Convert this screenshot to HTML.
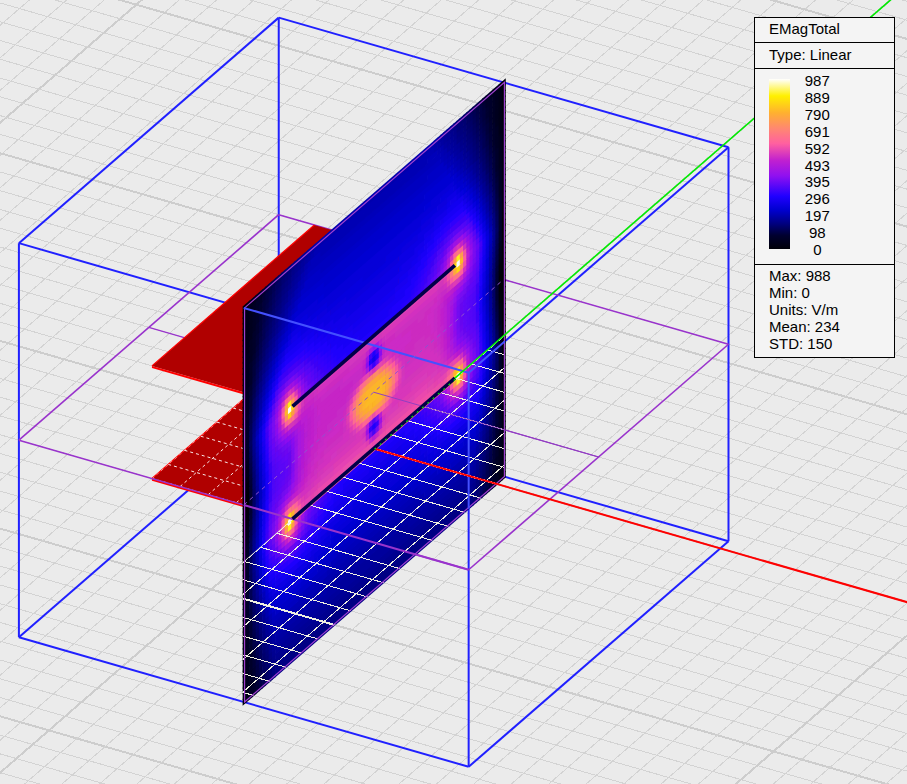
<!DOCTYPE html><html><head><meta charset="utf-8"><style>html,body{margin:0;padding:0;width:907px;height:784px;overflow:hidden;background:#ebebeb}</style></head><body><svg width="907" height="784" viewBox="0 0 907 784" style="position:absolute;left:0;top:0">
<rect x="0" y="0" width="907" height="784" fill="#ebebeb"/>
<g shape-rendering="crispEdges">
<line x1="-1400.3" y1="688.34" x2="-101.1" y2="-439.18" stroke="#cdcdcd" stroke-width="2"/>
<line x1="-1400.3" y1="688.34" x2="848.5" y2="1336.18" stroke="#cdcdcd" stroke-width="2"/>
<line x1="-1372.19" y1="696.44" x2="-72.99" y2="-431.08" stroke="#d3d3d3" stroke-width="1"/>
<line x1="-1384.06" y1="674.25" x2="864.74" y2="1322.09" stroke="#d3d3d3" stroke-width="1"/>
<line x1="-1344.08" y1="704.54" x2="-44.88" y2="-422.98" stroke="#d3d3d3" stroke-width="1"/>
<line x1="-1367.82" y1="660.15" x2="880.98" y2="1307.99" stroke="#d3d3d3" stroke-width="1"/>
<line x1="-1315.97" y1="712.63" x2="-16.77" y2="-414.89" stroke="#d3d3d3" stroke-width="1"/>
<line x1="-1351.58" y1="646.06" x2="897.22" y2="1293.9" stroke="#d3d3d3" stroke-width="1"/>
<line x1="-1287.86" y1="720.73" x2="11.34" y2="-406.79" stroke="#d3d3d3" stroke-width="1"/>
<line x1="-1335.34" y1="631.96" x2="913.46" y2="1279.8" stroke="#d3d3d3" stroke-width="1"/>
<line x1="-1259.75" y1="728.83" x2="39.45" y2="-398.69" stroke="#d3d3d3" stroke-width="1"/>
<line x1="-1319.1" y1="617.87" x2="929.7" y2="1265.71" stroke="#d3d3d3" stroke-width="1"/>
<line x1="-1231.64" y1="736.93" x2="67.56" y2="-390.59" stroke="#d3d3d3" stroke-width="1"/>
<line x1="-1302.86" y1="603.78" x2="945.94" y2="1251.62" stroke="#d3d3d3" stroke-width="1"/>
<line x1="-1203.53" y1="745.03" x2="95.67" y2="-382.49" stroke="#d3d3d3" stroke-width="1"/>
<line x1="-1286.62" y1="589.68" x2="962.18" y2="1237.52" stroke="#d3d3d3" stroke-width="1"/>
<line x1="-1175.42" y1="753.12" x2="123.78" y2="-374.4" stroke="#d3d3d3" stroke-width="1"/>
<line x1="-1270.38" y1="575.59" x2="978.42" y2="1223.43" stroke="#d3d3d3" stroke-width="1"/>
<line x1="-1147.31" y1="761.22" x2="151.89" y2="-366.3" stroke="#d3d3d3" stroke-width="1"/>
<line x1="-1254.14" y1="561.49" x2="994.66" y2="1209.33" stroke="#d3d3d3" stroke-width="1"/>
<line x1="-1119.2" y1="769.32" x2="180" y2="-358.2" stroke="#d3d3d3" stroke-width="1"/>
<line x1="-1237.9" y1="547.4" x2="1010.9" y2="1195.24" stroke="#cdcdcd" stroke-width="2"/>
<line x1="-1091.09" y1="777.42" x2="208.11" y2="-350.1" stroke="#d3d3d3" stroke-width="1"/>
<line x1="-1221.66" y1="533.31" x2="1027.14" y2="1181.15" stroke="#d3d3d3" stroke-width="1"/>
<line x1="-1062.98" y1="785.52" x2="236.22" y2="-342" stroke="#d3d3d3" stroke-width="1"/>
<line x1="-1205.42" y1="519.21" x2="1043.38" y2="1167.05" stroke="#d3d3d3" stroke-width="1"/>
<line x1="-1034.87" y1="793.61" x2="264.33" y2="-333.91" stroke="#d3d3d3" stroke-width="1"/>
<line x1="-1189.18" y1="505.12" x2="1059.62" y2="1152.96" stroke="#d3d3d3" stroke-width="1"/>
<line x1="-1006.76" y1="801.71" x2="292.44" y2="-325.81" stroke="#d3d3d3" stroke-width="1"/>
<line x1="-1172.94" y1="491.02" x2="1075.86" y2="1138.86" stroke="#d3d3d3" stroke-width="1"/>
<line x1="-978.65" y1="809.81" x2="320.55" y2="-317.71" stroke="#d3d3d3" stroke-width="1"/>
<line x1="-1156.7" y1="476.93" x2="1092.1" y2="1124.77" stroke="#d3d3d3" stroke-width="1"/>
<line x1="-950.54" y1="817.91" x2="348.66" y2="-309.61" stroke="#d3d3d3" stroke-width="1"/>
<line x1="-1140.46" y1="462.84" x2="1108.34" y2="1110.68" stroke="#d3d3d3" stroke-width="1"/>
<line x1="-922.43" y1="826.01" x2="376.77" y2="-301.51" stroke="#d3d3d3" stroke-width="1"/>
<line x1="-1124.22" y1="448.74" x2="1124.58" y2="1096.58" stroke="#d3d3d3" stroke-width="1"/>
<line x1="-894.32" y1="834.1" x2="404.88" y2="-293.42" stroke="#d3d3d3" stroke-width="1"/>
<line x1="-1107.98" y1="434.65" x2="1140.82" y2="1082.49" stroke="#d3d3d3" stroke-width="1"/>
<line x1="-866.21" y1="842.2" x2="432.99" y2="-285.32" stroke="#d3d3d3" stroke-width="1"/>
<line x1="-1091.74" y1="420.55" x2="1157.06" y2="1068.39" stroke="#d3d3d3" stroke-width="1"/>
<line x1="-838.1" y1="850.3" x2="461.1" y2="-277.22" stroke="#cdcdcd" stroke-width="2"/>
<line x1="-1075.5" y1="406.46" x2="1173.3" y2="1054.3" stroke="#cdcdcd" stroke-width="2"/>
<line x1="-809.99" y1="858.4" x2="489.21" y2="-269.12" stroke="#d3d3d3" stroke-width="1"/>
<line x1="-1059.26" y1="392.37" x2="1189.54" y2="1040.21" stroke="#d3d3d3" stroke-width="1"/>
<line x1="-781.88" y1="866.5" x2="517.32" y2="-261.02" stroke="#d3d3d3" stroke-width="1"/>
<line x1="-1043.02" y1="378.27" x2="1205.78" y2="1026.11" stroke="#d3d3d3" stroke-width="1"/>
<line x1="-753.77" y1="874.59" x2="545.43" y2="-252.93" stroke="#d3d3d3" stroke-width="1"/>
<line x1="-1026.78" y1="364.18" x2="1222.02" y2="1012.02" stroke="#d3d3d3" stroke-width="1"/>
<line x1="-725.66" y1="882.69" x2="573.54" y2="-244.83" stroke="#d3d3d3" stroke-width="1"/>
<line x1="-1010.54" y1="350.08" x2="1238.26" y2="997.92" stroke="#d3d3d3" stroke-width="1"/>
<line x1="-697.55" y1="890.79" x2="601.65" y2="-236.73" stroke="#d3d3d3" stroke-width="1"/>
<line x1="-994.3" y1="335.99" x2="1254.5" y2="983.83" stroke="#d3d3d3" stroke-width="1"/>
<line x1="-669.44" y1="898.89" x2="629.76" y2="-228.63" stroke="#d3d3d3" stroke-width="1"/>
<line x1="-978.06" y1="321.9" x2="1270.74" y2="969.74" stroke="#d3d3d3" stroke-width="1"/>
<line x1="-641.33" y1="906.99" x2="657.87" y2="-220.53" stroke="#d3d3d3" stroke-width="1"/>
<line x1="-961.82" y1="307.8" x2="1286.98" y2="955.64" stroke="#d3d3d3" stroke-width="1"/>
<line x1="-613.22" y1="915.08" x2="685.98" y2="-212.44" stroke="#d3d3d3" stroke-width="1"/>
<line x1="-945.58" y1="293.71" x2="1303.22" y2="941.55" stroke="#d3d3d3" stroke-width="1"/>
<line x1="-585.11" y1="923.18" x2="714.09" y2="-204.34" stroke="#d3d3d3" stroke-width="1"/>
<line x1="-929.34" y1="279.61" x2="1319.46" y2="927.45" stroke="#d3d3d3" stroke-width="1"/>
<line x1="-557" y1="931.28" x2="742.2" y2="-196.24" stroke="#d3d3d3" stroke-width="1"/>
<line x1="-913.1" y1="265.52" x2="1335.7" y2="913.36" stroke="#cdcdcd" stroke-width="2"/>
<line x1="-528.89" y1="939.38" x2="770.31" y2="-188.14" stroke="#d3d3d3" stroke-width="1"/>
<line x1="-896.86" y1="251.43" x2="1351.94" y2="899.27" stroke="#d3d3d3" stroke-width="1"/>
<line x1="-500.78" y1="947.48" x2="798.42" y2="-180.04" stroke="#d3d3d3" stroke-width="1"/>
<line x1="-880.62" y1="237.33" x2="1368.18" y2="885.17" stroke="#d3d3d3" stroke-width="1"/>
<line x1="-472.67" y1="955.57" x2="826.53" y2="-171.95" stroke="#d3d3d3" stroke-width="1"/>
<line x1="-864.38" y1="223.24" x2="1384.42" y2="871.08" stroke="#d3d3d3" stroke-width="1"/>
<line x1="-444.56" y1="963.67" x2="854.64" y2="-163.85" stroke="#d3d3d3" stroke-width="1"/>
<line x1="-848.14" y1="209.14" x2="1400.66" y2="856.98" stroke="#d3d3d3" stroke-width="1"/>
<line x1="-416.45" y1="971.77" x2="882.75" y2="-155.75" stroke="#d3d3d3" stroke-width="1"/>
<line x1="-831.9" y1="195.05" x2="1416.9" y2="842.89" stroke="#d3d3d3" stroke-width="1"/>
<line x1="-388.34" y1="979.87" x2="910.86" y2="-147.65" stroke="#d3d3d3" stroke-width="1"/>
<line x1="-815.66" y1="180.96" x2="1433.14" y2="828.8" stroke="#d3d3d3" stroke-width="1"/>
<line x1="-360.23" y1="987.97" x2="938.97" y2="-139.55" stroke="#d3d3d3" stroke-width="1"/>
<line x1="-799.42" y1="166.86" x2="1449.38" y2="814.7" stroke="#d3d3d3" stroke-width="1"/>
<line x1="-332.12" y1="996.06" x2="967.08" y2="-131.46" stroke="#d3d3d3" stroke-width="1"/>
<line x1="-783.18" y1="152.77" x2="1465.62" y2="800.61" stroke="#d3d3d3" stroke-width="1"/>
<line x1="-304.01" y1="1004.16" x2="995.19" y2="-123.36" stroke="#d3d3d3" stroke-width="1"/>
<line x1="-766.94" y1="138.67" x2="1481.86" y2="786.51" stroke="#d3d3d3" stroke-width="1"/>
<line x1="-275.9" y1="1012.26" x2="1023.3" y2="-115.26" stroke="#cdcdcd" stroke-width="2"/>
<line x1="-750.7" y1="124.58" x2="1498.1" y2="772.42" stroke="#cdcdcd" stroke-width="2"/>
<line x1="-247.79" y1="1020.36" x2="1051.41" y2="-107.16" stroke="#d3d3d3" stroke-width="1"/>
<line x1="-734.46" y1="110.49" x2="1514.34" y2="758.33" stroke="#d3d3d3" stroke-width="1"/>
<line x1="-219.68" y1="1028.46" x2="1079.52" y2="-99.06" stroke="#d3d3d3" stroke-width="1"/>
<line x1="-718.22" y1="96.39" x2="1530.58" y2="744.23" stroke="#d3d3d3" stroke-width="1"/>
<line x1="-191.57" y1="1036.55" x2="1107.63" y2="-90.97" stroke="#d3d3d3" stroke-width="1"/>
<line x1="-701.98" y1="82.3" x2="1546.82" y2="730.14" stroke="#d3d3d3" stroke-width="1"/>
<line x1="-163.46" y1="1044.65" x2="1135.74" y2="-82.87" stroke="#d3d3d3" stroke-width="1"/>
<line x1="-685.74" y1="68.2" x2="1563.06" y2="716.04" stroke="#d3d3d3" stroke-width="1"/>
<line x1="-135.35" y1="1052.75" x2="1163.85" y2="-74.77" stroke="#d3d3d3" stroke-width="1"/>
<line x1="-669.5" y1="54.11" x2="1579.3" y2="701.95" stroke="#d3d3d3" stroke-width="1"/>
<line x1="-107.24" y1="1060.85" x2="1191.96" y2="-66.67" stroke="#d3d3d3" stroke-width="1"/>
<line x1="-653.26" y1="40.02" x2="1595.54" y2="687.86" stroke="#d3d3d3" stroke-width="1"/>
<line x1="-79.13" y1="1068.95" x2="1220.07" y2="-58.57" stroke="#d3d3d3" stroke-width="1"/>
<line x1="-637.02" y1="25.92" x2="1611.78" y2="673.76" stroke="#d3d3d3" stroke-width="1"/>
<line x1="-51.02" y1="1077.04" x2="1248.18" y2="-50.48" stroke="#d3d3d3" stroke-width="1"/>
<line x1="-620.78" y1="11.83" x2="1628.02" y2="659.67" stroke="#d3d3d3" stroke-width="1"/>
<line x1="-22.91" y1="1085.14" x2="1276.29" y2="-42.38" stroke="#d3d3d3" stroke-width="1"/>
<line x1="-604.54" y1="-2.27" x2="1644.26" y2="645.57" stroke="#d3d3d3" stroke-width="1"/>
<line x1="5.2" y1="1093.24" x2="1304.4" y2="-34.28" stroke="#d3d3d3" stroke-width="1"/>
<line x1="-588.3" y1="-16.36" x2="1660.5" y2="631.48" stroke="#cdcdcd" stroke-width="2"/>
<line x1="33.31" y1="1101.34" x2="1332.51" y2="-26.18" stroke="#d3d3d3" stroke-width="1"/>
<line x1="-572.06" y1="-30.45" x2="1676.74" y2="617.39" stroke="#d3d3d3" stroke-width="1"/>
<line x1="61.42" y1="1109.44" x2="1360.62" y2="-18.08" stroke="#d3d3d3" stroke-width="1"/>
<line x1="-555.82" y1="-44.55" x2="1692.98" y2="603.29" stroke="#d3d3d3" stroke-width="1"/>
<line x1="89.53" y1="1117.53" x2="1388.73" y2="-9.99" stroke="#d3d3d3" stroke-width="1"/>
<line x1="-539.58" y1="-58.64" x2="1709.22" y2="589.2" stroke="#d3d3d3" stroke-width="1"/>
<line x1="117.64" y1="1125.63" x2="1416.84" y2="-1.89" stroke="#d3d3d3" stroke-width="1"/>
<line x1="-523.34" y1="-72.74" x2="1725.46" y2="575.1" stroke="#d3d3d3" stroke-width="1"/>
<line x1="145.75" y1="1133.73" x2="1444.95" y2="6.21" stroke="#d3d3d3" stroke-width="1"/>
<line x1="-507.1" y1="-86.83" x2="1741.7" y2="561.01" stroke="#d3d3d3" stroke-width="1"/>
<line x1="173.86" y1="1141.83" x2="1473.06" y2="14.31" stroke="#d3d3d3" stroke-width="1"/>
<line x1="-490.86" y1="-100.92" x2="1757.94" y2="546.92" stroke="#d3d3d3" stroke-width="1"/>
<line x1="201.97" y1="1149.93" x2="1501.17" y2="22.41" stroke="#d3d3d3" stroke-width="1"/>
<line x1="-474.62" y1="-115.02" x2="1774.18" y2="532.82" stroke="#d3d3d3" stroke-width="1"/>
<line x1="230.08" y1="1158.02" x2="1529.28" y2="30.5" stroke="#d3d3d3" stroke-width="1"/>
<line x1="-458.38" y1="-129.11" x2="1790.42" y2="518.73" stroke="#d3d3d3" stroke-width="1"/>
<line x1="258.19" y1="1166.12" x2="1557.39" y2="38.6" stroke="#d3d3d3" stroke-width="1"/>
<line x1="-442.14" y1="-143.21" x2="1806.66" y2="504.63" stroke="#d3d3d3" stroke-width="1"/>
<line x1="286.3" y1="1174.22" x2="1585.5" y2="46.7" stroke="#cdcdcd" stroke-width="2"/>
<line x1="-425.9" y1="-157.3" x2="1822.9" y2="490.54" stroke="#cdcdcd" stroke-width="2"/>
<line x1="314.41" y1="1182.32" x2="1613.61" y2="54.8" stroke="#d3d3d3" stroke-width="1"/>
<line x1="-409.66" y1="-171.39" x2="1839.14" y2="476.45" stroke="#d3d3d3" stroke-width="1"/>
<line x1="342.52" y1="1190.42" x2="1641.72" y2="62.9" stroke="#d3d3d3" stroke-width="1"/>
<line x1="-393.42" y1="-185.49" x2="1855.38" y2="462.35" stroke="#d3d3d3" stroke-width="1"/>
<line x1="370.63" y1="1198.51" x2="1669.83" y2="70.99" stroke="#d3d3d3" stroke-width="1"/>
<line x1="-377.18" y1="-199.58" x2="1871.62" y2="448.26" stroke="#d3d3d3" stroke-width="1"/>
<line x1="398.74" y1="1206.61" x2="1697.94" y2="79.09" stroke="#d3d3d3" stroke-width="1"/>
<line x1="-360.94" y1="-213.68" x2="1887.86" y2="434.16" stroke="#d3d3d3" stroke-width="1"/>
<line x1="426.85" y1="1214.71" x2="1726.05" y2="87.19" stroke="#d3d3d3" stroke-width="1"/>
<line x1="-344.7" y1="-227.77" x2="1904.1" y2="420.07" stroke="#d3d3d3" stroke-width="1"/>
<line x1="454.96" y1="1222.81" x2="1754.16" y2="95.29" stroke="#d3d3d3" stroke-width="1"/>
<line x1="-328.46" y1="-241.86" x2="1920.34" y2="405.98" stroke="#d3d3d3" stroke-width="1"/>
<line x1="483.07" y1="1230.91" x2="1782.27" y2="103.39" stroke="#d3d3d3" stroke-width="1"/>
<line x1="-312.22" y1="-255.96" x2="1936.58" y2="391.88" stroke="#d3d3d3" stroke-width="1"/>
<line x1="511.18" y1="1239" x2="1810.38" y2="111.48" stroke="#d3d3d3" stroke-width="1"/>
<line x1="-295.98" y1="-270.05" x2="1952.82" y2="377.79" stroke="#d3d3d3" stroke-width="1"/>
<line x1="539.29" y1="1247.1" x2="1838.49" y2="119.58" stroke="#d3d3d3" stroke-width="1"/>
<line x1="-279.74" y1="-284.15" x2="1969.06" y2="363.69" stroke="#d3d3d3" stroke-width="1"/>
<line x1="567.4" y1="1255.2" x2="1866.6" y2="127.68" stroke="#d3d3d3" stroke-width="1"/>
<line x1="-263.5" y1="-298.24" x2="1985.3" y2="349.6" stroke="#cdcdcd" stroke-width="2"/>
<line x1="595.51" y1="1263.3" x2="1894.71" y2="135.78" stroke="#d3d3d3" stroke-width="1"/>
<line x1="-247.26" y1="-312.33" x2="2001.54" y2="335.51" stroke="#d3d3d3" stroke-width="1"/>
<line x1="623.62" y1="1271.4" x2="1922.82" y2="143.88" stroke="#d3d3d3" stroke-width="1"/>
<line x1="-231.02" y1="-326.43" x2="2017.78" y2="321.41" stroke="#d3d3d3" stroke-width="1"/>
<line x1="651.73" y1="1279.49" x2="1950.93" y2="151.97" stroke="#d3d3d3" stroke-width="1"/>
<line x1="-214.78" y1="-340.52" x2="2034.02" y2="307.32" stroke="#d3d3d3" stroke-width="1"/>
<line x1="679.84" y1="1287.59" x2="1979.04" y2="160.07" stroke="#d3d3d3" stroke-width="1"/>
<line x1="-198.54" y1="-354.62" x2="2050.26" y2="293.22" stroke="#d3d3d3" stroke-width="1"/>
<line x1="707.95" y1="1295.69" x2="2007.15" y2="168.17" stroke="#d3d3d3" stroke-width="1"/>
<line x1="-182.3" y1="-368.71" x2="2066.5" y2="279.13" stroke="#d3d3d3" stroke-width="1"/>
<line x1="736.06" y1="1303.79" x2="2035.26" y2="176.27" stroke="#d3d3d3" stroke-width="1"/>
<line x1="-166.06" y1="-382.8" x2="2082.74" y2="265.04" stroke="#d3d3d3" stroke-width="1"/>
<line x1="764.17" y1="1311.89" x2="2063.37" y2="184.37" stroke="#d3d3d3" stroke-width="1"/>
<line x1="-149.82" y1="-396.9" x2="2098.98" y2="250.94" stroke="#d3d3d3" stroke-width="1"/>
<line x1="792.28" y1="1319.98" x2="2091.48" y2="192.46" stroke="#d3d3d3" stroke-width="1"/>
<line x1="-133.58" y1="-410.99" x2="2115.22" y2="236.85" stroke="#d3d3d3" stroke-width="1"/>
<line x1="820.39" y1="1328.08" x2="2119.59" y2="200.56" stroke="#d3d3d3" stroke-width="1"/>
<line x1="-117.34" y1="-425.09" x2="2131.46" y2="222.75" stroke="#d3d3d3" stroke-width="1"/>
<line x1="848.5" y1="1336.18" x2="2147.7" y2="208.66" stroke="#cdcdcd" stroke-width="2"/>
<line x1="-101.1" y1="-439.18" x2="2147.7" y2="208.66" stroke="#cdcdcd" stroke-width="2"/>
</g>
<line x1="18.9" y1="243.14" x2="468.66" y2="372.7" stroke="#2020ff" stroke-width="2"/>
<line x1="278.74" y1="17.63" x2="728.5" y2="147.2" stroke="#2020ff" stroke-width="2"/>
<line x1="18.9" y1="243.14" x2="278.74" y2="17.63" stroke="#2020ff" stroke-width="2"/>
<line x1="468.66" y1="372.7" x2="728.5" y2="147.2" stroke="#2020ff" stroke-width="2"/>
<line x1="18.9" y1="637.21" x2="468.66" y2="766.78" stroke="#2020ff" stroke-width="2"/>
<line x1="278.74" y1="411.7" x2="728.5" y2="541.27" stroke="#2020ff" stroke-width="2"/>
<line x1="18.9" y1="637.21" x2="278.74" y2="411.7" stroke="#2020ff" stroke-width="2"/>
<line x1="468.66" y1="766.78" x2="728.5" y2="541.27" stroke="#2020ff" stroke-width="2"/>
<line x1="18.9" y1="637.21" x2="18.9" y2="243.14" stroke="#2020ff" stroke-width="2"/>
<line x1="468.66" y1="766.78" x2="468.66" y2="372.7" stroke="#2020ff" stroke-width="2"/>
<line x1="278.74" y1="411.7" x2="278.74" y2="17.63" stroke="#2020ff" stroke-width="2"/>
<line x1="728.5" y1="541.27" x2="728.5" y2="147.2" stroke="#2020ff" stroke-width="2"/>
<polygon points="151.95,478.48 292.5,518.97 454.9,378.03 314.35,337.54" fill="#b00000"/><polygon points="151.95,478.48 292.5,518.97 292.5,521.17 151.95,480.68" fill="#ff0000"/><line x1="151.95" y1="478.48" x2="314.35" y2="337.54" stroke="#ff0000" stroke-width="1.2"/>
<clipPath id="lpclip"><polygon points="151.95,478.48 292.5,518.97 454.9,378.03 314.35,337.54"/></clipPath>
<g clip-path="url(#lpclip)" stroke-dasharray="3 3">
<line x1="151.95" y1="478.48" x2="314.35" y2="337.54" stroke="#f8e8e8" stroke-width="1"/>
<line x1="180.06" y1="486.58" x2="342.46" y2="345.64" stroke="#f8e8e8" stroke-width="1"/>
<line x1="208.17" y1="494.68" x2="370.57" y2="353.74" stroke="#f8e8e8" stroke-width="1"/>
<line x1="236.28" y1="502.77" x2="398.68" y2="361.83" stroke="#f8e8e8" stroke-width="1"/>
<line x1="264.39" y1="510.87" x2="426.79" y2="369.93" stroke="#f8e8e8" stroke-width="1"/>
<line x1="292.5" y1="518.97" x2="454.9" y2="378.03" stroke="#f8e8e8" stroke-width="1"/>
<line x1="151.95" y1="478.48" x2="292.5" y2="518.97" stroke="#f8e8e8" stroke-width="1"/>
<line x1="168.19" y1="464.39" x2="308.74" y2="504.88" stroke="#f8e8e8" stroke-width="1"/>
<line x1="184.43" y1="450.29" x2="324.98" y2="490.78" stroke="#f8e8e8" stroke-width="1"/>
<line x1="200.67" y1="436.2" x2="341.22" y2="476.69" stroke="#f8e8e8" stroke-width="1"/>
<line x1="216.91" y1="422.1" x2="357.46" y2="462.59" stroke="#f8e8e8" stroke-width="1"/>
<line x1="233.15" y1="408.01" x2="373.7" y2="448.5" stroke="#f8e8e8" stroke-width="1"/>
<line x1="249.39" y1="393.92" x2="389.94" y2="434.41" stroke="#f8e8e8" stroke-width="1"/>
<line x1="265.63" y1="379.82" x2="406.18" y2="420.31" stroke="#f8e8e8" stroke-width="1"/>
<line x1="281.87" y1="365.73" x2="422.42" y2="406.22" stroke="#f8e8e8" stroke-width="1"/>
<line x1="298.11" y1="351.63" x2="438.66" y2="392.12" stroke="#f8e8e8" stroke-width="1"/>
<line x1="314.35" y1="337.54" x2="454.9" y2="378.03" stroke="#f8e8e8" stroke-width="1"/>
</g>
<line x1="18.9" y1="440.17" x2="468.66" y2="569.74" stroke="#9933cc" stroke-width="1.6"/>
<line x1="468.66" y1="569.74" x2="728.5" y2="344.24" stroke="#9933cc" stroke-width="1.6"/>
<line x1="728.5" y1="344.24" x2="278.74" y2="214.67" stroke="#9933cc" stroke-width="1.6"/>
<line x1="278.74" y1="214.67" x2="18.9" y2="440.17" stroke="#9933cc" stroke-width="1.6"/>
<line x1="148.82" y1="327.42" x2="598.58" y2="456.99" stroke="#9933cc" stroke-width="1.2"/>
<polygon points="151.95,365.89 292.5,406.38 454.9,265.44 314.35,224.95" fill="#b00000"/><polygon points="151.95,365.89 292.5,406.38 292.5,408.58 151.95,368.09" fill="#ff0000"/><line x1="151.95" y1="365.89" x2="314.35" y2="224.95" stroke="#ff0000" stroke-width="1.2"/>
<g transform="matrix(16.24,-14.09,0,-28.15,374.2,448.3)">
<rect x="-8.1" y="-5.09" width="0.24" height="0.24" fill="#00000c"/>
<rect x="-7.9" y="-5.09" width="0.24" height="0.24" fill="#000018"/>
<rect x="-7.7" y="-5.09" width="0.24" height="0.24" fill="#000024"/>
<rect x="-7.5" y="-5.09" width="0.24" height="0.24" fill="#00002a"/>
<rect x="-7.3" y="-5.09" width="0.24" height="0.24" fill="#000036"/>
<rect x="-7.1" y="-5.09" width="0.24" height="0.24" fill="#000042"/>
<rect x="-6.9" y="-5.09" width="0.24" height="0.24" fill="#00004e"/>
<rect x="-6.7" y="-5.09" width="0.24" height="0.24" fill="#000060"/>
<rect x="-6.5" y="-5.09" width="0.24" height="0.24" fill="#00006c"/>
<rect x="-6.3" y="-5.09" width="0.24" height="0.24" fill="#000078"/>
<rect x="-6.1" y="-5.09" width="12.21" height="0.24" fill="#000084"/>
<rect x="6.06" y="-5.09" width="0.24" height="0.24" fill="#000078"/>
<rect x="6.26" y="-5.09" width="0.24" height="0.24" fill="#00006c"/>
<rect x="6.46" y="-5.09" width="0.24" height="0.24" fill="#000060"/>
<rect x="6.66" y="-5.09" width="0.24" height="0.24" fill="#00004e"/>
<rect x="6.86" y="-5.09" width="0.24" height="0.24" fill="#000042"/>
<rect x="7.06" y="-5.09" width="0.24" height="0.24" fill="#000036"/>
<rect x="7.26" y="-5.09" width="0.24" height="0.24" fill="#00002a"/>
<rect x="7.46" y="-5.09" width="0.24" height="0.24" fill="#000024"/>
<rect x="7.66" y="-5.09" width="0.24" height="0.24" fill="#000018"/>
<rect x="7.86" y="-5.09" width="0.24" height="0.24" fill="#00000c"/>
<rect x="-8.1" y="-4.89" width="0.24" height="0.24" fill="#000012"/>
<rect x="-7.9" y="-4.89" width="0.24" height="0.24" fill="#000018"/>
<rect x="-7.7" y="-4.89" width="0.24" height="0.24" fill="#000024"/>
<rect x="-7.5" y="-4.89" width="0.24" height="0.24" fill="#00002a"/>
<rect x="-7.3" y="-4.89" width="0.24" height="0.24" fill="#000036"/>
<rect x="-7.1" y="-4.89" width="0.24" height="0.24" fill="#000048"/>
<rect x="-6.9" y="-4.89" width="0.24" height="0.24" fill="#000054"/>
<rect x="-6.7" y="-4.89" width="0.24" height="0.24" fill="#000066"/>
<rect x="-6.5" y="-4.89" width="0.24" height="0.24" fill="#000072"/>
<rect x="-6.3" y="-4.89" width="0.24" height="0.24" fill="#00007e"/>
<rect x="-6.1" y="-4.89" width="12.21" height="0.24" fill="#000084"/>
<rect x="6.06" y="-4.89" width="0.24" height="0.24" fill="#00007e"/>
<rect x="6.26" y="-4.89" width="0.24" height="0.24" fill="#000072"/>
<rect x="6.46" y="-4.89" width="0.24" height="0.24" fill="#000066"/>
<rect x="6.66" y="-4.89" width="0.24" height="0.24" fill="#000054"/>
<rect x="6.86" y="-4.89" width="0.24" height="0.24" fill="#000048"/>
<rect x="7.06" y="-4.89" width="0.24" height="0.24" fill="#000036"/>
<rect x="7.26" y="-4.89" width="0.24" height="0.24" fill="#00002a"/>
<rect x="7.46" y="-4.89" width="0.24" height="0.24" fill="#000024"/>
<rect x="7.66" y="-4.89" width="0.24" height="0.24" fill="#000018"/>
<rect x="7.86" y="-4.89" width="0.24" height="0.24" fill="#000012"/>
<rect x="-8.1" y="-4.69" width="0.24" height="0.24" fill="#000012"/>
<rect x="-7.9" y="-4.69" width="0.24" height="0.24" fill="#00001e"/>
<rect x="-7.7" y="-4.69" width="0.24" height="0.24" fill="#000024"/>
<rect x="-7.5" y="-4.69" width="0.24" height="0.24" fill="#00002a"/>
<rect x="-7.3" y="-4.69" width="0.24" height="0.24" fill="#00003c"/>
<rect x="-7.1" y="-4.69" width="0.24" height="0.24" fill="#00004e"/>
<rect x="-6.9" y="-4.69" width="0.24" height="0.24" fill="#00005a"/>
<rect x="-6.7" y="-4.69" width="0.24" height="0.24" fill="#000066"/>
<rect x="-6.5" y="-4.69" width="0.24" height="0.24" fill="#000078"/>
<rect x="-6.3" y="-4.69" width="0.24" height="0.24" fill="#000084"/>
<rect x="-6.1" y="-4.69" width="12.21" height="0.24" fill="#00008a"/>
<rect x="6.06" y="-4.69" width="0.24" height="0.24" fill="#000084"/>
<rect x="6.26" y="-4.69" width="0.24" height="0.24" fill="#000078"/>
<rect x="6.46" y="-4.69" width="0.24" height="0.24" fill="#000066"/>
<rect x="6.66" y="-4.69" width="0.24" height="0.24" fill="#00005a"/>
<rect x="6.86" y="-4.69" width="0.24" height="0.24" fill="#00004e"/>
<rect x="7.06" y="-4.69" width="0.24" height="0.24" fill="#00003c"/>
<rect x="7.26" y="-4.69" width="0.24" height="0.24" fill="#00002a"/>
<rect x="7.46" y="-4.69" width="0.24" height="0.24" fill="#000024"/>
<rect x="7.66" y="-4.69" width="0.24" height="0.24" fill="#00001e"/>
<rect x="7.86" y="-4.69" width="0.24" height="0.24" fill="#000012"/>
<rect x="-8.1" y="-4.49" width="0.24" height="0.24" fill="#000012"/>
<rect x="-7.9" y="-4.49" width="0.24" height="0.24" fill="#00001e"/>
<rect x="-7.7" y="-4.49" width="0.24" height="0.24" fill="#000024"/>
<rect x="-7.5" y="-4.49" width="0.24" height="0.24" fill="#000030"/>
<rect x="-7.3" y="-4.49" width="0.24" height="0.24" fill="#000042"/>
<rect x="-7.1" y="-4.49" width="0.24" height="0.24" fill="#00004e"/>
<rect x="-6.9" y="-4.49" width="0.24" height="0.24" fill="#000060"/>
<rect x="-6.7" y="-4.49" width="0.24" height="0.24" fill="#00006c"/>
<rect x="-6.5" y="-4.49" width="0.24" height="0.24" fill="#00007e"/>
<rect x="-6.3" y="-4.49" width="0.24" height="0.24" fill="#00008a"/>
<rect x="-6.1" y="-4.49" width="12.21" height="0.24" fill="#000090"/>
<rect x="6.06" y="-4.49" width="0.24" height="0.24" fill="#00008a"/>
<rect x="6.26" y="-4.49" width="0.24" height="0.24" fill="#00007e"/>
<rect x="6.46" y="-4.49" width="0.24" height="0.24" fill="#00006c"/>
<rect x="6.66" y="-4.49" width="0.24" height="0.24" fill="#000060"/>
<rect x="6.86" y="-4.49" width="0.24" height="0.24" fill="#00004e"/>
<rect x="7.06" y="-4.49" width="0.24" height="0.24" fill="#000042"/>
<rect x="7.26" y="-4.49" width="0.24" height="0.24" fill="#000030"/>
<rect x="7.46" y="-4.49" width="0.24" height="0.24" fill="#000024"/>
<rect x="7.66" y="-4.49" width="0.24" height="0.24" fill="#00001e"/>
<rect x="7.86" y="-4.49" width="0.24" height="0.24" fill="#000012"/>
<rect x="-8.1" y="-4.29" width="0.24" height="0.24" fill="#000012"/>
<rect x="-7.9" y="-4.29" width="0.24" height="0.24" fill="#00001e"/>
<rect x="-7.7" y="-4.29" width="0.24" height="0.24" fill="#000024"/>
<rect x="-7.5" y="-4.29" width="0.24" height="0.24" fill="#000030"/>
<rect x="-7.3" y="-4.29" width="0.24" height="0.24" fill="#000042"/>
<rect x="-7.1" y="-4.29" width="0.24" height="0.24" fill="#000054"/>
<rect x="-6.9" y="-4.29" width="0.24" height="0.24" fill="#000066"/>
<rect x="-6.7" y="-4.29" width="0.24" height="0.24" fill="#000072"/>
<rect x="-6.5" y="-4.29" width="0.24" height="0.24" fill="#000084"/>
<rect x="-6.3" y="-4.29" width="0.24" height="0.24" fill="#000090"/>
<rect x="-6.1" y="-4.29" width="12.21" height="0.24" fill="#000096"/>
<rect x="6.06" y="-4.29" width="0.24" height="0.24" fill="#000090"/>
<rect x="6.26" y="-4.29" width="0.24" height="0.24" fill="#000084"/>
<rect x="6.46" y="-4.29" width="0.24" height="0.24" fill="#000072"/>
<rect x="6.66" y="-4.29" width="0.24" height="0.24" fill="#000066"/>
<rect x="6.86" y="-4.29" width="0.24" height="0.24" fill="#000054"/>
<rect x="7.06" y="-4.29" width="0.24" height="0.24" fill="#000042"/>
<rect x="7.26" y="-4.29" width="0.24" height="0.24" fill="#000030"/>
<rect x="7.46" y="-4.29" width="0.24" height="0.24" fill="#000024"/>
<rect x="7.66" y="-4.29" width="0.24" height="0.24" fill="#00001e"/>
<rect x="7.86" y="-4.29" width="0.24" height="0.24" fill="#000012"/>
<rect x="-8.1" y="-4.09" width="0.24" height="0.24" fill="#000012"/>
<rect x="-7.9" y="-4.09" width="0.24" height="0.24" fill="#00001e"/>
<rect x="-7.7" y="-4.09" width="0.24" height="0.24" fill="#00002a"/>
<rect x="-7.5" y="-4.09" width="0.24" height="0.24" fill="#000036"/>
<rect x="-7.3" y="-4.09" width="0.24" height="0.24" fill="#000048"/>
<rect x="-7.1" y="-4.09" width="0.24" height="0.24" fill="#00005a"/>
<rect x="-6.9" y="-4.09" width="0.24" height="0.24" fill="#00006c"/>
<rect x="-6.7" y="-4.09" width="0.24" height="0.24" fill="#000078"/>
<rect x="-6.5" y="-4.09" width="0.24" height="0.24" fill="#00008a"/>
<rect x="-6.3" y="-4.09" width="0.24" height="0.24" fill="#000096"/>
<rect x="-6.1" y="-4.09" width="12.21" height="0.24" fill="#00009c"/>
<rect x="6.06" y="-4.09" width="0.24" height="0.24" fill="#000096"/>
<rect x="6.26" y="-4.09" width="0.24" height="0.24" fill="#00008a"/>
<rect x="6.46" y="-4.09" width="0.24" height="0.24" fill="#000078"/>
<rect x="6.66" y="-4.09" width="0.24" height="0.24" fill="#00006c"/>
<rect x="6.86" y="-4.09" width="0.24" height="0.24" fill="#00005a"/>
<rect x="7.06" y="-4.09" width="0.24" height="0.24" fill="#000048"/>
<rect x="7.26" y="-4.09" width="0.24" height="0.24" fill="#000036"/>
<rect x="7.46" y="-4.09" width="0.24" height="0.24" fill="#00002a"/>
<rect x="7.66" y="-4.09" width="0.24" height="0.24" fill="#00001e"/>
<rect x="7.86" y="-4.09" width="0.24" height="0.24" fill="#000012"/>
<rect x="-8.1" y="-3.9" width="0.24" height="0.24" fill="#000012"/>
<rect x="-7.9" y="-3.9" width="0.24" height="0.24" fill="#00001e"/>
<rect x="-7.7" y="-3.9" width="0.24" height="0.24" fill="#00002a"/>
<rect x="-7.5" y="-3.9" width="0.24" height="0.24" fill="#000036"/>
<rect x="-7.3" y="-3.9" width="0.24" height="0.24" fill="#00004e"/>
<rect x="-7.1" y="-3.9" width="0.24" height="0.24" fill="#000060"/>
<rect x="-6.9" y="-3.9" width="0.24" height="0.24" fill="#000072"/>
<rect x="-6.7" y="-3.9" width="0.24" height="0.24" fill="#00007e"/>
<rect x="-6.5" y="-3.9" width="0.24" height="0.24" fill="#000090"/>
<rect x="-6.3" y="-3.9" width="0.24" height="0.24" fill="#00009c"/>
<rect x="-6.1" y="-3.9" width="4.03" height="0.24" fill="#0000a2"/>
<rect x="-2.11" y="-3.9" width="4.23" height="0.24" fill="#00009c"/>
<rect x="2.07" y="-3.9" width="4.03" height="0.24" fill="#0000a2"/>
<rect x="6.06" y="-3.9" width="0.24" height="0.24" fill="#00009c"/>
<rect x="6.26" y="-3.9" width="0.24" height="0.24" fill="#000090"/>
<rect x="6.46" y="-3.9" width="0.24" height="0.24" fill="#00007e"/>
<rect x="6.66" y="-3.9" width="0.24" height="0.24" fill="#000072"/>
<rect x="6.86" y="-3.9" width="0.24" height="0.24" fill="#000060"/>
<rect x="7.06" y="-3.9" width="0.24" height="0.24" fill="#00004e"/>
<rect x="7.26" y="-3.9" width="0.24" height="0.24" fill="#000036"/>
<rect x="7.46" y="-3.9" width="0.24" height="0.24" fill="#00002a"/>
<rect x="7.66" y="-3.9" width="0.24" height="0.24" fill="#00001e"/>
<rect x="7.86" y="-3.9" width="0.24" height="0.24" fill="#000012"/>
<rect x="-8.1" y="-3.7" width="0.24" height="0.24" fill="#000012"/>
<rect x="-7.9" y="-3.7" width="0.24" height="0.24" fill="#00001e"/>
<rect x="-7.7" y="-3.7" width="0.24" height="0.24" fill="#00002a"/>
<rect x="-7.5" y="-3.7" width="0.24" height="0.24" fill="#00003c"/>
<rect x="-7.3" y="-3.7" width="0.24" height="0.24" fill="#000054"/>
<rect x="-7.1" y="-3.7" width="0.24" height="0.24" fill="#000066"/>
<rect x="-6.9" y="-3.7" width="0.24" height="0.24" fill="#000078"/>
<rect x="-6.7" y="-3.7" width="0.24" height="0.24" fill="#000084"/>
<rect x="-6.5" y="-3.7" width="0.24" height="0.24" fill="#000096"/>
<rect x="-6.3" y="-3.7" width="0.24" height="0.24" fill="#0000a2"/>
<rect x="-6.1" y="-3.7" width="3.23" height="0.24" fill="#0000a8"/>
<rect x="-2.91" y="-3.7" width="5.83" height="0.24" fill="#0000a2"/>
<rect x="2.87" y="-3.7" width="3.23" height="0.24" fill="#0000a8"/>
<rect x="6.06" y="-3.7" width="0.24" height="0.24" fill="#0000a2"/>
<rect x="6.26" y="-3.7" width="0.24" height="0.24" fill="#000096"/>
<rect x="6.46" y="-3.7" width="0.24" height="0.24" fill="#000084"/>
<rect x="6.66" y="-3.7" width="0.24" height="0.24" fill="#000078"/>
<rect x="6.86" y="-3.7" width="0.24" height="0.24" fill="#000066"/>
<rect x="7.06" y="-3.7" width="0.24" height="0.24" fill="#000054"/>
<rect x="7.26" y="-3.7" width="0.24" height="0.24" fill="#00003c"/>
<rect x="7.46" y="-3.7" width="0.24" height="0.24" fill="#00002a"/>
<rect x="7.66" y="-3.7" width="0.24" height="0.24" fill="#00001e"/>
<rect x="7.86" y="-3.7" width="0.24" height="0.24" fill="#000012"/>
<rect x="-8.1" y="-3.5" width="0.24" height="0.24" fill="#000012"/>
<rect x="-7.9" y="-3.5" width="0.24" height="0.24" fill="#00001e"/>
<rect x="-7.7" y="-3.5" width="0.24" height="0.24" fill="#00002a"/>
<rect x="-7.5" y="-3.5" width="0.24" height="0.24" fill="#000042"/>
<rect x="-7.3" y="-3.5" width="0.24" height="0.24" fill="#000054"/>
<rect x="-7.1" y="-3.5" width="0.24" height="0.24" fill="#00006c"/>
<rect x="-6.9" y="-3.5" width="0.24" height="0.24" fill="#00007e"/>
<rect x="-6.7" y="-3.5" width="0.24" height="0.24" fill="#000090"/>
<rect x="-6.5" y="-3.5" width="0.24" height="0.24" fill="#00009c"/>
<rect x="-6.3" y="-3.5" width="3.23" height="0.24" fill="#0000ae"/>
<rect x="-3.11" y="-3.5" width="6.22" height="0.24" fill="#0000a8"/>
<rect x="3.07" y="-3.5" width="3.23" height="0.24" fill="#0000ae"/>
<rect x="6.26" y="-3.5" width="0.24" height="0.24" fill="#00009c"/>
<rect x="6.46" y="-3.5" width="0.24" height="0.24" fill="#000090"/>
<rect x="6.66" y="-3.5" width="0.24" height="0.24" fill="#00007e"/>
<rect x="6.86" y="-3.5" width="0.24" height="0.24" fill="#00006c"/>
<rect x="7.06" y="-3.5" width="0.24" height="0.24" fill="#000054"/>
<rect x="7.26" y="-3.5" width="0.24" height="0.24" fill="#000042"/>
<rect x="7.46" y="-3.5" width="0.24" height="0.24" fill="#00002a"/>
<rect x="7.66" y="-3.5" width="0.24" height="0.24" fill="#00001e"/>
<rect x="7.86" y="-3.5" width="0.24" height="0.24" fill="#000012"/>
<rect x="-8.1" y="-3.3" width="0.24" height="0.24" fill="#000012"/>
<rect x="-7.9" y="-3.3" width="0.24" height="0.24" fill="#000024"/>
<rect x="-7.7" y="-3.3" width="0.24" height="0.24" fill="#000030"/>
<rect x="-7.5" y="-3.3" width="0.24" height="0.24" fill="#000048"/>
<rect x="-7.3" y="-3.3" width="0.24" height="0.24" fill="#00005a"/>
<rect x="-7.1" y="-3.3" width="0.24" height="0.24" fill="#000072"/>
<rect x="-6.9" y="-3.3" width="0.24" height="0.24" fill="#000084"/>
<rect x="-6.7" y="-3.3" width="0.24" height="0.24" fill="#000096"/>
<rect x="-6.5" y="-3.3" width="0.24" height="0.24" fill="#0000a2"/>
<rect x="-6.3" y="-3.3" width="3.23" height="0.24" fill="#0000b4"/>
<rect x="-3.11" y="-3.3" width="6.22" height="0.24" fill="#0000ae"/>
<rect x="3.07" y="-3.3" width="3.23" height="0.24" fill="#0000b4"/>
<rect x="6.26" y="-3.3" width="0.24" height="0.24" fill="#0000a2"/>
<rect x="6.46" y="-3.3" width="0.24" height="0.24" fill="#000096"/>
<rect x="6.66" y="-3.3" width="0.24" height="0.24" fill="#000084"/>
<rect x="6.86" y="-3.3" width="0.24" height="0.24" fill="#000072"/>
<rect x="7.06" y="-3.3" width="0.24" height="0.24" fill="#00005a"/>
<rect x="7.26" y="-3.3" width="0.24" height="0.24" fill="#000048"/>
<rect x="7.46" y="-3.3" width="0.24" height="0.24" fill="#000030"/>
<rect x="7.66" y="-3.3" width="0.24" height="0.24" fill="#000024"/>
<rect x="7.86" y="-3.3" width="0.24" height="0.24" fill="#000012"/>
<rect x="-8.1" y="-3.1" width="0.24" height="0.24" fill="#000012"/>
<rect x="-7.9" y="-3.1" width="0.24" height="0.24" fill="#000024"/>
<rect x="-7.7" y="-3.1" width="0.24" height="0.24" fill="#000030"/>
<rect x="-7.5" y="-3.1" width="0.24" height="0.24" fill="#000048"/>
<rect x="-7.3" y="-3.1" width="0.24" height="0.24" fill="#000060"/>
<rect x="-7.1" y="-3.1" width="0.24" height="0.24" fill="#000078"/>
<rect x="-6.9" y="-3.1" width="0.24" height="0.24" fill="#00008a"/>
<rect x="-6.7" y="-3.1" width="0.24" height="0.24" fill="#00009c"/>
<rect x="-6.5" y="-3.1" width="0.24" height="0.24" fill="#0000ae"/>
<rect x="-6.3" y="-3.1" width="0.84" height="0.24" fill="#0000ba"/>
<rect x="-5.51" y="-3.1" width="0.84" height="0.24" fill="#0000c0"/>
<rect x="-4.71" y="-3.1" width="1.84" height="0.24" fill="#0000ba"/>
<rect x="-2.91" y="-3.1" width="5.83" height="0.24" fill="#0000b4"/>
<rect x="2.87" y="-3.1" width="1.84" height="0.24" fill="#0000ba"/>
<rect x="4.67" y="-3.1" width="0.84" height="0.24" fill="#0000c0"/>
<rect x="5.47" y="-3.1" width="0.84" height="0.24" fill="#0000ba"/>
<rect x="6.26" y="-3.1" width="0.24" height="0.24" fill="#0000ae"/>
<rect x="6.46" y="-3.1" width="0.24" height="0.24" fill="#00009c"/>
<rect x="6.66" y="-3.1" width="0.24" height="0.24" fill="#00008a"/>
<rect x="6.86" y="-3.1" width="0.24" height="0.24" fill="#000078"/>
<rect x="7.06" y="-3.1" width="0.24" height="0.24" fill="#000060"/>
<rect x="7.26" y="-3.1" width="0.24" height="0.24" fill="#000048"/>
<rect x="7.46" y="-3.1" width="0.24" height="0.24" fill="#000030"/>
<rect x="7.66" y="-3.1" width="0.24" height="0.24" fill="#000024"/>
<rect x="7.86" y="-3.1" width="0.24" height="0.24" fill="#000012"/>
<rect x="-8.1" y="-2.9" width="0.24" height="0.24" fill="#000012"/>
<rect x="-7.9" y="-2.9" width="0.24" height="0.24" fill="#000024"/>
<rect x="-7.7" y="-2.9" width="0.24" height="0.24" fill="#000036"/>
<rect x="-7.5" y="-2.9" width="0.24" height="0.24" fill="#00004e"/>
<rect x="-7.3" y="-2.9" width="0.24" height="0.24" fill="#000066"/>
<rect x="-7.1" y="-2.9" width="0.24" height="0.24" fill="#00007e"/>
<rect x="-6.9" y="-2.9" width="0.24" height="0.24" fill="#000090"/>
<rect x="-6.7" y="-2.9" width="0.24" height="0.24" fill="#0000a2"/>
<rect x="-6.5" y="-2.9" width="0.24" height="0.24" fill="#0000b4"/>
<rect x="-6.3" y="-2.9" width="0.24" height="0.24" fill="#0000c0"/>
<rect x="-6.1" y="-2.9" width="2.23" height="0.24" fill="#0000c6"/>
<rect x="-3.91" y="-2.9" width="1.24" height="0.24" fill="#0000c0"/>
<rect x="-2.71" y="-2.9" width="5.43" height="0.24" fill="#0000ba"/>
<rect x="2.67" y="-2.9" width="1.24" height="0.24" fill="#0000c0"/>
<rect x="3.87" y="-2.9" width="2.23" height="0.24" fill="#0000c6"/>
<rect x="6.06" y="-2.9" width="0.24" height="0.24" fill="#0000c0"/>
<rect x="6.26" y="-2.9" width="0.24" height="0.24" fill="#0000b4"/>
<rect x="6.46" y="-2.9" width="0.24" height="0.24" fill="#0000a2"/>
<rect x="6.66" y="-2.9" width="0.24" height="0.24" fill="#000090"/>
<rect x="6.86" y="-2.9" width="0.24" height="0.24" fill="#00007e"/>
<rect x="7.06" y="-2.9" width="0.24" height="0.24" fill="#000066"/>
<rect x="7.26" y="-2.9" width="0.24" height="0.24" fill="#00004e"/>
<rect x="7.46" y="-2.9" width="0.24" height="0.24" fill="#000036"/>
<rect x="7.66" y="-2.9" width="0.24" height="0.24" fill="#000024"/>
<rect x="7.86" y="-2.9" width="0.24" height="0.24" fill="#000012"/>
<rect x="-8.1" y="-2.7" width="0.24" height="0.24" fill="#000012"/>
<rect x="-7.9" y="-2.7" width="0.24" height="0.24" fill="#000024"/>
<rect x="-7.7" y="-2.7" width="0.24" height="0.24" fill="#000036"/>
<rect x="-7.5" y="-2.7" width="0.24" height="0.24" fill="#000054"/>
<rect x="-7.3" y="-2.7" width="0.24" height="0.24" fill="#00006c"/>
<rect x="-7.1" y="-2.7" width="0.24" height="0.24" fill="#000084"/>
<rect x="-6.9" y="-2.7" width="0.24" height="0.24" fill="#000096"/>
<rect x="-6.7" y="-2.7" width="0.24" height="0.24" fill="#0000ae"/>
<rect x="-6.5" y="-2.7" width="0.24" height="0.24" fill="#0000c0"/>
<rect x="-6.3" y="-2.7" width="0.84" height="0.24" fill="#0000cc"/>
<rect x="-5.51" y="-2.7" width="1.04" height="0.24" fill="#0000d2"/>
<rect x="-4.51" y="-2.7" width="1.04" height="0.24" fill="#0000cc"/>
<rect x="-3.51" y="-2.7" width="1.24" height="0.24" fill="#0000c6"/>
<rect x="-2.31" y="-2.7" width="4.63" height="0.24" fill="#0000c0"/>
<rect x="2.27" y="-2.7" width="1.24" height="0.24" fill="#0000c6"/>
<rect x="3.47" y="-2.7" width="1.04" height="0.24" fill="#0000cc"/>
<rect x="4.47" y="-2.7" width="1.04" height="0.24" fill="#0000d2"/>
<rect x="5.47" y="-2.7" width="0.84" height="0.24" fill="#0000cc"/>
<rect x="6.26" y="-2.7" width="0.24" height="0.24" fill="#0000c0"/>
<rect x="6.46" y="-2.7" width="0.24" height="0.24" fill="#0000ae"/>
<rect x="6.66" y="-2.7" width="0.24" height="0.24" fill="#000096"/>
<rect x="6.86" y="-2.7" width="0.24" height="0.24" fill="#000084"/>
<rect x="7.06" y="-2.7" width="0.24" height="0.24" fill="#00006c"/>
<rect x="7.26" y="-2.7" width="0.24" height="0.24" fill="#000054"/>
<rect x="7.46" y="-2.7" width="0.24" height="0.24" fill="#000036"/>
<rect x="7.66" y="-2.7" width="0.24" height="0.24" fill="#000024"/>
<rect x="7.86" y="-2.7" width="0.24" height="0.24" fill="#000012"/>
<rect x="-8.1" y="-2.5" width="0.24" height="0.24" fill="#000012"/>
<rect x="-7.9" y="-2.5" width="0.24" height="0.24" fill="#000024"/>
<rect x="-7.7" y="-2.5" width="0.24" height="0.24" fill="#00003c"/>
<rect x="-7.5" y="-2.5" width="0.24" height="0.24" fill="#00005a"/>
<rect x="-7.3" y="-2.5" width="0.24" height="0.24" fill="#000072"/>
<rect x="-7.1" y="-2.5" width="0.24" height="0.24" fill="#00008a"/>
<rect x="-6.9" y="-2.5" width="0.24" height="0.24" fill="#0000a2"/>
<rect x="-6.7" y="-2.5" width="0.24" height="0.24" fill="#0000b4"/>
<rect x="-6.5" y="-2.5" width="0.24" height="0.24" fill="#0000cc"/>
<rect x="-6.3" y="-2.5" width="0.64" height="0.24" fill="#0000d2"/>
<rect x="-5.71" y="-2.5" width="0.24" height="0.24" fill="#0000d8"/>
<rect x="-5.51" y="-2.5" width="1.04" height="0.24" fill="#0600d8"/>
<rect x="-4.51" y="-2.5" width="0.24" height="0.24" fill="#0000d8"/>
<rect x="-4.31" y="-2.5" width="1.04" height="0.24" fill="#0000d2"/>
<rect x="-3.31" y="-2.5" width="1.24" height="0.24" fill="#0000cc"/>
<rect x="-2.11" y="-2.5" width="4.23" height="0.24" fill="#0000c6"/>
<rect x="2.07" y="-2.5" width="1.24" height="0.24" fill="#0000cc"/>
<rect x="3.27" y="-2.5" width="1.04" height="0.24" fill="#0000d2"/>
<rect x="4.27" y="-2.5" width="0.24" height="0.24" fill="#0000d8"/>
<rect x="4.47" y="-2.5" width="1.04" height="0.24" fill="#0600d8"/>
<rect x="5.47" y="-2.5" width="0.24" height="0.24" fill="#0000d8"/>
<rect x="5.67" y="-2.5" width="0.64" height="0.24" fill="#0000d2"/>
<rect x="6.26" y="-2.5" width="0.24" height="0.24" fill="#0000cc"/>
<rect x="6.46" y="-2.5" width="0.24" height="0.24" fill="#0000b4"/>
<rect x="6.66" y="-2.5" width="0.24" height="0.24" fill="#0000a2"/>
<rect x="6.86" y="-2.5" width="0.24" height="0.24" fill="#00008a"/>
<rect x="7.06" y="-2.5" width="0.24" height="0.24" fill="#000072"/>
<rect x="7.26" y="-2.5" width="0.24" height="0.24" fill="#00005a"/>
<rect x="7.46" y="-2.5" width="0.24" height="0.24" fill="#00003c"/>
<rect x="7.66" y="-2.5" width="0.24" height="0.24" fill="#000024"/>
<rect x="7.86" y="-2.5" width="0.24" height="0.24" fill="#000012"/>
<rect x="-8.1" y="-2.3" width="0.24" height="0.24" fill="#000012"/>
<rect x="-7.9" y="-2.3" width="0.24" height="0.24" fill="#00002a"/>
<rect x="-7.7" y="-2.3" width="0.24" height="0.24" fill="#000042"/>
<rect x="-7.5" y="-2.3" width="0.24" height="0.24" fill="#000060"/>
<rect x="-7.3" y="-2.3" width="0.24" height="0.24" fill="#000078"/>
<rect x="-7.1" y="-2.3" width="0.24" height="0.24" fill="#000090"/>
<rect x="-6.9" y="-2.3" width="0.24" height="0.24" fill="#0000a8"/>
<rect x="-6.7" y="-2.3" width="0.24" height="0.24" fill="#0000c0"/>
<rect x="-6.5" y="-2.3" width="0.24" height="0.24" fill="#0000d2"/>
<rect x="-6.3" y="-2.3" width="0.44" height="0.24" fill="#0600d8"/>
<rect x="-5.91" y="-2.3" width="1.84" height="0.24" fill="#0600de"/>
<rect x="-4.11" y="-2.3" width="0.64" height="0.24" fill="#0600d8"/>
<rect x="-3.51" y="-2.3" width="0.24" height="0.24" fill="#0000d8"/>
<rect x="-3.31" y="-2.3" width="1.24" height="0.24" fill="#0000d2"/>
<rect x="-2.11" y="-2.3" width="4.23" height="0.24" fill="#0000cc"/>
<rect x="2.07" y="-2.3" width="1.24" height="0.24" fill="#0000d2"/>
<rect x="3.27" y="-2.3" width="0.24" height="0.24" fill="#0000d8"/>
<rect x="3.47" y="-2.3" width="0.64" height="0.24" fill="#0600d8"/>
<rect x="4.07" y="-2.3" width="1.84" height="0.24" fill="#0600de"/>
<rect x="5.87" y="-2.3" width="0.44" height="0.24" fill="#0600d8"/>
<rect x="6.26" y="-2.3" width="0.24" height="0.24" fill="#0000d2"/>
<rect x="6.46" y="-2.3" width="0.24" height="0.24" fill="#0000c0"/>
<rect x="6.66" y="-2.3" width="0.24" height="0.24" fill="#0000a8"/>
<rect x="6.86" y="-2.3" width="0.24" height="0.24" fill="#000090"/>
<rect x="7.06" y="-2.3" width="0.24" height="0.24" fill="#000078"/>
<rect x="7.26" y="-2.3" width="0.24" height="0.24" fill="#000060"/>
<rect x="7.46" y="-2.3" width="0.24" height="0.24" fill="#000042"/>
<rect x="7.66" y="-2.3" width="0.24" height="0.24" fill="#00002a"/>
<rect x="7.86" y="-2.3" width="0.24" height="0.24" fill="#000012"/>
<rect x="-8.1" y="-2.1" width="0.24" height="0.24" fill="#000012"/>
<rect x="-7.9" y="-2.1" width="0.24" height="0.24" fill="#00002a"/>
<rect x="-7.7" y="-2.1" width="0.24" height="0.24" fill="#000042"/>
<rect x="-7.5" y="-2.1" width="0.24" height="0.24" fill="#000066"/>
<rect x="-7.3" y="-2.1" width="0.24" height="0.24" fill="#000084"/>
<rect x="-7.1" y="-2.1" width="0.24" height="0.24" fill="#00009c"/>
<rect x="-6.9" y="-2.1" width="0.24" height="0.24" fill="#0000b4"/>
<rect x="-6.7" y="-2.1" width="0.24" height="0.24" fill="#0000cc"/>
<rect x="-6.5" y="-2.1" width="0.24" height="0.24" fill="#0600d8"/>
<rect x="-6.3" y="-2.1" width="0.24" height="0.24" fill="#0c00de"/>
<rect x="-6.1" y="-2.1" width="2.04" height="0.24" fill="#0c00e4"/>
<rect x="-4.11" y="-2.1" width="0.44" height="0.24" fill="#0c00de"/>
<rect x="-3.71" y="-2.1" width="0.44" height="0.24" fill="#0600de"/>
<rect x="-3.31" y="-2.1" width="0.64" height="0.24" fill="#0600d8"/>
<rect x="-2.71" y="-2.1" width="0.24" height="0.24" fill="#0000d8"/>
<rect x="-2.51" y="-2.1" width="5.03" height="0.24" fill="#0000d2"/>
<rect x="2.47" y="-2.1" width="0.24" height="0.24" fill="#0000d8"/>
<rect x="2.67" y="-2.1" width="0.64" height="0.24" fill="#0600d8"/>
<rect x="3.27" y="-2.1" width="0.44" height="0.24" fill="#0600de"/>
<rect x="3.67" y="-2.1" width="0.44" height="0.24" fill="#0c00de"/>
<rect x="4.07" y="-2.1" width="2.04" height="0.24" fill="#0c00e4"/>
<rect x="6.06" y="-2.1" width="0.24" height="0.24" fill="#0c00de"/>
<rect x="6.26" y="-2.1" width="0.24" height="0.24" fill="#0600d8"/>
<rect x="6.46" y="-2.1" width="0.24" height="0.24" fill="#0000cc"/>
<rect x="6.66" y="-2.1" width="0.24" height="0.24" fill="#0000b4"/>
<rect x="6.86" y="-2.1" width="0.24" height="0.24" fill="#00009c"/>
<rect x="7.06" y="-2.1" width="0.24" height="0.24" fill="#000084"/>
<rect x="7.26" y="-2.1" width="0.24" height="0.24" fill="#000066"/>
<rect x="7.46" y="-2.1" width="0.24" height="0.24" fill="#000042"/>
<rect x="7.66" y="-2.1" width="0.24" height="0.24" fill="#00002a"/>
<rect x="7.86" y="-2.1" width="0.24" height="0.24" fill="#000012"/>
<rect x="-8.1" y="-1.9" width="0.24" height="0.24" fill="#000018"/>
<rect x="-7.9" y="-1.9" width="0.24" height="0.24" fill="#00002a"/>
<rect x="-7.7" y="-1.9" width="0.24" height="0.24" fill="#000048"/>
<rect x="-7.5" y="-1.9" width="0.24" height="0.24" fill="#00006c"/>
<rect x="-7.3" y="-1.9" width="0.24" height="0.24" fill="#00008a"/>
<rect x="-7.1" y="-1.9" width="0.24" height="0.24" fill="#0000a2"/>
<rect x="-6.9" y="-1.9" width="0.24" height="0.24" fill="#0000ba"/>
<rect x="-6.7" y="-1.9" width="0.24" height="0.24" fill="#0000d2"/>
<rect x="-6.5" y="-1.9" width="0.24" height="0.24" fill="#0c00e4"/>
<rect x="-6.3" y="-1.9" width="0.24" height="0.24" fill="#0c00ea"/>
<rect x="-6.1" y="-1.9" width="0.44" height="0.24" fill="#1200ea"/>
<rect x="-5.71" y="-1.9" width="0.44" height="0.24" fill="#1200f0"/>
<rect x="-5.31" y="-1.9" width="0.64" height="0.24" fill="#1800f0"/>
<rect x="-4.71" y="-1.9" width="0.44" height="0.24" fill="#1200f0"/>
<rect x="-4.31" y="-1.9" width="0.44" height="0.24" fill="#1200ea"/>
<rect x="-3.91" y="-1.9" width="0.64" height="0.24" fill="#0c00e4"/>
<rect x="-3.31" y="-1.9" width="0.24" height="0.24" fill="#0c00de"/>
<rect x="-3.11" y="-1.9" width="0.44" height="0.24" fill="#0600de"/>
<rect x="-2.71" y="-1.9" width="1.84" height="0.24" fill="#0600d8"/>
<rect x="-0.92" y="-1.9" width="1.84" height="0.24" fill="#0000d8"/>
<rect x="0.88" y="-1.9" width="1.84" height="0.24" fill="#0600d8"/>
<rect x="2.67" y="-1.9" width="0.44" height="0.24" fill="#0600de"/>
<rect x="3.07" y="-1.9" width="0.24" height="0.24" fill="#0c00de"/>
<rect x="3.27" y="-1.9" width="0.64" height="0.24" fill="#0c00e4"/>
<rect x="3.87" y="-1.9" width="0.44" height="0.24" fill="#1200ea"/>
<rect x="4.27" y="-1.9" width="0.44" height="0.24" fill="#1200f0"/>
<rect x="4.67" y="-1.9" width="0.64" height="0.24" fill="#1800f0"/>
<rect x="5.27" y="-1.9" width="0.44" height="0.24" fill="#1200f0"/>
<rect x="5.67" y="-1.9" width="0.44" height="0.24" fill="#1200ea"/>
<rect x="6.06" y="-1.9" width="0.24" height="0.24" fill="#0c00ea"/>
<rect x="6.26" y="-1.9" width="0.24" height="0.24" fill="#0c00e4"/>
<rect x="6.46" y="-1.9" width="0.24" height="0.24" fill="#0000d2"/>
<rect x="6.66" y="-1.9" width="0.24" height="0.24" fill="#0000ba"/>
<rect x="6.86" y="-1.9" width="0.24" height="0.24" fill="#0000a2"/>
<rect x="7.06" y="-1.9" width="0.24" height="0.24" fill="#00008a"/>
<rect x="7.26" y="-1.9" width="0.24" height="0.24" fill="#00006c"/>
<rect x="7.46" y="-1.9" width="0.24" height="0.24" fill="#000048"/>
<rect x="7.66" y="-1.9" width="0.24" height="0.24" fill="#00002a"/>
<rect x="7.86" y="-1.9" width="0.24" height="0.24" fill="#000018"/>
<rect x="-8.1" y="-1.7" width="0.24" height="0.24" fill="#000018"/>
<rect x="-7.9" y="-1.7" width="0.24" height="0.24" fill="#00002a"/>
<rect x="-7.7" y="-1.7" width="0.24" height="0.24" fill="#00004e"/>
<rect x="-7.5" y="-1.7" width="0.24" height="0.24" fill="#000072"/>
<rect x="-7.3" y="-1.7" width="0.24" height="0.24" fill="#000090"/>
<rect x="-7.1" y="-1.7" width="0.24" height="0.24" fill="#0000ae"/>
<rect x="-6.9" y="-1.7" width="0.24" height="0.24" fill="#0000c6"/>
<rect x="-6.7" y="-1.7" width="0.24" height="0.24" fill="#0600d8"/>
<rect x="-6.5" y="-1.7" width="0.24" height="0.24" fill="#1200ea"/>
<rect x="-6.3" y="-1.7" width="0.24" height="0.24" fill="#1200f0"/>
<rect x="-6.1" y="-1.7" width="0.24" height="0.24" fill="#1800f0"/>
<rect x="-5.91" y="-1.7" width="0.44" height="0.24" fill="#1800f6"/>
<rect x="-5.51" y="-1.7" width="1.04" height="0.24" fill="#1e00fc"/>
<rect x="-4.51" y="-1.7" width="0.44" height="0.24" fill="#1800f6"/>
<rect x="-4.11" y="-1.7" width="0.24" height="0.24" fill="#1800f0"/>
<rect x="-3.91" y="-1.7" width="0.24" height="0.24" fill="#1200f0"/>
<rect x="-3.71" y="-1.7" width="0.44" height="0.24" fill="#1200ea"/>
<rect x="-3.31" y="-1.7" width="0.44" height="0.24" fill="#0c00e4"/>
<rect x="-2.91" y="-1.7" width="0.44" height="0.24" fill="#0c00de"/>
<rect x="-2.51" y="-1.7" width="0.84" height="0.24" fill="#0600de"/>
<rect x="-1.72" y="-1.7" width="3.43" height="0.24" fill="#0600d8"/>
<rect x="1.68" y="-1.7" width="0.84" height="0.24" fill="#0600de"/>
<rect x="2.47" y="-1.7" width="0.44" height="0.24" fill="#0c00de"/>
<rect x="2.87" y="-1.7" width="0.44" height="0.24" fill="#0c00e4"/>
<rect x="3.27" y="-1.7" width="0.44" height="0.24" fill="#1200ea"/>
<rect x="3.67" y="-1.7" width="0.24" height="0.24" fill="#1200f0"/>
<rect x="3.87" y="-1.7" width="0.24" height="0.24" fill="#1800f0"/>
<rect x="4.07" y="-1.7" width="0.44" height="0.24" fill="#1800f6"/>
<rect x="4.47" y="-1.7" width="1.04" height="0.24" fill="#1e00fc"/>
<rect x="5.47" y="-1.7" width="0.44" height="0.24" fill="#1800f6"/>
<rect x="5.87" y="-1.7" width="0.24" height="0.24" fill="#1800f0"/>
<rect x="6.06" y="-1.7" width="0.24" height="0.24" fill="#1200f0"/>
<rect x="6.26" y="-1.7" width="0.24" height="0.24" fill="#1200ea"/>
<rect x="6.46" y="-1.7" width="0.24" height="0.24" fill="#0600d8"/>
<rect x="6.66" y="-1.7" width="0.24" height="0.24" fill="#0000c6"/>
<rect x="6.86" y="-1.7" width="0.24" height="0.24" fill="#0000ae"/>
<rect x="7.06" y="-1.7" width="0.24" height="0.24" fill="#000090"/>
<rect x="7.26" y="-1.7" width="0.24" height="0.24" fill="#000072"/>
<rect x="7.46" y="-1.7" width="0.24" height="0.24" fill="#00004e"/>
<rect x="7.66" y="-1.7" width="0.24" height="0.24" fill="#00002a"/>
<rect x="7.86" y="-1.7" width="0.24" height="0.24" fill="#000018"/>
<rect x="-8.1" y="-1.51" width="0.24" height="0.24" fill="#000012"/>
<rect x="-7.9" y="-1.51" width="0.24" height="0.24" fill="#00002a"/>
<rect x="-7.7" y="-1.51" width="0.24" height="0.24" fill="#000054"/>
<rect x="-7.5" y="-1.51" width="0.24" height="0.24" fill="#000078"/>
<rect x="-7.3" y="-1.51" width="0.24" height="0.24" fill="#000096"/>
<rect x="-7.1" y="-1.51" width="0.24" height="0.24" fill="#0000b4"/>
<rect x="-6.9" y="-1.51" width="0.24" height="0.24" fill="#0000d2"/>
<rect x="-6.7" y="-1.51" width="0.24" height="0.24" fill="#0c00e4"/>
<rect x="-6.5" y="-1.51" width="0.44" height="0.24" fill="#1800f6"/>
<rect x="-6.1" y="-1.51" width="0.24" height="0.24" fill="#1e00fc"/>
<rect x="-5.91" y="-1.51" width="0.24" height="0.24" fill="#2400fc"/>
<rect x="-5.71" y="-1.51" width="0.44" height="0.24" fill="#2a00fc"/>
<rect x="-5.31" y="-1.51" width="0.64" height="0.24" fill="#3000fc"/>
<rect x="-4.71" y="-1.51" width="0.24" height="0.24" fill="#2a00fc"/>
<rect x="-4.51" y="-1.51" width="0.24" height="0.24" fill="#2400fc"/>
<rect x="-4.31" y="-1.51" width="0.44" height="0.24" fill="#1e00fc"/>
<rect x="-3.91" y="-1.51" width="0.24" height="0.24" fill="#1800f6"/>
<rect x="-3.71" y="-1.51" width="0.24" height="0.24" fill="#1800f0"/>
<rect x="-3.51" y="-1.51" width="0.24" height="0.24" fill="#1200f0"/>
<rect x="-3.31" y="-1.51" width="0.44" height="0.24" fill="#1200ea"/>
<rect x="-2.91" y="-1.51" width="0.84" height="0.24" fill="#0c00e4"/>
<rect x="-2.11" y="-1.51" width="0.84" height="0.24" fill="#0c00de"/>
<rect x="-1.32" y="-1.51" width="2.63" height="0.24" fill="#0600de"/>
<rect x="1.28" y="-1.51" width="0.84" height="0.24" fill="#0c00de"/>
<rect x="2.07" y="-1.51" width="0.84" height="0.24" fill="#0c00e4"/>
<rect x="2.87" y="-1.51" width="0.44" height="0.24" fill="#1200ea"/>
<rect x="3.27" y="-1.51" width="0.24" height="0.24" fill="#1200f0"/>
<rect x="3.47" y="-1.51" width="0.24" height="0.24" fill="#1800f0"/>
<rect x="3.67" y="-1.51" width="0.24" height="0.24" fill="#1800f6"/>
<rect x="3.87" y="-1.51" width="0.44" height="0.24" fill="#1e00fc"/>
<rect x="4.27" y="-1.51" width="0.24" height="0.24" fill="#2400fc"/>
<rect x="4.47" y="-1.51" width="0.24" height="0.24" fill="#2a00fc"/>
<rect x="4.67" y="-1.51" width="0.64" height="0.24" fill="#3000fc"/>
<rect x="5.27" y="-1.51" width="0.44" height="0.24" fill="#2a00fc"/>
<rect x="5.67" y="-1.51" width="0.24" height="0.24" fill="#2400fc"/>
<rect x="5.87" y="-1.51" width="0.24" height="0.24" fill="#1e00fc"/>
<rect x="6.06" y="-1.51" width="0.44" height="0.24" fill="#1800f6"/>
<rect x="6.46" y="-1.51" width="0.24" height="0.24" fill="#0c00e4"/>
<rect x="6.66" y="-1.51" width="0.24" height="0.24" fill="#0000d2"/>
<rect x="6.86" y="-1.51" width="0.24" height="0.24" fill="#0000b4"/>
<rect x="7.06" y="-1.51" width="0.24" height="0.24" fill="#000096"/>
<rect x="7.26" y="-1.51" width="0.24" height="0.24" fill="#000078"/>
<rect x="7.46" y="-1.51" width="0.24" height="0.24" fill="#000054"/>
<rect x="7.66" y="-1.51" width="0.24" height="0.24" fill="#00002a"/>
<rect x="7.86" y="-1.51" width="0.24" height="0.24" fill="#000012"/>
<rect x="-8.1" y="-1.31" width="0.24" height="0.24" fill="#000012"/>
<rect x="-7.9" y="-1.31" width="0.24" height="0.24" fill="#00002a"/>
<rect x="-7.7" y="-1.31" width="0.24" height="0.24" fill="#000054"/>
<rect x="-7.5" y="-1.31" width="0.24" height="0.24" fill="#00007e"/>
<rect x="-7.3" y="-1.31" width="0.24" height="0.24" fill="#00009c"/>
<rect x="-7.1" y="-1.31" width="0.24" height="0.24" fill="#0000ba"/>
<rect x="-6.9" y="-1.31" width="0.24" height="0.24" fill="#0600d8"/>
<rect x="-6.7" y="-1.31" width="0.24" height="0.24" fill="#1200ea"/>
<rect x="-6.5" y="-1.31" width="0.24" height="0.24" fill="#1e00fc"/>
<rect x="-6.3" y="-1.31" width="0.24" height="0.24" fill="#2400fc"/>
<rect x="-6.1" y="-1.31" width="0.24" height="0.24" fill="#2a00fc"/>
<rect x="-5.91" y="-1.31" width="0.24" height="0.24" fill="#3600fc"/>
<rect x="-5.71" y="-1.31" width="0.24" height="0.24" fill="#3c00f6"/>
<rect x="-5.51" y="-1.31" width="0.24" height="0.24" fill="#4206f6"/>
<rect x="-5.31" y="-1.31" width="0.44" height="0.24" fill="#4806f6"/>
<rect x="-4.91" y="-1.31" width="0.24" height="0.24" fill="#4200f6"/>
<rect x="-4.71" y="-1.31" width="0.24" height="0.24" fill="#3c00f6"/>
<rect x="-4.51" y="-1.31" width="0.24" height="0.24" fill="#3600fc"/>
<rect x="-4.31" y="-1.31" width="0.24" height="0.24" fill="#3000fc"/>
<rect x="-4.11" y="-1.31" width="0.24" height="0.24" fill="#2a00fc"/>
<rect x="-3.91" y="-1.31" width="0.24" height="0.24" fill="#2400fc"/>
<rect x="-3.71" y="-1.31" width="0.24" height="0.24" fill="#1e00fc"/>
<rect x="-3.51" y="-1.31" width="0.24" height="0.24" fill="#1800f6"/>
<rect x="-3.31" y="-1.31" width="0.24" height="0.24" fill="#1800f0"/>
<rect x="-3.11" y="-1.31" width="0.24" height="0.24" fill="#1200f0"/>
<rect x="-2.91" y="-1.31" width="0.64" height="0.24" fill="#1200ea"/>
<rect x="-2.31" y="-1.31" width="4.63" height="0.24" fill="#0c00e4"/>
<rect x="2.27" y="-1.31" width="0.64" height="0.24" fill="#1200ea"/>
<rect x="2.87" y="-1.31" width="0.24" height="0.24" fill="#1200f0"/>
<rect x="3.07" y="-1.31" width="0.24" height="0.24" fill="#1800f0"/>
<rect x="3.27" y="-1.31" width="0.24" height="0.24" fill="#1800f6"/>
<rect x="3.47" y="-1.31" width="0.24" height="0.24" fill="#1e00fc"/>
<rect x="3.67" y="-1.31" width="0.24" height="0.24" fill="#2400fc"/>
<rect x="3.87" y="-1.31" width="0.24" height="0.24" fill="#2a00fc"/>
<rect x="4.07" y="-1.31" width="0.24" height="0.24" fill="#3000fc"/>
<rect x="4.27" y="-1.31" width="0.24" height="0.24" fill="#3600fc"/>
<rect x="4.47" y="-1.31" width="0.24" height="0.24" fill="#3c00f6"/>
<rect x="4.67" y="-1.31" width="0.24" height="0.24" fill="#4200f6"/>
<rect x="4.87" y="-1.31" width="0.44" height="0.24" fill="#4806f6"/>
<rect x="5.27" y="-1.31" width="0.24" height="0.24" fill="#4206f6"/>
<rect x="5.47" y="-1.31" width="0.24" height="0.24" fill="#3c00f6"/>
<rect x="5.67" y="-1.31" width="0.24" height="0.24" fill="#3600fc"/>
<rect x="5.87" y="-1.31" width="0.24" height="0.24" fill="#2a00fc"/>
<rect x="6.06" y="-1.31" width="0.24" height="0.24" fill="#2400fc"/>
<rect x="6.26" y="-1.31" width="0.24" height="0.24" fill="#1e00fc"/>
<rect x="6.46" y="-1.31" width="0.24" height="0.24" fill="#1200ea"/>
<rect x="6.66" y="-1.31" width="0.24" height="0.24" fill="#0600d8"/>
<rect x="6.86" y="-1.31" width="0.24" height="0.24" fill="#0000ba"/>
<rect x="7.06" y="-1.31" width="0.24" height="0.24" fill="#00009c"/>
<rect x="7.26" y="-1.31" width="0.24" height="0.24" fill="#00007e"/>
<rect x="7.46" y="-1.31" width="0.24" height="0.24" fill="#000054"/>
<rect x="7.66" y="-1.31" width="0.24" height="0.24" fill="#00002a"/>
<rect x="7.86" y="-1.31" width="0.24" height="0.24" fill="#000012"/>
<rect x="-8.1" y="-1.11" width="0.24" height="0.24" fill="#000012"/>
<rect x="-7.9" y="-1.11" width="0.24" height="0.24" fill="#00002a"/>
<rect x="-7.7" y="-1.11" width="0.24" height="0.24" fill="#00005a"/>
<rect x="-7.5" y="-1.11" width="0.24" height="0.24" fill="#000084"/>
<rect x="-7.3" y="-1.11" width="0.24" height="0.24" fill="#0000a2"/>
<rect x="-7.1" y="-1.11" width="0.24" height="0.24" fill="#0000c6"/>
<rect x="-6.9" y="-1.11" width="0.24" height="0.24" fill="#0600de"/>
<rect x="-6.7" y="-1.11" width="0.24" height="0.24" fill="#1800f0"/>
<rect x="-6.5" y="-1.11" width="0.24" height="0.24" fill="#2a00fc"/>
<rect x="-6.3" y="-1.11" width="0.24" height="0.24" fill="#3600fc"/>
<rect x="-6.1" y="-1.11" width="0.24" height="0.24" fill="#3c00f6"/>
<rect x="-5.91" y="-1.11" width="0.24" height="0.24" fill="#4806f6"/>
<rect x="-5.71" y="-1.11" width="0.24" height="0.24" fill="#5a06f6"/>
<rect x="-5.51" y="-1.11" width="0.24" height="0.24" fill="#6606f0"/>
<rect x="-5.31" y="-1.11" width="0.44" height="0.24" fill="#6c06f0"/>
<rect x="-4.91" y="-1.11" width="0.24" height="0.24" fill="#6006f6"/>
<rect x="-4.71" y="-1.11" width="0.24" height="0.24" fill="#5406f6"/>
<rect x="-4.51" y="-1.11" width="0.24" height="0.24" fill="#4806f6"/>
<rect x="-4.31" y="-1.11" width="0.24" height="0.24" fill="#4200f6"/>
<rect x="-4.11" y="-1.11" width="0.24" height="0.24" fill="#3600f6"/>
<rect x="-3.91" y="-1.11" width="0.24" height="0.24" fill="#3000fc"/>
<rect x="-3.71" y="-1.11" width="0.24" height="0.24" fill="#2a00fc"/>
<rect x="-3.51" y="-1.11" width="0.44" height="0.24" fill="#1e00fc"/>
<rect x="-3.11" y="-1.11" width="0.24" height="0.24" fill="#1800f6"/>
<rect x="-2.91" y="-1.11" width="0.24" height="0.24" fill="#1800f0"/>
<rect x="-2.71" y="-1.11" width="0.44" height="0.24" fill="#1200f0"/>
<rect x="-2.31" y="-1.11" width="1.24" height="0.24" fill="#1200ea"/>
<rect x="-1.12" y="-1.11" width="0.24" height="0.24" fill="#0c00ea"/>
<rect x="-0.92" y="-1.11" width="1.84" height="0.24" fill="#0c00e4"/>
<rect x="0.88" y="-1.11" width="0.24" height="0.24" fill="#0c00ea"/>
<rect x="1.08" y="-1.11" width="1.24" height="0.24" fill="#1200ea"/>
<rect x="2.27" y="-1.11" width="0.44" height="0.24" fill="#1200f0"/>
<rect x="2.67" y="-1.11" width="0.24" height="0.24" fill="#1800f0"/>
<rect x="2.87" y="-1.11" width="0.24" height="0.24" fill="#1800f6"/>
<rect x="3.07" y="-1.11" width="0.44" height="0.24" fill="#1e00fc"/>
<rect x="3.47" y="-1.11" width="0.24" height="0.24" fill="#2a00fc"/>
<rect x="3.67" y="-1.11" width="0.24" height="0.24" fill="#3000fc"/>
<rect x="3.87" y="-1.11" width="0.24" height="0.24" fill="#3600f6"/>
<rect x="4.07" y="-1.11" width="0.24" height="0.24" fill="#4200f6"/>
<rect x="4.27" y="-1.11" width="0.24" height="0.24" fill="#4806f6"/>
<rect x="4.47" y="-1.11" width="0.24" height="0.24" fill="#5406f6"/>
<rect x="4.67" y="-1.11" width="0.24" height="0.24" fill="#6006f6"/>
<rect x="4.87" y="-1.11" width="0.44" height="0.24" fill="#6c06f0"/>
<rect x="5.27" y="-1.11" width="0.24" height="0.24" fill="#6606f0"/>
<rect x="5.47" y="-1.11" width="0.24" height="0.24" fill="#5a06f6"/>
<rect x="5.67" y="-1.11" width="0.24" height="0.24" fill="#4806f6"/>
<rect x="5.87" y="-1.11" width="0.24" height="0.24" fill="#3c00f6"/>
<rect x="6.06" y="-1.11" width="0.24" height="0.24" fill="#3600fc"/>
<rect x="6.26" y="-1.11" width="0.24" height="0.24" fill="#2a00fc"/>
<rect x="6.46" y="-1.11" width="0.24" height="0.24" fill="#1800f0"/>
<rect x="6.66" y="-1.11" width="0.24" height="0.24" fill="#0600de"/>
<rect x="6.86" y="-1.11" width="0.24" height="0.24" fill="#0000c6"/>
<rect x="7.06" y="-1.11" width="0.24" height="0.24" fill="#0000a2"/>
<rect x="7.26" y="-1.11" width="0.24" height="0.24" fill="#000084"/>
<rect x="7.46" y="-1.11" width="0.24" height="0.24" fill="#00005a"/>
<rect x="7.66" y="-1.11" width="0.24" height="0.24" fill="#00002a"/>
<rect x="7.86" y="-1.11" width="0.24" height="0.24" fill="#000012"/>
<rect x="-8.1" y="-0.91" width="0.24" height="0.24" fill="#000012"/>
<rect x="-7.9" y="-0.91" width="0.24" height="0.24" fill="#00002a"/>
<rect x="-7.7" y="-0.91" width="0.24" height="0.24" fill="#00005a"/>
<rect x="-7.5" y="-0.91" width="0.24" height="0.24" fill="#000084"/>
<rect x="-7.3" y="-0.91" width="0.24" height="0.24" fill="#0000a8"/>
<rect x="-7.1" y="-0.91" width="0.24" height="0.24" fill="#0000cc"/>
<rect x="-6.9" y="-0.91" width="0.24" height="0.24" fill="#0c00e4"/>
<rect x="-6.7" y="-0.91" width="0.24" height="0.24" fill="#1e00fc"/>
<rect x="-6.5" y="-0.91" width="0.24" height="0.24" fill="#3600fc"/>
<rect x="-6.3" y="-0.91" width="0.24" height="0.24" fill="#4200f6"/>
<rect x="-6.1" y="-0.91" width="0.24" height="0.24" fill="#5406f6"/>
<rect x="-5.91" y="-0.91" width="0.24" height="0.24" fill="#6606f0"/>
<rect x="-5.71" y="-0.91" width="0.24" height="0.24" fill="#7e0cf0"/>
<rect x="-5.51" y="-0.91" width="0.24" height="0.24" fill="#9612ea"/>
<rect x="-5.31" y="-0.91" width="0.24" height="0.24" fill="#9c12e4"/>
<rect x="-5.11" y="-0.91" width="0.24" height="0.24" fill="#9612e4"/>
<rect x="-4.91" y="-0.91" width="0.24" height="0.24" fill="#8a0cf0"/>
<rect x="-4.71" y="-0.91" width="0.24" height="0.24" fill="#720cf0"/>
<rect x="-4.51" y="-0.91" width="0.24" height="0.24" fill="#6006f6"/>
<rect x="-4.31" y="-0.91" width="0.24" height="0.24" fill="#5406f6"/>
<rect x="-4.11" y="-0.91" width="0.24" height="0.24" fill="#4806f6"/>
<rect x="-3.91" y="-0.91" width="0.24" height="0.24" fill="#3c00f6"/>
<rect x="-3.71" y="-0.91" width="0.24" height="0.24" fill="#3600fc"/>
<rect x="-3.51" y="-0.91" width="0.24" height="0.24" fill="#2a00fc"/>
<rect x="-3.31" y="-0.91" width="0.24" height="0.24" fill="#2400fc"/>
<rect x="-3.11" y="-0.91" width="0.24" height="0.24" fill="#1e00fc"/>
<rect x="-2.91" y="-0.91" width="0.44" height="0.24" fill="#1800f6"/>
<rect x="-2.51" y="-0.91" width="0.44" height="0.24" fill="#1800f0"/>
<rect x="-2.11" y="-0.91" width="0.44" height="0.24" fill="#1200f0"/>
<rect x="-1.72" y="-0.91" width="3.43" height="0.24" fill="#1200ea"/>
<rect x="1.68" y="-0.91" width="0.44" height="0.24" fill="#1200f0"/>
<rect x="2.07" y="-0.91" width="0.44" height="0.24" fill="#1800f0"/>
<rect x="2.47" y="-0.91" width="0.44" height="0.24" fill="#1800f6"/>
<rect x="2.87" y="-0.91" width="0.24" height="0.24" fill="#1e00fc"/>
<rect x="3.07" y="-0.91" width="0.24" height="0.24" fill="#2400fc"/>
<rect x="3.27" y="-0.91" width="0.24" height="0.24" fill="#2a00fc"/>
<rect x="3.47" y="-0.91" width="0.24" height="0.24" fill="#3600fc"/>
<rect x="3.67" y="-0.91" width="0.24" height="0.24" fill="#3c00f6"/>
<rect x="3.87" y="-0.91" width="0.24" height="0.24" fill="#4806f6"/>
<rect x="4.07" y="-0.91" width="0.24" height="0.24" fill="#5406f6"/>
<rect x="4.27" y="-0.91" width="0.24" height="0.24" fill="#6006f6"/>
<rect x="4.47" y="-0.91" width="0.24" height="0.24" fill="#720cf0"/>
<rect x="4.67" y="-0.91" width="0.24" height="0.24" fill="#8a0cf0"/>
<rect x="4.87" y="-0.91" width="0.24" height="0.24" fill="#9612e4"/>
<rect x="5.07" y="-0.91" width="0.24" height="0.24" fill="#9c12e4"/>
<rect x="5.27" y="-0.91" width="0.24" height="0.24" fill="#9612ea"/>
<rect x="5.47" y="-0.91" width="0.24" height="0.24" fill="#7e0cf0"/>
<rect x="5.67" y="-0.91" width="0.24" height="0.24" fill="#6606f0"/>
<rect x="5.87" y="-0.91" width="0.24" height="0.24" fill="#5406f6"/>
<rect x="6.06" y="-0.91" width="0.24" height="0.24" fill="#4200f6"/>
<rect x="6.26" y="-0.91" width="0.24" height="0.24" fill="#3600fc"/>
<rect x="6.46" y="-0.91" width="0.24" height="0.24" fill="#1e00fc"/>
<rect x="6.66" y="-0.91" width="0.24" height="0.24" fill="#0c00e4"/>
<rect x="6.86" y="-0.91" width="0.24" height="0.24" fill="#0000cc"/>
<rect x="7.06" y="-0.91" width="0.24" height="0.24" fill="#0000a8"/>
<rect x="7.26" y="-0.91" width="0.24" height="0.24" fill="#000084"/>
<rect x="7.46" y="-0.91" width="0.24" height="0.24" fill="#00005a"/>
<rect x="7.66" y="-0.91" width="0.24" height="0.24" fill="#00002a"/>
<rect x="7.86" y="-0.91" width="0.24" height="0.24" fill="#000012"/>
<rect x="-8.1" y="-0.71" width="0.24" height="0.24" fill="#00000c"/>
<rect x="-7.9" y="-0.71" width="0.24" height="0.24" fill="#00002a"/>
<rect x="-7.7" y="-0.71" width="0.24" height="0.24" fill="#000060"/>
<rect x="-7.5" y="-0.71" width="0.24" height="0.24" fill="#00008a"/>
<rect x="-7.3" y="-0.71" width="0.24" height="0.24" fill="#0000ae"/>
<rect x="-7.1" y="-0.71" width="0.24" height="0.24" fill="#0000d2"/>
<rect x="-6.9" y="-0.71" width="0.24" height="0.24" fill="#1200ea"/>
<rect x="-6.7" y="-0.71" width="0.24" height="0.24" fill="#2400fc"/>
<rect x="-6.5" y="-0.71" width="0.24" height="0.24" fill="#4206f6"/>
<rect x="-6.3" y="-0.71" width="0.24" height="0.24" fill="#5406f6"/>
<rect x="-6.1" y="-0.71" width="0.24" height="0.24" fill="#6606f0"/>
<rect x="-5.91" y="-0.71" width="0.24" height="0.24" fill="#8a0cf0"/>
<rect x="-5.71" y="-0.71" width="0.24" height="0.24" fill="#a218de"/>
<rect x="-5.51" y="-0.71" width="0.24" height="0.24" fill="#c01ecc"/>
<rect x="-5.31" y="-0.71" width="0.24" height="0.24" fill="#d230c0"/>
<rect x="-5.11" y="-0.71" width="0.24" height="0.24" fill="#c624c6"/>
<rect x="-4.91" y="-0.71" width="0.24" height="0.24" fill="#ae18d8"/>
<rect x="-4.71" y="-0.71" width="0.24" height="0.24" fill="#900cea"/>
<rect x="-4.51" y="-0.71" width="0.24" height="0.24" fill="#780cf0"/>
<rect x="-4.31" y="-0.71" width="0.24" height="0.24" fill="#6006f6"/>
<rect x="-4.11" y="-0.71" width="0.24" height="0.24" fill="#5406f6"/>
<rect x="-3.91" y="-0.71" width="0.24" height="0.24" fill="#4806f6"/>
<rect x="-3.71" y="-0.71" width="0.24" height="0.24" fill="#4200f6"/>
<rect x="-3.51" y="-0.71" width="0.24" height="0.24" fill="#3600fc"/>
<rect x="-3.31" y="-0.71" width="0.24" height="0.24" fill="#3000fc"/>
<rect x="-3.11" y="-0.71" width="0.24" height="0.24" fill="#2400fc"/>
<rect x="-2.91" y="-0.71" width="0.44" height="0.24" fill="#1e00fc"/>
<rect x="-2.51" y="-0.71" width="0.64" height="0.24" fill="#1800f6"/>
<rect x="-1.92" y="-0.71" width="1.64" height="0.24" fill="#1800f0"/>
<rect x="-0.32" y="-0.71" width="0.64" height="0.24" fill="#1200f0"/>
<rect x="0.28" y="-0.71" width="1.64" height="0.24" fill="#1800f0"/>
<rect x="1.88" y="-0.71" width="0.64" height="0.24" fill="#1800f6"/>
<rect x="2.47" y="-0.71" width="0.44" height="0.24" fill="#1e00fc"/>
<rect x="2.87" y="-0.71" width="0.24" height="0.24" fill="#2400fc"/>
<rect x="3.07" y="-0.71" width="0.24" height="0.24" fill="#3000fc"/>
<rect x="3.27" y="-0.71" width="0.24" height="0.24" fill="#3600fc"/>
<rect x="3.47" y="-0.71" width="0.24" height="0.24" fill="#4200f6"/>
<rect x="3.67" y="-0.71" width="0.24" height="0.24" fill="#4806f6"/>
<rect x="3.87" y="-0.71" width="0.24" height="0.24" fill="#5406f6"/>
<rect x="4.07" y="-0.71" width="0.24" height="0.24" fill="#6006f6"/>
<rect x="4.27" y="-0.71" width="0.24" height="0.24" fill="#780cf0"/>
<rect x="4.47" y="-0.71" width="0.24" height="0.24" fill="#900cea"/>
<rect x="4.67" y="-0.71" width="0.24" height="0.24" fill="#ae18d8"/>
<rect x="4.87" y="-0.71" width="0.24" height="0.24" fill="#c624c6"/>
<rect x="5.07" y="-0.71" width="0.24" height="0.24" fill="#d230c0"/>
<rect x="5.27" y="-0.71" width="0.24" height="0.24" fill="#c024cc"/>
<rect x="5.47" y="-0.71" width="0.24" height="0.24" fill="#a218de"/>
<rect x="5.67" y="-0.71" width="0.24" height="0.24" fill="#8a0cf0"/>
<rect x="5.87" y="-0.71" width="0.24" height="0.24" fill="#6606f0"/>
<rect x="6.06" y="-0.71" width="0.24" height="0.24" fill="#5406f6"/>
<rect x="6.26" y="-0.71" width="0.24" height="0.24" fill="#4206f6"/>
<rect x="6.46" y="-0.71" width="0.24" height="0.24" fill="#2400fc"/>
<rect x="6.66" y="-0.71" width="0.24" height="0.24" fill="#1200ea"/>
<rect x="6.86" y="-0.71" width="0.24" height="0.24" fill="#0000d2"/>
<rect x="7.06" y="-0.71" width="0.24" height="0.24" fill="#0000ae"/>
<rect x="7.26" y="-0.71" width="0.24" height="0.24" fill="#00008a"/>
<rect x="7.46" y="-0.71" width="0.24" height="0.24" fill="#000060"/>
<rect x="7.66" y="-0.71" width="0.24" height="0.24" fill="#00002a"/>
<rect x="7.86" y="-0.71" width="0.24" height="0.24" fill="#00000c"/>
<rect x="-8.1" y="-0.51" width="0.24" height="0.24" fill="#00000c"/>
<rect x="-7.9" y="-0.51" width="0.24" height="0.24" fill="#00002a"/>
<rect x="-7.7" y="-0.51" width="0.24" height="0.24" fill="#000060"/>
<rect x="-7.5" y="-0.51" width="0.24" height="0.24" fill="#000090"/>
<rect x="-7.3" y="-0.51" width="0.24" height="0.24" fill="#0000b4"/>
<rect x="-7.1" y="-0.51" width="0.24" height="0.24" fill="#0600d8"/>
<rect x="-6.9" y="-0.51" width="0.24" height="0.24" fill="#1200f0"/>
<rect x="-6.7" y="-0.51" width="0.24" height="0.24" fill="#3000fc"/>
<rect x="-6.5" y="-0.51" width="0.24" height="0.24" fill="#4e06f6"/>
<rect x="-6.3" y="-0.51" width="0.24" height="0.24" fill="#6006f6"/>
<rect x="-6.1" y="-0.51" width="0.24" height="0.24" fill="#7e0cf0"/>
<rect x="-5.91" y="-0.51" width="0.24" height="0.24" fill="#a212e4"/>
<rect x="-5.71" y="-0.51" width="0.24" height="0.24" fill="#cc2ac6"/>
<rect x="-5.51" y="-0.51" width="0.24" height="0.24" fill="#fc609c"/>
<rect x="-5.31" y="-0.51" width="0.24" height="0.24" fill="#fc787e"/>
<rect x="-5.11" y="-0.51" width="0.24" height="0.24" fill="#fc6096"/>
<rect x="-4.91" y="-0.51" width="0.24" height="0.24" fill="#d236ba"/>
<rect x="-4.71" y="-0.51" width="0.24" height="0.24" fill="#a818de"/>
<rect x="-4.51" y="-0.51" width="0.24" height="0.24" fill="#900cf0"/>
<rect x="-4.31" y="-0.51" width="0.24" height="0.24" fill="#720cf0"/>
<rect x="-4.11" y="-0.51" width="0.24" height="0.24" fill="#6006f6"/>
<rect x="-3.91" y="-0.51" width="0.24" height="0.24" fill="#5406f6"/>
<rect x="-3.71" y="-0.51" width="0.24" height="0.24" fill="#4e06f6"/>
<rect x="-3.51" y="-0.51" width="0.24" height="0.24" fill="#4200f6"/>
<rect x="-3.31" y="-0.51" width="0.24" height="0.24" fill="#3600f6"/>
<rect x="-3.11" y="-0.51" width="0.24" height="0.24" fill="#3000fc"/>
<rect x="-2.91" y="-0.51" width="0.24" height="0.24" fill="#2a00fc"/>
<rect x="-2.71" y="-0.51" width="0.24" height="0.24" fill="#2400fc"/>
<rect x="-2.51" y="-0.51" width="0.64" height="0.24" fill="#1e00fc"/>
<rect x="-1.92" y="-0.51" width="3.83" height="0.24" fill="#1800f6"/>
<rect x="1.88" y="-0.51" width="0.64" height="0.24" fill="#1e00fc"/>
<rect x="2.47" y="-0.51" width="0.24" height="0.24" fill="#2400fc"/>
<rect x="2.67" y="-0.51" width="0.24" height="0.24" fill="#2a00fc"/>
<rect x="2.87" y="-0.51" width="0.24" height="0.24" fill="#3000fc"/>
<rect x="3.07" y="-0.51" width="0.24" height="0.24" fill="#3600f6"/>
<rect x="3.27" y="-0.51" width="0.24" height="0.24" fill="#4200f6"/>
<rect x="3.47" y="-0.51" width="0.24" height="0.24" fill="#4e06f6"/>
<rect x="3.67" y="-0.51" width="0.24" height="0.24" fill="#5406f6"/>
<rect x="3.87" y="-0.51" width="0.24" height="0.24" fill="#6006f6"/>
<rect x="4.07" y="-0.51" width="0.24" height="0.24" fill="#720cf0"/>
<rect x="4.27" y="-0.51" width="0.24" height="0.24" fill="#900cf0"/>
<rect x="4.47" y="-0.51" width="0.24" height="0.24" fill="#a818de"/>
<rect x="4.67" y="-0.51" width="0.24" height="0.24" fill="#d236ba"/>
<rect x="4.87" y="-0.51" width="0.24" height="0.24" fill="#fc6096"/>
<rect x="5.07" y="-0.51" width="0.24" height="0.24" fill="#fc787e"/>
<rect x="5.27" y="-0.51" width="0.24" height="0.24" fill="#fc609c"/>
<rect x="5.47" y="-0.51" width="0.24" height="0.24" fill="#cc2ac0"/>
<rect x="5.67" y="-0.51" width="0.24" height="0.24" fill="#a212e4"/>
<rect x="5.87" y="-0.51" width="0.24" height="0.24" fill="#7e0cf0"/>
<rect x="6.06" y="-0.51" width="0.24" height="0.24" fill="#6006f6"/>
<rect x="6.26" y="-0.51" width="0.24" height="0.24" fill="#4e06f6"/>
<rect x="6.46" y="-0.51" width="0.24" height="0.24" fill="#3000fc"/>
<rect x="6.66" y="-0.51" width="0.24" height="0.24" fill="#1200f0"/>
<rect x="6.86" y="-0.51" width="0.24" height="0.24" fill="#0600d8"/>
<rect x="7.06" y="-0.51" width="0.24" height="0.24" fill="#0000b4"/>
<rect x="7.26" y="-0.51" width="0.24" height="0.24" fill="#000090"/>
<rect x="7.46" y="-0.51" width="0.24" height="0.24" fill="#000060"/>
<rect x="7.66" y="-0.51" width="0.24" height="0.24" fill="#00002a"/>
<rect x="7.86" y="-0.51" width="0.24" height="0.24" fill="#00000c"/>
<rect x="-8.1" y="-0.31" width="0.24" height="0.24" fill="#000006"/>
<rect x="-7.9" y="-0.31" width="0.24" height="0.24" fill="#00002a"/>
<rect x="-7.7" y="-0.31" width="0.24" height="0.24" fill="#000060"/>
<rect x="-7.5" y="-0.31" width="0.24" height="0.24" fill="#000090"/>
<rect x="-7.3" y="-0.31" width="0.24" height="0.24" fill="#0000ba"/>
<rect x="-7.1" y="-0.31" width="0.24" height="0.24" fill="#0600de"/>
<rect x="-6.9" y="-0.31" width="0.24" height="0.24" fill="#1800f6"/>
<rect x="-6.7" y="-0.31" width="0.24" height="0.24" fill="#3c00f6"/>
<rect x="-6.5" y="-0.31" width="0.24" height="0.24" fill="#5a06f6"/>
<rect x="-6.3" y="-0.31" width="0.24" height="0.24" fill="#6c0cf0"/>
<rect x="-6.1" y="-0.31" width="0.24" height="0.24" fill="#900cea"/>
<rect x="-5.91" y="-0.31" width="0.24" height="0.24" fill="#b418d2"/>
<rect x="-5.71" y="-0.31" width="0.24" height="0.24" fill="#f054a8"/>
<rect x="-5.51" y="-0.31" width="0.24" height="0.24" fill="#fc9c4e"/>
<rect x="-5.31" y="-0.31" width="0.24" height="0.24" fill="#fcf01e"/>
<rect x="-5.11" y="-0.31" width="0.24" height="0.24" fill="#fc9c48"/>
<rect x="-4.91" y="-0.31" width="0.24" height="0.24" fill="#fc5aa2"/>
<rect x="-4.71" y="-0.31" width="0.24" height="0.24" fill="#c01ecc"/>
<rect x="-4.51" y="-0.31" width="0.24" height="0.24" fill="#9c12e4"/>
<rect x="-4.31" y="-0.31" width="0.24" height="0.24" fill="#7e0cf0"/>
<rect x="-4.11" y="-0.31" width="0.24" height="0.24" fill="#6c06f0"/>
<rect x="-3.91" y="-0.31" width="0.24" height="0.24" fill="#6006f6"/>
<rect x="-3.71" y="-0.31" width="0.24" height="0.24" fill="#5406f6"/>
<rect x="-3.51" y="-0.31" width="0.24" height="0.24" fill="#4806f6"/>
<rect x="-3.31" y="-0.31" width="0.24" height="0.24" fill="#4200f6"/>
<rect x="-3.11" y="-0.31" width="0.24" height="0.24" fill="#3c00f6"/>
<rect x="-2.91" y="-0.31" width="0.24" height="0.24" fill="#3000fc"/>
<rect x="-2.71" y="-0.31" width="0.44" height="0.24" fill="#2a00fc"/>
<rect x="-2.31" y="-0.31" width="0.24" height="0.24" fill="#2400fc"/>
<rect x="-2.11" y="-0.31" width="4.23" height="0.24" fill="#1e00fc"/>
<rect x="2.07" y="-0.31" width="0.24" height="0.24" fill="#2400fc"/>
<rect x="2.27" y="-0.31" width="0.44" height="0.24" fill="#2a00fc"/>
<rect x="2.67" y="-0.31" width="0.24" height="0.24" fill="#3000fc"/>
<rect x="2.87" y="-0.31" width="0.24" height="0.24" fill="#3c00f6"/>
<rect x="3.07" y="-0.31" width="0.24" height="0.24" fill="#4200f6"/>
<rect x="3.27" y="-0.31" width="0.24" height="0.24" fill="#4806f6"/>
<rect x="3.47" y="-0.31" width="0.24" height="0.24" fill="#5406f6"/>
<rect x="3.67" y="-0.31" width="0.24" height="0.24" fill="#6006f6"/>
<rect x="3.87" y="-0.31" width="0.24" height="0.24" fill="#6c06f0"/>
<rect x="4.07" y="-0.31" width="0.24" height="0.24" fill="#7e0cf0"/>
<rect x="4.27" y="-0.31" width="0.24" height="0.24" fill="#9c12e4"/>
<rect x="4.47" y="-0.31" width="0.24" height="0.24" fill="#c01ecc"/>
<rect x="4.67" y="-0.31" width="0.24" height="0.24" fill="#fc5aa2"/>
<rect x="4.87" y="-0.31" width="0.24" height="0.24" fill="#fc9c48"/>
<rect x="5.07" y="-0.31" width="0.24" height="0.24" fill="#fcf02a"/>
<rect x="5.27" y="-0.31" width="0.24" height="0.24" fill="#fc9c4e"/>
<rect x="5.47" y="-0.31" width="0.24" height="0.24" fill="#f054a8"/>
<rect x="5.67" y="-0.31" width="0.24" height="0.24" fill="#b418d2"/>
<rect x="5.87" y="-0.31" width="0.24" height="0.24" fill="#900cea"/>
<rect x="6.06" y="-0.31" width="0.24" height="0.24" fill="#6c0cf0"/>
<rect x="6.26" y="-0.31" width="0.24" height="0.24" fill="#5a06f6"/>
<rect x="6.46" y="-0.31" width="0.24" height="0.24" fill="#3c00f6"/>
<rect x="6.66" y="-0.31" width="0.24" height="0.24" fill="#1800f6"/>
<rect x="6.86" y="-0.31" width="0.24" height="0.24" fill="#0600de"/>
<rect x="7.06" y="-0.31" width="0.24" height="0.24" fill="#0000ba"/>
<rect x="7.26" y="-0.31" width="0.24" height="0.24" fill="#000090"/>
<rect x="7.46" y="-0.31" width="0.24" height="0.24" fill="#000060"/>
<rect x="7.66" y="-0.31" width="0.24" height="0.24" fill="#00002a"/>
<rect x="7.86" y="-0.31" width="0.24" height="0.24" fill="#000006"/>
<rect x="-8.1" y="-0.11" width="0.24" height="0.24" fill="#000006"/>
<rect x="-7.9" y="-0.11" width="0.24" height="0.24" fill="#00002a"/>
<rect x="-7.7" y="-0.11" width="0.24" height="0.24" fill="#000060"/>
<rect x="-7.5" y="-0.11" width="0.24" height="0.24" fill="#000090"/>
<rect x="-7.3" y="-0.11" width="0.24" height="0.24" fill="#0000c0"/>
<rect x="-7.1" y="-0.11" width="0.24" height="0.24" fill="#0600de"/>
<rect x="-6.9" y="-0.11" width="0.24" height="0.24" fill="#1800f6"/>
<rect x="-6.7" y="-0.11" width="0.24" height="0.24" fill="#4200f6"/>
<rect x="-6.5" y="-0.11" width="0.24" height="0.24" fill="#6606f6"/>
<rect x="-6.3" y="-0.11" width="0.24" height="0.24" fill="#780cf0"/>
<rect x="-6.1" y="-0.11" width="0.24" height="0.24" fill="#9612ea"/>
<rect x="-5.91" y="-0.11" width="0.24" height="0.24" fill="#ba1ed2"/>
<rect x="-5.71" y="-0.11" width="0.24" height="0.24" fill="#fc609c"/>
<rect x="-5.51" y="-0.11" width="0.24" height="0.24" fill="#fcba24"/>
<rect x="-5.31" y="-0.11" width="0.24" height="0.24" fill="#fcfcfc"/>
<rect x="-5.11" y="-0.11" width="0.24" height="0.24" fill="#fcea00"/>
<rect x="-4.91" y="-0.11" width="0.24" height="0.24" fill="#fc9060"/>
<rect x="-4.71" y="-0.11" width="0.24" height="0.24" fill="#fc6c90"/>
<rect x="-4.51" y="-0.11" width="0.24" height="0.24" fill="#f65aa2"/>
<rect x="-4.31" y="-0.11" width="0.64" height="0.24" fill="#f04ea8"/>
<rect x="-3.71" y="-0.11" width="0.24" height="0.24" fill="#f054a8"/>
<rect x="-3.51" y="-0.11" width="1.44" height="0.24" fill="#f654a2"/>
<rect x="-2.11" y="-0.11" width="2.63" height="0.24" fill="#f65aa2"/>
<rect x="0.48" y="-0.11" width="1.24" height="0.24" fill="#fc5aa2"/>
<rect x="1.68" y="-0.11" width="1.84" height="0.24" fill="#fc5a9c"/>
<rect x="3.47" y="-0.11" width="0.24" height="0.24" fill="#fc5aa2"/>
<rect x="3.67" y="-0.11" width="0.64" height="0.24" fill="#f65aa2"/>
<rect x="4.27" y="-0.11" width="0.24" height="0.24" fill="#fc609c"/>
<rect x="4.47" y="-0.11" width="0.24" height="0.24" fill="#fc7284"/>
<rect x="4.67" y="-0.11" width="0.24" height="0.24" fill="#fc9654"/>
<rect x="4.87" y="-0.11" width="0.24" height="0.24" fill="#fcf012"/>
<rect x="5.07" y="-0.11" width="0.24" height="0.24" fill="#fcfcfc"/>
<rect x="5.27" y="-0.11" width="0.24" height="0.24" fill="#fcc01e"/>
<rect x="5.47" y="-0.11" width="0.24" height="0.24" fill="#fc609c"/>
<rect x="5.67" y="-0.11" width="0.24" height="0.24" fill="#ba1ed2"/>
<rect x="5.87" y="-0.11" width="0.24" height="0.24" fill="#9612ea"/>
<rect x="6.06" y="-0.11" width="0.24" height="0.24" fill="#780cf0"/>
<rect x="6.26" y="-0.11" width="0.24" height="0.24" fill="#6606f6"/>
<rect x="6.46" y="-0.11" width="0.24" height="0.24" fill="#4200f6"/>
<rect x="6.66" y="-0.11" width="0.24" height="0.24" fill="#1800f6"/>
<rect x="6.86" y="-0.11" width="0.24" height="0.24" fill="#0600de"/>
<rect x="7.06" y="-0.11" width="0.24" height="0.24" fill="#0000c0"/>
<rect x="7.26" y="-0.11" width="0.24" height="0.24" fill="#000090"/>
<rect x="7.46" y="-0.11" width="0.24" height="0.24" fill="#000060"/>
<rect x="7.66" y="-0.11" width="0.24" height="0.24" fill="#00002a"/>
<rect x="7.86" y="-0.11" width="0.24" height="0.24" fill="#000006"/>
<rect x="-8.1" y="0.09" width="0.24" height="0.24" fill="#000006"/>
<rect x="-7.9" y="0.09" width="0.24" height="0.24" fill="#000024"/>
<rect x="-7.7" y="0.09" width="0.24" height="0.24" fill="#00005a"/>
<rect x="-7.5" y="0.09" width="0.24" height="0.24" fill="#000090"/>
<rect x="-7.3" y="0.09" width="0.24" height="0.24" fill="#0000ba"/>
<rect x="-7.1" y="0.09" width="0.24" height="0.24" fill="#0600de"/>
<rect x="-6.9" y="0.09" width="0.24" height="0.24" fill="#1800f6"/>
<rect x="-6.7" y="0.09" width="0.24" height="0.24" fill="#3c00f6"/>
<rect x="-6.5" y="0.09" width="0.24" height="0.24" fill="#6006f6"/>
<rect x="-6.3" y="0.09" width="0.24" height="0.24" fill="#780cf0"/>
<rect x="-6.1" y="0.09" width="0.24" height="0.24" fill="#900cea"/>
<rect x="-5.91" y="0.09" width="0.24" height="0.24" fill="#b418d2"/>
<rect x="-5.71" y="0.09" width="0.24" height="0.24" fill="#f04ea8"/>
<rect x="-5.51" y="0.09" width="0.24" height="0.24" fill="#fc965a"/>
<rect x="-5.31" y="0.09" width="0.24" height="0.24" fill="#fcde06"/>
<rect x="-5.11" y="0.09" width="0.24" height="0.24" fill="#fcae30"/>
<rect x="-4.91" y="0.09" width="0.24" height="0.24" fill="#fc7e78"/>
<rect x="-4.71" y="0.09" width="0.24" height="0.24" fill="#fc609c"/>
<rect x="-4.51" y="0.09" width="0.24" height="0.24" fill="#ea48ae"/>
<rect x="-4.31" y="0.09" width="0.44" height="0.24" fill="#e442b4"/>
<rect x="-3.91" y="0.09" width="0.24" height="0.24" fill="#e442ae"/>
<rect x="-3.71" y="0.09" width="0.24" height="0.24" fill="#e448ae"/>
<rect x="-3.51" y="0.09" width="1.64" height="0.24" fill="#ea48ae"/>
<rect x="-1.92" y="0.09" width="0.64" height="0.24" fill="#ea4eae"/>
<rect x="-1.32" y="0.09" width="1.04" height="0.24" fill="#ea4ea8"/>
<rect x="-0.32" y="0.09" width="0.24" height="0.24" fill="#ea4eae"/>
<rect x="-0.12" y="0.09" width="0.24" height="0.24" fill="#ea48ae"/>
<rect x="0.08" y="0.09" width="0.64" height="0.24" fill="#ea4ea8"/>
<rect x="0.68" y="0.09" width="3.03" height="0.24" fill="#f04ea8"/>
<rect x="3.67" y="0.09" width="0.64" height="0.24" fill="#ea4ea8"/>
<rect x="4.27" y="0.09" width="0.24" height="0.24" fill="#f054a2"/>
<rect x="4.47" y="0.09" width="0.24" height="0.24" fill="#fc6690"/>
<rect x="4.67" y="0.09" width="0.24" height="0.24" fill="#fc8472"/>
<rect x="4.87" y="0.09" width="0.24" height="0.24" fill="#fcb42a"/>
<rect x="5.07" y="0.09" width="0.24" height="0.24" fill="#fce400"/>
<rect x="5.27" y="0.09" width="0.24" height="0.24" fill="#fc9654"/>
<rect x="5.47" y="0.09" width="0.24" height="0.24" fill="#f054a8"/>
<rect x="5.67" y="0.09" width="0.24" height="0.24" fill="#b418d2"/>
<rect x="5.87" y="0.09" width="0.24" height="0.24" fill="#900cea"/>
<rect x="6.06" y="0.09" width="0.24" height="0.24" fill="#780cf0"/>
<rect x="6.26" y="0.09" width="0.24" height="0.24" fill="#6006f6"/>
<rect x="6.46" y="0.09" width="0.24" height="0.24" fill="#3c00f6"/>
<rect x="6.66" y="0.09" width="0.24" height="0.24" fill="#1800f6"/>
<rect x="6.86" y="0.09" width="0.24" height="0.24" fill="#0600de"/>
<rect x="7.06" y="0.09" width="0.24" height="0.24" fill="#0000ba"/>
<rect x="7.26" y="0.09" width="0.24" height="0.24" fill="#000090"/>
<rect x="7.46" y="0.09" width="0.24" height="0.24" fill="#00005a"/>
<rect x="7.66" y="0.09" width="0.24" height="0.24" fill="#000024"/>
<rect x="7.86" y="0.09" width="0.24" height="0.24" fill="#000006"/>
<rect x="-8.1" y="0.29" width="0.24" height="0.24" fill="#000006"/>
<rect x="-7.9" y="0.29" width="0.24" height="0.24" fill="#000024"/>
<rect x="-7.7" y="0.29" width="0.24" height="0.24" fill="#000054"/>
<rect x="-7.5" y="0.29" width="0.24" height="0.24" fill="#00008a"/>
<rect x="-7.3" y="0.29" width="0.24" height="0.24" fill="#0000b4"/>
<rect x="-7.1" y="0.29" width="0.24" height="0.24" fill="#0600d8"/>
<rect x="-6.9" y="0.29" width="0.24" height="0.24" fill="#1800f0"/>
<rect x="-6.7" y="0.29" width="0.24" height="0.24" fill="#3600fc"/>
<rect x="-6.5" y="0.29" width="0.24" height="0.24" fill="#6006f6"/>
<rect x="-6.3" y="0.29" width="0.24" height="0.24" fill="#720cf0"/>
<rect x="-6.1" y="0.29" width="0.24" height="0.24" fill="#8a0cf0"/>
<rect x="-5.91" y="0.29" width="0.24" height="0.24" fill="#a818de"/>
<rect x="-5.71" y="0.29" width="0.24" height="0.24" fill="#d230c0"/>
<rect x="-5.51" y="0.29" width="0.24" height="0.24" fill="#fc609c"/>
<rect x="-5.31" y="0.29" width="0.24" height="0.24" fill="#fc787e"/>
<rect x="-5.11" y="0.29" width="0.24" height="0.24" fill="#fc7284"/>
<rect x="-4.91" y="0.29" width="0.24" height="0.24" fill="#fc609c"/>
<rect x="-4.71" y="0.29" width="0.24" height="0.24" fill="#ea48ae"/>
<rect x="-4.51" y="0.29" width="0.24" height="0.24" fill="#de3cb4"/>
<rect x="-4.31" y="0.29" width="0.24" height="0.24" fill="#d836ba"/>
<rect x="-4.11" y="0.29" width="0.24" height="0.24" fill="#d83cba"/>
<rect x="-3.91" y="0.29" width="0.44" height="0.24" fill="#de3cb4"/>
<rect x="-3.51" y="0.29" width="1.04" height="0.24" fill="#de42b4"/>
<rect x="-2.51" y="0.29" width="2.04" height="0.24" fill="#e442b4"/>
<rect x="-0.52" y="0.29" width="0.24" height="0.24" fill="#de3cb4"/>
<rect x="-0.32" y="0.29" width="0.24" height="0.24" fill="#c62ac6"/>
<rect x="-0.12" y="0.29" width="0.24" height="0.24" fill="#ba1ed2"/>
<rect x="0.08" y="0.29" width="0.24" height="0.24" fill="#c62ac6"/>
<rect x="0.28" y="0.29" width="0.24" height="0.24" fill="#de3cb4"/>
<rect x="0.48" y="0.29" width="0.24" height="0.24" fill="#e442ae"/>
<rect x="0.68" y="0.29" width="1.64" height="0.24" fill="#e448ae"/>
<rect x="2.27" y="0.29" width="1.04" height="0.24" fill="#ea48ae"/>
<rect x="3.27" y="0.29" width="0.44" height="0.24" fill="#e448ae"/>
<rect x="3.67" y="0.29" width="0.24" height="0.24" fill="#e442ae"/>
<rect x="3.87" y="0.29" width="0.44" height="0.24" fill="#e442b4"/>
<rect x="4.27" y="0.29" width="0.24" height="0.24" fill="#e448ae"/>
<rect x="4.47" y="0.29" width="0.24" height="0.24" fill="#f054a2"/>
<rect x="4.67" y="0.29" width="0.24" height="0.24" fill="#fc6690"/>
<rect x="4.87" y="0.29" width="0.24" height="0.24" fill="#fc787e"/>
<rect x="5.07" y="0.29" width="0.24" height="0.24" fill="#fc7e78"/>
<rect x="5.27" y="0.29" width="0.24" height="0.24" fill="#fc6696"/>
<rect x="5.47" y="0.29" width="0.24" height="0.24" fill="#d230c0"/>
<rect x="5.67" y="0.29" width="0.24" height="0.24" fill="#a818de"/>
<rect x="5.87" y="0.29" width="0.24" height="0.24" fill="#8a0cf0"/>
<rect x="6.06" y="0.29" width="0.24" height="0.24" fill="#720cf0"/>
<rect x="6.26" y="0.29" width="0.24" height="0.24" fill="#6006f6"/>
<rect x="6.46" y="0.29" width="0.24" height="0.24" fill="#3600fc"/>
<rect x="6.66" y="0.29" width="0.24" height="0.24" fill="#1800f0"/>
<rect x="6.86" y="0.29" width="0.24" height="0.24" fill="#0600d8"/>
<rect x="7.06" y="0.29" width="0.24" height="0.24" fill="#0000b4"/>
<rect x="7.26" y="0.29" width="0.24" height="0.24" fill="#00008a"/>
<rect x="7.46" y="0.29" width="0.24" height="0.24" fill="#000054"/>
<rect x="7.66" y="0.29" width="0.24" height="0.24" fill="#000024"/>
<rect x="7.86" y="0.29" width="0.24" height="0.24" fill="#000006"/>
<rect x="-8.1" y="0.49" width="0.24" height="0.24" fill="#000006"/>
<rect x="-7.9" y="0.49" width="0.24" height="0.24" fill="#00001e"/>
<rect x="-7.7" y="0.49" width="0.24" height="0.24" fill="#00004e"/>
<rect x="-7.5" y="0.49" width="0.24" height="0.24" fill="#000084"/>
<rect x="-7.3" y="0.49" width="0.24" height="0.24" fill="#0000ae"/>
<rect x="-7.1" y="0.49" width="0.24" height="0.24" fill="#0600d8"/>
<rect x="-6.9" y="0.49" width="0.24" height="0.24" fill="#1200f0"/>
<rect x="-6.7" y="0.49" width="0.24" height="0.24" fill="#3000fc"/>
<rect x="-6.5" y="0.49" width="0.24" height="0.24" fill="#5a06f6"/>
<rect x="-6.3" y="0.49" width="0.24" height="0.24" fill="#6c06f0"/>
<rect x="-6.1" y="0.49" width="0.24" height="0.24" fill="#7e0cf0"/>
<rect x="-5.91" y="0.49" width="0.24" height="0.24" fill="#9612ea"/>
<rect x="-5.71" y="0.49" width="0.24" height="0.24" fill="#ae18d8"/>
<rect x="-5.51" y="0.49" width="0.24" height="0.24" fill="#cc2ac6"/>
<rect x="-5.31" y="0.49" width="0.24" height="0.24" fill="#de3cb4"/>
<rect x="-5.11" y="0.49" width="0.24" height="0.24" fill="#de42b4"/>
<rect x="-4.91" y="0.49" width="0.24" height="0.24" fill="#de3cb4"/>
<rect x="-4.71" y="0.49" width="0.24" height="0.24" fill="#d236ba"/>
<rect x="-4.51" y="0.49" width="0.64" height="0.24" fill="#d230c0"/>
<rect x="-3.91" y="0.49" width="0.24" height="0.24" fill="#d236ba"/>
<rect x="-3.71" y="0.49" width="0.44" height="0.24" fill="#d836ba"/>
<rect x="-3.31" y="0.49" width="0.84" height="0.24" fill="#d83cba"/>
<rect x="-2.51" y="0.49" width="1.84" height="0.24" fill="#de3cb4"/>
<rect x="-0.72" y="0.49" width="0.24" height="0.24" fill="#d83cba"/>
<rect x="-0.52" y="0.49" width="0.24" height="0.24" fill="#b41ed2"/>
<rect x="-0.32" y="0.49" width="0.24" height="0.24" fill="#720cf0"/>
<rect x="-0.12" y="0.49" width="0.24" height="0.24" fill="#4806f6"/>
<rect x="0.08" y="0.49" width="0.24" height="0.24" fill="#720cf0"/>
<rect x="0.28" y="0.49" width="0.24" height="0.24" fill="#b41ed2"/>
<rect x="0.48" y="0.49" width="0.24" height="0.24" fill="#d83cba"/>
<rect x="0.68" y="0.49" width="0.24" height="0.24" fill="#de3cb4"/>
<rect x="0.88" y="0.49" width="1.64" height="0.24" fill="#de42b4"/>
<rect x="2.47" y="0.49" width="0.84" height="0.24" fill="#e442b4"/>
<rect x="3.27" y="0.49" width="0.44" height="0.24" fill="#de42b4"/>
<rect x="3.67" y="0.49" width="0.44" height="0.24" fill="#de3cb4"/>
<rect x="4.07" y="0.49" width="0.44" height="0.24" fill="#d83cba"/>
<rect x="4.47" y="0.49" width="0.24" height="0.24" fill="#de3cb4"/>
<rect x="4.67" y="0.49" width="0.24" height="0.24" fill="#e448ae"/>
<rect x="4.87" y="0.49" width="0.24" height="0.24" fill="#ea48ae"/>
<rect x="5.07" y="0.49" width="0.24" height="0.24" fill="#e442b4"/>
<rect x="5.27" y="0.49" width="0.24" height="0.24" fill="#cc30c0"/>
<rect x="5.47" y="0.49" width="0.24" height="0.24" fill="#ae18d8"/>
<rect x="5.67" y="0.49" width="0.24" height="0.24" fill="#9612ea"/>
<rect x="5.87" y="0.49" width="0.24" height="0.24" fill="#7e0cf0"/>
<rect x="6.06" y="0.49" width="0.24" height="0.24" fill="#6c06f0"/>
<rect x="6.26" y="0.49" width="0.24" height="0.24" fill="#5a06f6"/>
<rect x="6.46" y="0.49" width="0.24" height="0.24" fill="#3000fc"/>
<rect x="6.66" y="0.49" width="0.24" height="0.24" fill="#1200f0"/>
<rect x="6.86" y="0.49" width="0.24" height="0.24" fill="#0600d8"/>
<rect x="7.06" y="0.49" width="0.24" height="0.24" fill="#0000ae"/>
<rect x="7.26" y="0.49" width="0.24" height="0.24" fill="#000084"/>
<rect x="7.46" y="0.49" width="0.24" height="0.24" fill="#00004e"/>
<rect x="7.66" y="0.49" width="0.24" height="0.24" fill="#00001e"/>
<rect x="7.86" y="0.49" width="0.24" height="0.24" fill="#000006"/>
<rect x="-8.1" y="0.69" width="0.24" height="0.24" fill="#000006"/>
<rect x="-7.9" y="0.69" width="0.24" height="0.24" fill="#000018"/>
<rect x="-7.7" y="0.69" width="0.24" height="0.24" fill="#000048"/>
<rect x="-7.5" y="0.69" width="0.24" height="0.24" fill="#00007e"/>
<rect x="-7.3" y="0.69" width="0.24" height="0.24" fill="#0000a8"/>
<rect x="-7.1" y="0.69" width="0.24" height="0.24" fill="#0000d2"/>
<rect x="-6.9" y="0.69" width="0.24" height="0.24" fill="#1200ea"/>
<rect x="-6.7" y="0.69" width="0.24" height="0.24" fill="#2a00fc"/>
<rect x="-6.5" y="0.69" width="0.24" height="0.24" fill="#5406f6"/>
<rect x="-6.3" y="0.69" width="0.24" height="0.24" fill="#6606f6"/>
<rect x="-6.1" y="0.69" width="0.24" height="0.24" fill="#720cf0"/>
<rect x="-5.91" y="0.69" width="0.24" height="0.24" fill="#840cf0"/>
<rect x="-5.71" y="0.69" width="0.24" height="0.24" fill="#9612ea"/>
<rect x="-5.51" y="0.69" width="0.24" height="0.24" fill="#a818de"/>
<rect x="-5.31" y="0.69" width="0.24" height="0.24" fill="#ae18d8"/>
<rect x="-5.11" y="0.69" width="0.24" height="0.24" fill="#ba1ed2"/>
<rect x="-4.91" y="0.69" width="0.24" height="0.24" fill="#c01ecc"/>
<rect x="-4.71" y="0.69" width="0.24" height="0.24" fill="#c024cc"/>
<rect x="-4.51" y="0.69" width="0.24" height="0.24" fill="#c624c6"/>
<rect x="-4.31" y="0.69" width="0.24" height="0.24" fill="#cc2ac6"/>
<rect x="-4.11" y="0.69" width="0.24" height="0.24" fill="#cc30c0"/>
<rect x="-3.91" y="0.69" width="0.44" height="0.24" fill="#d230c0"/>
<rect x="-3.51" y="0.69" width="0.44" height="0.24" fill="#d236ba"/>
<rect x="-3.11" y="0.69" width="2.43" height="0.24" fill="#d836ba"/>
<rect x="-0.72" y="0.69" width="0.24" height="0.24" fill="#d230c0"/>
<rect x="-0.52" y="0.69" width="0.24" height="0.24" fill="#9c12e4"/>
<rect x="-0.32" y="0.69" width="0.24" height="0.24" fill="#3600fc"/>
<rect x="-0.12" y="0.69" width="0.24" height="0.24" fill="#1e00fc"/>
<rect x="0.08" y="0.69" width="0.24" height="0.24" fill="#3600fc"/>
<rect x="0.28" y="0.69" width="0.24" height="0.24" fill="#9c12e4"/>
<rect x="0.48" y="0.69" width="0.24" height="0.24" fill="#d230c0"/>
<rect x="0.68" y="0.69" width="0.84" height="0.24" fill="#d83cba"/>
<rect x="1.48" y="0.69" width="2.04" height="0.24" fill="#de3cb4"/>
<rect x="3.47" y="0.69" width="0.44" height="0.24" fill="#d83cba"/>
<rect x="3.87" y="0.69" width="0.24" height="0.24" fill="#d836ba"/>
<rect x="4.07" y="0.69" width="0.24" height="0.24" fill="#d236c0"/>
<rect x="4.27" y="0.69" width="0.24" height="0.24" fill="#d230c0"/>
<rect x="4.47" y="0.69" width="0.24" height="0.24" fill="#cc2ac0"/>
<rect x="4.67" y="0.69" width="0.24" height="0.24" fill="#c62ac6"/>
<rect x="4.87" y="0.69" width="0.24" height="0.24" fill="#c01ecc"/>
<rect x="5.07" y="0.69" width="0.24" height="0.24" fill="#b418d2"/>
<rect x="5.27" y="0.69" width="0.24" height="0.24" fill="#a818de"/>
<rect x="5.47" y="0.69" width="0.24" height="0.24" fill="#9612e4"/>
<rect x="5.67" y="0.69" width="0.24" height="0.24" fill="#840cf0"/>
<rect x="5.87" y="0.69" width="0.24" height="0.24" fill="#720cf0"/>
<rect x="6.06" y="0.69" width="0.24" height="0.24" fill="#6606f6"/>
<rect x="6.26" y="0.69" width="0.24" height="0.24" fill="#5406f6"/>
<rect x="6.46" y="0.69" width="0.24" height="0.24" fill="#2a00fc"/>
<rect x="6.66" y="0.69" width="0.24" height="0.24" fill="#1200ea"/>
<rect x="6.86" y="0.69" width="0.24" height="0.24" fill="#0000d2"/>
<rect x="7.06" y="0.69" width="0.24" height="0.24" fill="#0000a8"/>
<rect x="7.26" y="0.69" width="0.24" height="0.24" fill="#00007e"/>
<rect x="7.46" y="0.69" width="0.24" height="0.24" fill="#000048"/>
<rect x="7.66" y="0.69" width="0.24" height="0.24" fill="#000018"/>
<rect x="7.86" y="0.69" width="0.24" height="0.24" fill="#000006"/>
<rect x="-8.1" y="0.88" width="0.24" height="0.24" fill="#000006"/>
<rect x="-7.9" y="0.88" width="0.24" height="0.24" fill="#000018"/>
<rect x="-7.7" y="0.88" width="0.24" height="0.24" fill="#000042"/>
<rect x="-7.5" y="0.88" width="0.24" height="0.24" fill="#000078"/>
<rect x="-7.3" y="0.88" width="0.24" height="0.24" fill="#0000a8"/>
<rect x="-7.1" y="0.88" width="0.24" height="0.24" fill="#0000d2"/>
<rect x="-6.9" y="0.88" width="0.24" height="0.24" fill="#1200ea"/>
<rect x="-6.7" y="0.88" width="0.24" height="0.24" fill="#2400fc"/>
<rect x="-6.5" y="0.88" width="0.24" height="0.24" fill="#4e06f6"/>
<rect x="-6.3" y="0.88" width="0.24" height="0.24" fill="#6006f6"/>
<rect x="-6.1" y="0.88" width="0.24" height="0.24" fill="#6606f0"/>
<rect x="-5.91" y="0.88" width="0.24" height="0.24" fill="#720cf0"/>
<rect x="-5.71" y="0.88" width="0.24" height="0.24" fill="#7e0cf0"/>
<rect x="-5.51" y="0.88" width="0.24" height="0.24" fill="#900cf0"/>
<rect x="-5.31" y="0.88" width="0.24" height="0.24" fill="#9612ea"/>
<rect x="-5.11" y="0.88" width="0.24" height="0.24" fill="#a212de"/>
<rect x="-4.91" y="0.88" width="0.24" height="0.24" fill="#ae18d8"/>
<rect x="-4.71" y="0.88" width="0.24" height="0.24" fill="#ba1ed2"/>
<rect x="-4.51" y="0.88" width="0.24" height="0.24" fill="#c01ecc"/>
<rect x="-4.31" y="0.88" width="0.24" height="0.24" fill="#c624c6"/>
<rect x="-4.11" y="0.88" width="0.24" height="0.24" fill="#cc2ac6"/>
<rect x="-3.91" y="0.88" width="0.24" height="0.24" fill="#cc2ac0"/>
<rect x="-3.71" y="0.88" width="0.24" height="0.24" fill="#cc30c0"/>
<rect x="-3.51" y="0.88" width="0.84" height="0.24" fill="#d230c0"/>
<rect x="-2.71" y="0.88" width="0.44" height="0.24" fill="#d236c0"/>
<rect x="-2.31" y="0.88" width="1.24" height="0.24" fill="#d236ba"/>
<rect x="-1.12" y="0.88" width="0.24" height="0.24" fill="#d836ba"/>
<rect x="-0.92" y="0.88" width="0.44" height="0.24" fill="#d83cba"/>
<rect x="-0.52" y="0.88" width="0.24" height="0.24" fill="#ba1ed2"/>
<rect x="-0.32" y="0.88" width="0.24" height="0.24" fill="#720cf0"/>
<rect x="-0.12" y="0.88" width="0.24" height="0.24" fill="#4e06f6"/>
<rect x="0.08" y="0.88" width="0.24" height="0.24" fill="#720cf0"/>
<rect x="0.28" y="0.88" width="0.24" height="0.24" fill="#ba1ed2"/>
<rect x="0.48" y="0.88" width="0.44" height="0.24" fill="#de3cb4"/>
<rect x="0.88" y="0.88" width="0.24" height="0.24" fill="#d83cba"/>
<rect x="1.08" y="0.88" width="1.24" height="0.24" fill="#d836ba"/>
<rect x="2.27" y="0.88" width="1.04" height="0.24" fill="#d83cba"/>
<rect x="3.27" y="0.88" width="0.64" height="0.24" fill="#d836ba"/>
<rect x="3.87" y="0.88" width="0.24" height="0.24" fill="#d230c0"/>
<rect x="4.07" y="0.88" width="0.24" height="0.24" fill="#cc30c0"/>
<rect x="4.27" y="0.88" width="0.24" height="0.24" fill="#c62ac6"/>
<rect x="4.47" y="0.88" width="0.24" height="0.24" fill="#c01ecc"/>
<rect x="4.67" y="0.88" width="0.24" height="0.24" fill="#b41ed2"/>
<rect x="4.87" y="0.88" width="0.24" height="0.24" fill="#a818de"/>
<rect x="5.07" y="0.88" width="0.24" height="0.24" fill="#9c12e4"/>
<rect x="5.27" y="0.88" width="0.24" height="0.24" fill="#900cea"/>
<rect x="5.47" y="0.88" width="0.24" height="0.24" fill="#840cf0"/>
<rect x="5.67" y="0.88" width="0.24" height="0.24" fill="#720cf0"/>
<rect x="5.87" y="0.88" width="0.24" height="0.24" fill="#6606f0"/>
<rect x="6.06" y="0.88" width="0.24" height="0.24" fill="#6006f6"/>
<rect x="6.26" y="0.88" width="0.24" height="0.24" fill="#4e06f6"/>
<rect x="6.46" y="0.88" width="0.24" height="0.24" fill="#2400fc"/>
<rect x="6.66" y="0.88" width="0.24" height="0.24" fill="#1200ea"/>
<rect x="6.86" y="0.88" width="0.24" height="0.24" fill="#0000d2"/>
<rect x="7.06" y="0.88" width="0.24" height="0.24" fill="#0000a8"/>
<rect x="7.26" y="0.88" width="0.24" height="0.24" fill="#000078"/>
<rect x="7.46" y="0.88" width="0.24" height="0.24" fill="#000042"/>
<rect x="7.66" y="0.88" width="0.24" height="0.24" fill="#000018"/>
<rect x="7.86" y="0.88" width="0.24" height="0.24" fill="#000006"/>
<rect x="-8.1" y="1.08" width="0.24" height="0.24" fill="#000006"/>
<rect x="-7.9" y="1.08" width="0.24" height="0.24" fill="#000012"/>
<rect x="-7.7" y="1.08" width="0.24" height="0.24" fill="#00003c"/>
<rect x="-7.5" y="1.08" width="0.24" height="0.24" fill="#000072"/>
<rect x="-7.3" y="1.08" width="0.24" height="0.24" fill="#0000a2"/>
<rect x="-7.1" y="1.08" width="0.24" height="0.24" fill="#0000cc"/>
<rect x="-6.9" y="1.08" width="0.24" height="0.24" fill="#0c00e4"/>
<rect x="-6.7" y="1.08" width="0.24" height="0.24" fill="#1e00fc"/>
<rect x="-6.5" y="1.08" width="0.24" height="0.24" fill="#4806f6"/>
<rect x="-6.3" y="1.08" width="0.24" height="0.24" fill="#5a06f6"/>
<rect x="-6.1" y="1.08" width="0.24" height="0.24" fill="#6006f6"/>
<rect x="-5.91" y="1.08" width="0.24" height="0.24" fill="#6606f0"/>
<rect x="-5.71" y="1.08" width="0.24" height="0.24" fill="#720cf0"/>
<rect x="-5.51" y="1.08" width="0.24" height="0.24" fill="#780cf0"/>
<rect x="-5.31" y="1.08" width="0.24" height="0.24" fill="#840cf0"/>
<rect x="-5.11" y="1.08" width="0.24" height="0.24" fill="#9612ea"/>
<rect x="-4.91" y="1.08" width="0.24" height="0.24" fill="#a212de"/>
<rect x="-4.71" y="1.08" width="0.24" height="0.24" fill="#ae18d8"/>
<rect x="-4.51" y="1.08" width="0.24" height="0.24" fill="#ba1ed2"/>
<rect x="-4.31" y="1.08" width="0.24" height="0.24" fill="#c01ecc"/>
<rect x="-4.11" y="1.08" width="0.24" height="0.24" fill="#c624c6"/>
<rect x="-3.91" y="1.08" width="0.24" height="0.24" fill="#cc2ac6"/>
<rect x="-3.71" y="1.08" width="0.24" height="0.24" fill="#cc2ac0"/>
<rect x="-3.51" y="1.08" width="0.44" height="0.24" fill="#cc30c0"/>
<rect x="-3.11" y="1.08" width="1.64" height="0.24" fill="#d230c0"/>
<rect x="-1.52" y="1.08" width="0.24" height="0.24" fill="#d236ba"/>
<rect x="-1.32" y="1.08" width="0.24" height="0.24" fill="#d83cba"/>
<rect x="-1.12" y="1.08" width="0.24" height="0.24" fill="#e448ae"/>
<rect x="-0.92" y="1.08" width="0.24" height="0.24" fill="#f654a2"/>
<rect x="-0.72" y="1.08" width="0.24" height="0.24" fill="#fc6696"/>
<rect x="-0.52" y="1.08" width="0.24" height="0.24" fill="#fc6690"/>
<rect x="-0.32" y="1.08" width="0.24" height="0.24" fill="#f65aa2"/>
<rect x="-0.12" y="1.08" width="0.24" height="0.24" fill="#ea4ea8"/>
<rect x="0.08" y="1.08" width="0.24" height="0.24" fill="#fc5aa2"/>
<rect x="0.28" y="1.08" width="0.24" height="0.24" fill="#fc6690"/>
<rect x="0.48" y="1.08" width="0.24" height="0.24" fill="#fc6696"/>
<rect x="0.68" y="1.08" width="0.24" height="0.24" fill="#f65aa2"/>
<rect x="0.88" y="1.08" width="0.24" height="0.24" fill="#ea48ae"/>
<rect x="1.08" y="1.08" width="0.24" height="0.24" fill="#de3cb4"/>
<rect x="1.28" y="1.08" width="2.23" height="0.24" fill="#d836ba"/>
<rect x="3.47" y="1.08" width="0.24" height="0.24" fill="#d236ba"/>
<rect x="3.67" y="1.08" width="0.44" height="0.24" fill="#d230c0"/>
<rect x="4.07" y="1.08" width="0.24" height="0.24" fill="#cc2ac6"/>
<rect x="4.27" y="1.08" width="0.24" height="0.24" fill="#c624cc"/>
<rect x="4.47" y="1.08" width="0.24" height="0.24" fill="#ba1ed2"/>
<rect x="4.67" y="1.08" width="0.24" height="0.24" fill="#ae18d8"/>
<rect x="4.87" y="1.08" width="0.24" height="0.24" fill="#9c12e4"/>
<rect x="5.07" y="1.08" width="0.24" height="0.24" fill="#8a0cf0"/>
<rect x="5.27" y="1.08" width="0.24" height="0.24" fill="#7e0cf0"/>
<rect x="5.47" y="1.08" width="0.24" height="0.24" fill="#720cf0"/>
<rect x="5.67" y="1.08" width="0.24" height="0.24" fill="#6606f0"/>
<rect x="5.87" y="1.08" width="0.24" height="0.24" fill="#6006f6"/>
<rect x="6.06" y="1.08" width="0.24" height="0.24" fill="#5a06f6"/>
<rect x="6.26" y="1.08" width="0.24" height="0.24" fill="#4806f6"/>
<rect x="6.46" y="1.08" width="0.24" height="0.24" fill="#1e00fc"/>
<rect x="6.66" y="1.08" width="0.24" height="0.24" fill="#0c00e4"/>
<rect x="6.86" y="1.08" width="0.24" height="0.24" fill="#0000cc"/>
<rect x="7.06" y="1.08" width="0.24" height="0.24" fill="#0000a2"/>
<rect x="7.26" y="1.08" width="0.24" height="0.24" fill="#000072"/>
<rect x="7.46" y="1.08" width="0.24" height="0.24" fill="#00003c"/>
<rect x="7.66" y="1.08" width="0.24" height="0.24" fill="#000012"/>
<rect x="7.86" y="1.08" width="0.24" height="0.24" fill="#000006"/>
<rect x="-8.1" y="1.28" width="0.24" height="0.24" fill="#000006"/>
<rect x="-7.9" y="1.28" width="0.24" height="0.24" fill="#00000c"/>
<rect x="-7.7" y="1.28" width="0.24" height="0.24" fill="#000036"/>
<rect x="-7.5" y="1.28" width="0.24" height="0.24" fill="#00006c"/>
<rect x="-7.3" y="1.28" width="0.24" height="0.24" fill="#00009c"/>
<rect x="-7.1" y="1.28" width="0.24" height="0.24" fill="#0000c6"/>
<rect x="-6.9" y="1.28" width="0.24" height="0.24" fill="#0c00e4"/>
<rect x="-6.7" y="1.28" width="0.24" height="0.24" fill="#1e00fc"/>
<rect x="-6.5" y="1.28" width="0.24" height="0.24" fill="#3c00f6"/>
<rect x="-6.3" y="1.28" width="0.24" height="0.24" fill="#5406f6"/>
<rect x="-6.1" y="1.28" width="0.24" height="0.24" fill="#5a06f6"/>
<rect x="-5.91" y="1.28" width="0.24" height="0.24" fill="#6006f6"/>
<rect x="-5.71" y="1.28" width="0.24" height="0.24" fill="#6606f0"/>
<rect x="-5.51" y="1.28" width="0.24" height="0.24" fill="#6c06f0"/>
<rect x="-5.31" y="1.28" width="0.24" height="0.24" fill="#720cf0"/>
<rect x="-5.11" y="1.28" width="0.24" height="0.24" fill="#8a0cf0"/>
<rect x="-4.91" y="1.28" width="0.24" height="0.24" fill="#9c12e4"/>
<rect x="-4.71" y="1.28" width="0.24" height="0.24" fill="#ae18d8"/>
<rect x="-4.51" y="1.28" width="0.24" height="0.24" fill="#b41ed2"/>
<rect x="-4.31" y="1.28" width="0.24" height="0.24" fill="#c01ecc"/>
<rect x="-4.11" y="1.28" width="0.24" height="0.24" fill="#c624c6"/>
<rect x="-3.91" y="1.28" width="0.24" height="0.24" fill="#c62ac6"/>
<rect x="-3.71" y="1.28" width="0.44" height="0.24" fill="#cc2ac6"/>
<rect x="-3.31" y="1.28" width="0.24" height="0.24" fill="#cc2ac0"/>
<rect x="-3.11" y="1.28" width="1.24" height="0.24" fill="#cc30c0"/>
<rect x="-1.92" y="1.28" width="0.44" height="0.24" fill="#d230c0"/>
<rect x="-1.52" y="1.28" width="0.24" height="0.24" fill="#de3cb4"/>
<rect x="-1.32" y="1.28" width="0.24" height="0.24" fill="#f04ea8"/>
<rect x="-1.12" y="1.28" width="0.24" height="0.24" fill="#fc6690"/>
<rect x="-0.92" y="1.28" width="0.24" height="0.24" fill="#fc7e78"/>
<rect x="-0.72" y="1.28" width="0.24" height="0.24" fill="#fc9060"/>
<rect x="-0.52" y="1.28" width="0.24" height="0.24" fill="#fc9c4e"/>
<rect x="-0.32" y="1.28" width="0.64" height="0.24" fill="#fca242"/>
<rect x="0.28" y="1.28" width="0.24" height="0.24" fill="#fc9c4e"/>
<rect x="0.48" y="1.28" width="0.24" height="0.24" fill="#fc9060"/>
<rect x="0.68" y="1.28" width="0.24" height="0.24" fill="#fc7e78"/>
<rect x="0.88" y="1.28" width="0.24" height="0.24" fill="#fc6c90"/>
<rect x="1.08" y="1.28" width="0.24" height="0.24" fill="#f054a8"/>
<rect x="1.28" y="1.28" width="0.24" height="0.24" fill="#de42b4"/>
<rect x="1.48" y="1.28" width="0.24" height="0.24" fill="#d836ba"/>
<rect x="1.68" y="1.28" width="1.84" height="0.24" fill="#d236ba"/>
<rect x="3.47" y="1.28" width="0.44" height="0.24" fill="#d230c0"/>
<rect x="3.87" y="1.28" width="0.24" height="0.24" fill="#cc30c0"/>
<rect x="4.07" y="1.28" width="0.24" height="0.24" fill="#c62ac6"/>
<rect x="4.27" y="1.28" width="0.24" height="0.24" fill="#c01ecc"/>
<rect x="4.47" y="1.28" width="0.24" height="0.24" fill="#b418d2"/>
<rect x="4.67" y="1.28" width="0.24" height="0.24" fill="#a818de"/>
<rect x="4.87" y="1.28" width="0.24" height="0.24" fill="#9612ea"/>
<rect x="5.07" y="1.28" width="0.24" height="0.24" fill="#7e0cf0"/>
<rect x="5.27" y="1.28" width="0.24" height="0.24" fill="#720cf0"/>
<rect x="5.47" y="1.28" width="0.24" height="0.24" fill="#6606f0"/>
<rect x="5.67" y="1.28" width="0.24" height="0.24" fill="#6006f6"/>
<rect x="5.87" y="1.28" width="0.24" height="0.24" fill="#5a06f6"/>
<rect x="6.06" y="1.28" width="0.24" height="0.24" fill="#5406f6"/>
<rect x="6.26" y="1.28" width="0.24" height="0.24" fill="#3c00f6"/>
<rect x="6.46" y="1.28" width="0.24" height="0.24" fill="#1e00fc"/>
<rect x="6.66" y="1.28" width="0.24" height="0.24" fill="#0c00e4"/>
<rect x="6.86" y="1.28" width="0.24" height="0.24" fill="#0000c6"/>
<rect x="7.06" y="1.28" width="0.24" height="0.24" fill="#00009c"/>
<rect x="7.26" y="1.28" width="0.24" height="0.24" fill="#00006c"/>
<rect x="7.46" y="1.28" width="0.24" height="0.24" fill="#000036"/>
<rect x="7.66" y="1.28" width="0.24" height="0.24" fill="#00000c"/>
<rect x="7.86" y="1.28" width="0.24" height="0.24" fill="#000006"/>
<rect x="-8.1" y="1.48" width="0.24" height="0.24" fill="#000006"/>
<rect x="-7.9" y="1.48" width="0.24" height="0.24" fill="#00000c"/>
<rect x="-7.7" y="1.48" width="0.24" height="0.24" fill="#000030"/>
<rect x="-7.5" y="1.48" width="0.24" height="0.24" fill="#00006c"/>
<rect x="-7.3" y="1.48" width="0.24" height="0.24" fill="#00009c"/>
<rect x="-7.1" y="1.48" width="0.24" height="0.24" fill="#0000c6"/>
<rect x="-6.9" y="1.48" width="0.24" height="0.24" fill="#0c00de"/>
<rect x="-6.7" y="1.48" width="0.24" height="0.24" fill="#1800f6"/>
<rect x="-6.5" y="1.48" width="0.24" height="0.24" fill="#3c00f6"/>
<rect x="-6.3" y="1.48" width="0.24" height="0.24" fill="#4e06f6"/>
<rect x="-6.1" y="1.48" width="0.24" height="0.24" fill="#5406f6"/>
<rect x="-5.91" y="1.48" width="0.24" height="0.24" fill="#5a06f6"/>
<rect x="-5.71" y="1.48" width="0.24" height="0.24" fill="#6006f6"/>
<rect x="-5.51" y="1.48" width="0.24" height="0.24" fill="#6606f0"/>
<rect x="-5.31" y="1.48" width="0.24" height="0.24" fill="#6c06f0"/>
<rect x="-5.11" y="1.48" width="0.24" height="0.24" fill="#840cf0"/>
<rect x="-4.91" y="1.48" width="0.24" height="0.24" fill="#9c12e4"/>
<rect x="-4.71" y="1.48" width="0.24" height="0.24" fill="#a818d8"/>
<rect x="-4.51" y="1.48" width="0.24" height="0.24" fill="#b418d2"/>
<rect x="-4.31" y="1.48" width="0.24" height="0.24" fill="#ba1ecc"/>
<rect x="-4.11" y="1.48" width="0.24" height="0.24" fill="#c024cc"/>
<rect x="-3.91" y="1.48" width="0.24" height="0.24" fill="#c624c6"/>
<rect x="-3.71" y="1.48" width="0.24" height="0.24" fill="#c62ac6"/>
<rect x="-3.51" y="1.48" width="0.64" height="0.24" fill="#cc2ac6"/>
<rect x="-2.91" y="1.48" width="1.04" height="0.24" fill="#cc2ac0"/>
<rect x="-1.92" y="1.48" width="0.24" height="0.24" fill="#cc30c0"/>
<rect x="-1.72" y="1.48" width="0.24" height="0.24" fill="#d836ba"/>
<rect x="-1.52" y="1.48" width="0.24" height="0.24" fill="#ea4ea8"/>
<rect x="-1.32" y="1.48" width="0.24" height="0.24" fill="#fc6c90"/>
<rect x="-1.12" y="1.48" width="0.24" height="0.24" fill="#fc846c"/>
<rect x="-0.92" y="1.48" width="0.24" height="0.24" fill="#fc9c4e"/>
<rect x="-0.72" y="1.48" width="0.24" height="0.24" fill="#fca836"/>
<rect x="-0.52" y="1.48" width="0.24" height="0.24" fill="#fcae2a"/>
<rect x="-0.32" y="1.48" width="0.24" height="0.24" fill="#fcb42a"/>
<rect x="-0.12" y="1.48" width="0.24" height="0.24" fill="#fcb424"/>
<rect x="0.08" y="1.48" width="0.44" height="0.24" fill="#fcb42a"/>
<rect x="0.48" y="1.48" width="0.24" height="0.24" fill="#fca836"/>
<rect x="0.68" y="1.48" width="0.24" height="0.24" fill="#fc9c48"/>
<rect x="0.88" y="1.48" width="0.24" height="0.24" fill="#fc846c"/>
<rect x="1.08" y="1.48" width="0.24" height="0.24" fill="#fc6c8a"/>
<rect x="1.28" y="1.48" width="0.24" height="0.24" fill="#f04ea8"/>
<rect x="1.48" y="1.48" width="0.24" height="0.24" fill="#de3cb4"/>
<rect x="1.68" y="1.48" width="0.24" height="0.24" fill="#d236c0"/>
<rect x="1.88" y="1.48" width="1.84" height="0.24" fill="#d230c0"/>
<rect x="3.67" y="1.48" width="0.24" height="0.24" fill="#cc30c0"/>
<rect x="3.87" y="1.48" width="0.24" height="0.24" fill="#cc2ac6"/>
<rect x="4.07" y="1.48" width="0.24" height="0.24" fill="#c624c6"/>
<rect x="4.27" y="1.48" width="0.24" height="0.24" fill="#c01ecc"/>
<rect x="4.47" y="1.48" width="0.24" height="0.24" fill="#b418d2"/>
<rect x="4.67" y="1.48" width="0.24" height="0.24" fill="#a212de"/>
<rect x="4.87" y="1.48" width="0.24" height="0.24" fill="#900cea"/>
<rect x="5.07" y="1.48" width="0.24" height="0.24" fill="#780cf0"/>
<rect x="5.27" y="1.48" width="0.24" height="0.24" fill="#6c06f0"/>
<rect x="5.47" y="1.48" width="0.24" height="0.24" fill="#6006f6"/>
<rect x="5.67" y="1.48" width="0.24" height="0.24" fill="#5a06f6"/>
<rect x="5.87" y="1.48" width="0.24" height="0.24" fill="#5406f6"/>
<rect x="6.06" y="1.48" width="0.24" height="0.24" fill="#4e06f6"/>
<rect x="6.26" y="1.48" width="0.24" height="0.24" fill="#3c00f6"/>
<rect x="6.46" y="1.48" width="0.24" height="0.24" fill="#1800f6"/>
<rect x="6.66" y="1.48" width="0.24" height="0.24" fill="#0c00de"/>
<rect x="6.86" y="1.48" width="0.24" height="0.24" fill="#0000c6"/>
<rect x="7.06" y="1.48" width="0.24" height="0.24" fill="#00009c"/>
<rect x="7.26" y="1.48" width="0.24" height="0.24" fill="#00006c"/>
<rect x="7.46" y="1.48" width="0.24" height="0.24" fill="#000030"/>
<rect x="7.66" y="1.48" width="0.24" height="0.24" fill="#00000c"/>
<rect x="7.86" y="1.48" width="0.24" height="0.24" fill="#000006"/>
<rect x="-8.1" y="1.68" width="0.44" height="0.24" fill="#000006"/>
<rect x="-7.7" y="1.68" width="0.24" height="0.24" fill="#000030"/>
<rect x="-7.5" y="1.68" width="0.24" height="0.24" fill="#000066"/>
<rect x="-7.3" y="1.68" width="0.24" height="0.24" fill="#000096"/>
<rect x="-7.1" y="1.68" width="0.24" height="0.24" fill="#0000c0"/>
<rect x="-6.9" y="1.68" width="0.24" height="0.24" fill="#0600de"/>
<rect x="-6.7" y="1.68" width="0.24" height="0.24" fill="#1800f6"/>
<rect x="-6.5" y="1.68" width="0.24" height="0.24" fill="#3600fc"/>
<rect x="-6.3" y="1.68" width="0.24" height="0.24" fill="#4e06f6"/>
<rect x="-6.1" y="1.68" width="0.24" height="0.24" fill="#5406f6"/>
<rect x="-5.91" y="1.68" width="0.44" height="0.24" fill="#5a06f6"/>
<rect x="-5.51" y="1.68" width="0.24" height="0.24" fill="#6006f6"/>
<rect x="-5.31" y="1.68" width="0.24" height="0.24" fill="#6606f0"/>
<rect x="-5.11" y="1.68" width="0.24" height="0.24" fill="#7e0cf0"/>
<rect x="-4.91" y="1.68" width="0.24" height="0.24" fill="#9612e4"/>
<rect x="-4.71" y="1.68" width="0.24" height="0.24" fill="#a818de"/>
<rect x="-4.51" y="1.68" width="0.24" height="0.24" fill="#b418d2"/>
<rect x="-4.31" y="1.68" width="0.24" height="0.24" fill="#ba1ed2"/>
<rect x="-4.11" y="1.68" width="0.24" height="0.24" fill="#c01ecc"/>
<rect x="-3.91" y="1.68" width="0.44" height="0.24" fill="#c624c6"/>
<rect x="-3.51" y="1.68" width="0.44" height="0.24" fill="#c62ac6"/>
<rect x="-3.11" y="1.68" width="1.04" height="0.24" fill="#cc2ac6"/>
<rect x="-2.11" y="1.68" width="0.24" height="0.24" fill="#cc2ac0"/>
<rect x="-1.92" y="1.68" width="0.24" height="0.24" fill="#d230c0"/>
<rect x="-1.72" y="1.68" width="0.24" height="0.24" fill="#de3cb4"/>
<rect x="-1.52" y="1.68" width="0.24" height="0.24" fill="#fc5a9c"/>
<rect x="-1.32" y="1.68" width="0.24" height="0.24" fill="#fc787e"/>
<rect x="-1.12" y="1.68" width="0.24" height="0.24" fill="#fc9654"/>
<rect x="-0.92" y="1.68" width="0.24" height="0.24" fill="#fca836"/>
<rect x="-0.72" y="1.68" width="0.24" height="0.24" fill="#fcb42a"/>
<rect x="-0.52" y="1.68" width="1.04" height="0.24" fill="#fcba24"/>
<rect x="0.48" y="1.68" width="0.24" height="0.24" fill="#fcb42a"/>
<rect x="0.68" y="1.68" width="0.24" height="0.24" fill="#fca836"/>
<rect x="0.88" y="1.68" width="0.24" height="0.24" fill="#fc9654"/>
<rect x="1.08" y="1.68" width="0.24" height="0.24" fill="#fc7e78"/>
<rect x="1.28" y="1.68" width="0.24" height="0.24" fill="#fc609c"/>
<rect x="1.48" y="1.68" width="0.24" height="0.24" fill="#e442b4"/>
<rect x="1.68" y="1.68" width="0.24" height="0.24" fill="#d236ba"/>
<rect x="1.88" y="1.68" width="1.64" height="0.24" fill="#d230c0"/>
<rect x="3.47" y="1.68" width="0.24" height="0.24" fill="#cc30c0"/>
<rect x="3.67" y="1.68" width="0.24" height="0.24" fill="#cc2ac0"/>
<rect x="3.87" y="1.68" width="0.24" height="0.24" fill="#c62ac6"/>
<rect x="4.07" y="1.68" width="0.24" height="0.24" fill="#c624c6"/>
<rect x="4.27" y="1.68" width="0.24" height="0.24" fill="#ba1ecc"/>
<rect x="4.47" y="1.68" width="0.24" height="0.24" fill="#ae18d8"/>
<rect x="4.67" y="1.68" width="0.24" height="0.24" fill="#a212de"/>
<rect x="4.87" y="1.68" width="0.24" height="0.24" fill="#8a0cf0"/>
<rect x="5.07" y="1.68" width="0.24" height="0.24" fill="#720cf0"/>
<rect x="5.27" y="1.68" width="0.24" height="0.24" fill="#6606f0"/>
<rect x="5.47" y="1.68" width="0.24" height="0.24" fill="#6006f6"/>
<rect x="5.67" y="1.68" width="0.24" height="0.24" fill="#5a06f6"/>
<rect x="5.87" y="1.68" width="0.24" height="0.24" fill="#5406f6"/>
<rect x="6.06" y="1.68" width="0.24" height="0.24" fill="#4e06f6"/>
<rect x="6.26" y="1.68" width="0.24" height="0.24" fill="#3600fc"/>
<rect x="6.46" y="1.68" width="0.24" height="0.24" fill="#1800f6"/>
<rect x="6.66" y="1.68" width="0.24" height="0.24" fill="#0600de"/>
<rect x="6.86" y="1.68" width="0.24" height="0.24" fill="#0000c0"/>
<rect x="7.06" y="1.68" width="0.24" height="0.24" fill="#000096"/>
<rect x="7.26" y="1.68" width="0.24" height="0.24" fill="#000066"/>
<rect x="7.46" y="1.68" width="0.24" height="0.24" fill="#000030"/>
<rect x="7.66" y="1.68" width="0.44" height="0.24" fill="#000006"/>
<rect x="-8.1" y="1.88" width="0.44" height="0.24" fill="#000006"/>
<rect x="-7.7" y="1.88" width="0.24" height="0.24" fill="#000030"/>
<rect x="-7.5" y="1.88" width="0.24" height="0.24" fill="#000066"/>
<rect x="-7.3" y="1.88" width="0.24" height="0.24" fill="#000096"/>
<rect x="-7.1" y="1.88" width="0.24" height="0.24" fill="#0000c0"/>
<rect x="-6.9" y="1.88" width="0.24" height="0.24" fill="#0600de"/>
<rect x="-6.7" y="1.88" width="0.24" height="0.24" fill="#1800f6"/>
<rect x="-6.5" y="1.88" width="0.24" height="0.24" fill="#3600fc"/>
<rect x="-6.3" y="1.88" width="0.24" height="0.24" fill="#4e06f6"/>
<rect x="-6.1" y="1.88" width="0.44" height="0.24" fill="#5406f6"/>
<rect x="-5.71" y="1.88" width="0.24" height="0.24" fill="#5a06f6"/>
<rect x="-5.51" y="1.88" width="0.24" height="0.24" fill="#6006f6"/>
<rect x="-5.31" y="1.88" width="0.24" height="0.24" fill="#6606f0"/>
<rect x="-5.11" y="1.88" width="0.24" height="0.24" fill="#7e0cf0"/>
<rect x="-4.91" y="1.88" width="0.24" height="0.24" fill="#9612ea"/>
<rect x="-4.71" y="1.88" width="0.24" height="0.24" fill="#a818de"/>
<rect x="-4.51" y="1.88" width="0.24" height="0.24" fill="#ae18d8"/>
<rect x="-4.31" y="1.88" width="0.24" height="0.24" fill="#ba1ed2"/>
<rect x="-4.11" y="1.88" width="0.24" height="0.24" fill="#c01ecc"/>
<rect x="-3.91" y="1.88" width="0.24" height="0.24" fill="#c024cc"/>
<rect x="-3.71" y="1.88" width="0.44" height="0.24" fill="#c624c6"/>
<rect x="-3.31" y="1.88" width="0.84" height="0.24" fill="#c62ac6"/>
<rect x="-2.51" y="1.88" width="0.64" height="0.24" fill="#cc2ac6"/>
<rect x="-1.92" y="1.88" width="0.24" height="0.24" fill="#cc30c0"/>
<rect x="-1.72" y="1.88" width="0.24" height="0.24" fill="#de3cb4"/>
<rect x="-1.52" y="1.88" width="0.24" height="0.24" fill="#fc609c"/>
<rect x="-1.32" y="1.88" width="0.24" height="0.24" fill="#fc7e78"/>
<rect x="-1.12" y="1.88" width="0.24" height="0.24" fill="#fc9654"/>
<rect x="-0.92" y="1.88" width="0.24" height="0.24" fill="#fca836"/>
<rect x="-0.72" y="1.88" width="0.24" height="0.24" fill="#fcb42a"/>
<rect x="-0.52" y="1.88" width="0.24" height="0.24" fill="#fcb424"/>
<rect x="-0.32" y="1.88" width="0.84" height="0.24" fill="#fcba24"/>
<rect x="0.48" y="1.88" width="0.24" height="0.24" fill="#fcb42a"/>
<rect x="0.68" y="1.88" width="0.24" height="0.24" fill="#fca836"/>
<rect x="0.88" y="1.88" width="0.24" height="0.24" fill="#fc964e"/>
<rect x="1.08" y="1.88" width="0.24" height="0.24" fill="#fc7e78"/>
<rect x="1.28" y="1.88" width="0.24" height="0.24" fill="#fc609c"/>
<rect x="1.48" y="1.88" width="0.24" height="0.24" fill="#e442b4"/>
<rect x="1.68" y="1.88" width="0.24" height="0.24" fill="#d236c0"/>
<rect x="1.88" y="1.88" width="0.64" height="0.24" fill="#cc30c0"/>
<rect x="2.47" y="1.88" width="0.64" height="0.24" fill="#d230c0"/>
<rect x="3.07" y="1.88" width="0.64" height="0.24" fill="#cc30c0"/>
<rect x="3.67" y="1.88" width="0.24" height="0.24" fill="#cc2ac6"/>
<rect x="3.87" y="1.88" width="0.24" height="0.24" fill="#c62ac6"/>
<rect x="4.07" y="1.88" width="0.24" height="0.24" fill="#c024cc"/>
<rect x="4.27" y="1.88" width="0.24" height="0.24" fill="#ba1ed2"/>
<rect x="4.47" y="1.88" width="0.24" height="0.24" fill="#ae18d8"/>
<rect x="4.67" y="1.88" width="0.24" height="0.24" fill="#a212e4"/>
<rect x="4.87" y="1.88" width="0.24" height="0.24" fill="#8a0cf0"/>
<rect x="5.07" y="1.88" width="0.24" height="0.24" fill="#720cf0"/>
<rect x="5.27" y="1.88" width="0.24" height="0.24" fill="#6606f0"/>
<rect x="5.47" y="1.88" width="0.44" height="0.24" fill="#5a06f6"/>
<rect x="5.87" y="1.88" width="0.24" height="0.24" fill="#5406f6"/>
<rect x="6.06" y="1.88" width="0.24" height="0.24" fill="#4e06f6"/>
<rect x="6.26" y="1.88" width="0.24" height="0.24" fill="#3600fc"/>
<rect x="6.46" y="1.88" width="0.24" height="0.24" fill="#1800f6"/>
<rect x="6.66" y="1.88" width="0.24" height="0.24" fill="#0600de"/>
<rect x="6.86" y="1.88" width="0.24" height="0.24" fill="#0000c0"/>
<rect x="7.06" y="1.88" width="0.24" height="0.24" fill="#000096"/>
<rect x="7.26" y="1.88" width="0.24" height="0.24" fill="#000066"/>
<rect x="7.46" y="1.88" width="0.24" height="0.24" fill="#000030"/>
<rect x="7.66" y="1.88" width="0.44" height="0.24" fill="#000006"/>
<rect x="-8.1" y="2.08" width="0.44" height="0.24" fill="#000006"/>
<rect x="-7.7" y="2.08" width="0.24" height="0.24" fill="#000030"/>
<rect x="-7.5" y="2.08" width="0.24" height="0.24" fill="#000066"/>
<rect x="-7.3" y="2.08" width="0.24" height="0.24" fill="#000096"/>
<rect x="-7.1" y="2.08" width="0.24" height="0.24" fill="#0000c0"/>
<rect x="-6.9" y="2.08" width="0.24" height="0.24" fill="#0600de"/>
<rect x="-6.7" y="2.08" width="0.24" height="0.24" fill="#1800f6"/>
<rect x="-6.5" y="2.08" width="0.24" height="0.24" fill="#3600fc"/>
<rect x="-6.3" y="2.08" width="0.24" height="0.24" fill="#4e06f6"/>
<rect x="-6.1" y="2.08" width="0.24" height="0.24" fill="#5406f6"/>
<rect x="-5.91" y="2.08" width="0.44" height="0.24" fill="#5a06f6"/>
<rect x="-5.51" y="2.08" width="0.24" height="0.24" fill="#6006f6"/>
<rect x="-5.31" y="2.08" width="0.24" height="0.24" fill="#6606f0"/>
<rect x="-5.11" y="2.08" width="0.24" height="0.24" fill="#7e0cf0"/>
<rect x="-4.91" y="2.08" width="0.24" height="0.24" fill="#9612ea"/>
<rect x="-4.71" y="2.08" width="0.24" height="0.24" fill="#a818de"/>
<rect x="-4.51" y="2.08" width="0.24" height="0.24" fill="#ae18d8"/>
<rect x="-4.31" y="2.08" width="0.24" height="0.24" fill="#ba1ed2"/>
<rect x="-4.11" y="2.08" width="0.44" height="0.24" fill="#c01ecc"/>
<rect x="-3.71" y="2.08" width="0.24" height="0.24" fill="#c624cc"/>
<rect x="-3.51" y="2.08" width="0.64" height="0.24" fill="#c624c6"/>
<rect x="-2.91" y="2.08" width="1.04" height="0.24" fill="#c62ac6"/>
<rect x="-1.92" y="2.08" width="0.24" height="0.24" fill="#cc2ac0"/>
<rect x="-1.72" y="2.08" width="0.24" height="0.24" fill="#d836ba"/>
<rect x="-1.52" y="2.08" width="0.24" height="0.24" fill="#f054a8"/>
<rect x="-1.32" y="2.08" width="0.24" height="0.24" fill="#fc7284"/>
<rect x="-1.12" y="2.08" width="0.24" height="0.24" fill="#fc8a66"/>
<rect x="-0.92" y="2.08" width="0.24" height="0.24" fill="#fca242"/>
<rect x="-0.72" y="2.08" width="0.24" height="0.24" fill="#fcae30"/>
<rect x="-0.52" y="2.08" width="1.04" height="0.24" fill="#fcb42a"/>
<rect x="0.48" y="2.08" width="0.24" height="0.24" fill="#fcae30"/>
<rect x="0.68" y="2.08" width="0.24" height="0.24" fill="#fca242"/>
<rect x="0.88" y="2.08" width="0.24" height="0.24" fill="#fc9060"/>
<rect x="1.08" y="2.08" width="0.24" height="0.24" fill="#fc7284"/>
<rect x="1.28" y="2.08" width="0.24" height="0.24" fill="#f654a2"/>
<rect x="1.48" y="2.08" width="0.24" height="0.24" fill="#de3cb4"/>
<rect x="1.68" y="2.08" width="0.24" height="0.24" fill="#d230c0"/>
<rect x="1.88" y="2.08" width="1.64" height="0.24" fill="#cc30c0"/>
<rect x="3.47" y="2.08" width="0.24" height="0.24" fill="#cc2ac0"/>
<rect x="3.67" y="2.08" width="0.24" height="0.24" fill="#cc2ac6"/>
<rect x="3.87" y="2.08" width="0.24" height="0.24" fill="#c624c6"/>
<rect x="4.07" y="2.08" width="0.24" height="0.24" fill="#c024cc"/>
<rect x="4.27" y="2.08" width="0.24" height="0.24" fill="#ba1ed2"/>
<rect x="4.47" y="2.08" width="0.24" height="0.24" fill="#ae18d8"/>
<rect x="4.67" y="2.08" width="0.24" height="0.24" fill="#9c12e4"/>
<rect x="4.87" y="2.08" width="0.24" height="0.24" fill="#8a0cf0"/>
<rect x="5.07" y="2.08" width="0.24" height="0.24" fill="#720cf0"/>
<rect x="5.27" y="2.08" width="0.24" height="0.24" fill="#6606f0"/>
<rect x="5.47" y="2.08" width="0.24" height="0.24" fill="#6006f6"/>
<rect x="5.67" y="2.08" width="0.24" height="0.24" fill="#5a06f6"/>
<rect x="5.87" y="2.08" width="0.24" height="0.24" fill="#5406f6"/>
<rect x="6.06" y="2.08" width="0.24" height="0.24" fill="#4e06f6"/>
<rect x="6.26" y="2.08" width="0.24" height="0.24" fill="#3600fc"/>
<rect x="6.46" y="2.08" width="0.24" height="0.24" fill="#1800f6"/>
<rect x="6.66" y="2.08" width="0.24" height="0.24" fill="#0600de"/>
<rect x="6.86" y="2.08" width="0.24" height="0.24" fill="#0000c0"/>
<rect x="7.06" y="2.08" width="0.24" height="0.24" fill="#000096"/>
<rect x="7.26" y="2.08" width="0.24" height="0.24" fill="#000066"/>
<rect x="7.46" y="2.08" width="0.24" height="0.24" fill="#000030"/>
<rect x="7.66" y="2.08" width="0.44" height="0.24" fill="#000006"/>
<rect x="-8.1" y="2.28" width="0.24" height="0.24" fill="#000006"/>
<rect x="-7.9" y="2.28" width="0.24" height="0.24" fill="#00000c"/>
<rect x="-7.7" y="2.28" width="0.24" height="0.24" fill="#000030"/>
<rect x="-7.5" y="2.28" width="0.24" height="0.24" fill="#00006c"/>
<rect x="-7.3" y="2.28" width="0.24" height="0.24" fill="#00009c"/>
<rect x="-7.1" y="2.28" width="0.24" height="0.24" fill="#0000c6"/>
<rect x="-6.9" y="2.28" width="0.24" height="0.24" fill="#0c00de"/>
<rect x="-6.7" y="2.28" width="0.24" height="0.24" fill="#1800f6"/>
<rect x="-6.5" y="2.28" width="0.24" height="0.24" fill="#3c00f6"/>
<rect x="-6.3" y="2.28" width="0.24" height="0.24" fill="#4e06f6"/>
<rect x="-6.1" y="2.28" width="0.24" height="0.24" fill="#5406f6"/>
<rect x="-5.91" y="2.28" width="0.24" height="0.24" fill="#5a06f6"/>
<rect x="-5.71" y="2.28" width="0.24" height="0.24" fill="#6006f6"/>
<rect x="-5.51" y="2.28" width="0.24" height="0.24" fill="#6606f6"/>
<rect x="-5.31" y="2.28" width="0.24" height="0.24" fill="#6606f0"/>
<rect x="-5.11" y="2.28" width="0.24" height="0.24" fill="#7e0cf0"/>
<rect x="-4.91" y="2.28" width="0.24" height="0.24" fill="#9612ea"/>
<rect x="-4.71" y="2.28" width="0.24" height="0.24" fill="#a818de"/>
<rect x="-4.51" y="2.28" width="0.24" height="0.24" fill="#ae18d8"/>
<rect x="-4.31" y="2.28" width="0.24" height="0.24" fill="#ba1ed2"/>
<rect x="-4.11" y="2.28" width="0.24" height="0.24" fill="#ba1ecc"/>
<rect x="-3.91" y="2.28" width="0.24" height="0.24" fill="#c01ecc"/>
<rect x="-3.71" y="2.28" width="0.24" height="0.24" fill="#c024cc"/>
<rect x="-3.51" y="2.28" width="1.24" height="0.24" fill="#c624c6"/>
<rect x="-2.31" y="2.28" width="0.64" height="0.24" fill="#c62ac6"/>
<rect x="-1.72" y="2.28" width="0.24" height="0.24" fill="#cc30c0"/>
<rect x="-1.52" y="2.28" width="0.24" height="0.24" fill="#de3cb4"/>
<rect x="-1.32" y="2.28" width="0.24" height="0.24" fill="#f65aa2"/>
<rect x="-1.12" y="2.28" width="0.24" height="0.24" fill="#fc7284"/>
<rect x="-0.92" y="2.28" width="0.24" height="0.24" fill="#fc8a66"/>
<rect x="-0.72" y="2.28" width="0.24" height="0.24" fill="#fc9c4e"/>
<rect x="-0.52" y="2.28" width="0.24" height="0.24" fill="#fca23c"/>
<rect x="-0.32" y="2.28" width="0.64" height="0.24" fill="#fca836"/>
<rect x="0.28" y="2.28" width="0.24" height="0.24" fill="#fca23c"/>
<rect x="0.48" y="2.28" width="0.24" height="0.24" fill="#fc9c4e"/>
<rect x="0.68" y="2.28" width="0.24" height="0.24" fill="#fc8a66"/>
<rect x="0.88" y="2.28" width="0.24" height="0.24" fill="#fc7284"/>
<rect x="1.08" y="2.28" width="0.24" height="0.24" fill="#fc5a9c"/>
<rect x="1.28" y="2.28" width="0.24" height="0.24" fill="#de42b4"/>
<rect x="1.48" y="2.28" width="0.24" height="0.24" fill="#d230c0"/>
<rect x="1.68" y="2.28" width="0.24" height="0.24" fill="#cc30c0"/>
<rect x="1.88" y="2.28" width="0.64" height="0.24" fill="#cc2ac0"/>
<rect x="2.47" y="2.28" width="0.64" height="0.24" fill="#cc30c0"/>
<rect x="3.07" y="2.28" width="0.44" height="0.24" fill="#cc2ac0"/>
<rect x="3.47" y="2.28" width="0.24" height="0.24" fill="#cc2ac6"/>
<rect x="3.67" y="2.28" width="0.24" height="0.24" fill="#c62ac6"/>
<rect x="3.87" y="2.28" width="0.24" height="0.24" fill="#c624c6"/>
<rect x="4.07" y="2.28" width="0.24" height="0.24" fill="#c01ecc"/>
<rect x="4.27" y="2.28" width="0.24" height="0.24" fill="#ba1ed2"/>
<rect x="4.47" y="2.28" width="0.24" height="0.24" fill="#ae18d8"/>
<rect x="4.67" y="2.28" width="0.24" height="0.24" fill="#a212e4"/>
<rect x="4.87" y="2.28" width="0.24" height="0.24" fill="#8a0cf0"/>
<rect x="5.07" y="2.28" width="0.24" height="0.24" fill="#720cf0"/>
<rect x="5.27" y="2.28" width="0.24" height="0.24" fill="#6606f0"/>
<rect x="5.47" y="2.28" width="0.24" height="0.24" fill="#6006f6"/>
<rect x="5.67" y="2.28" width="0.24" height="0.24" fill="#5a06f6"/>
<rect x="5.87" y="2.28" width="0.24" height="0.24" fill="#5406f6"/>
<rect x="6.06" y="2.28" width="0.24" height="0.24" fill="#4e06f6"/>
<rect x="6.26" y="2.28" width="0.24" height="0.24" fill="#3c00f6"/>
<rect x="6.46" y="2.28" width="0.24" height="0.24" fill="#1800f6"/>
<rect x="6.66" y="2.28" width="0.24" height="0.24" fill="#0c00de"/>
<rect x="6.86" y="2.28" width="0.24" height="0.24" fill="#0000c6"/>
<rect x="7.06" y="2.28" width="0.24" height="0.24" fill="#00009c"/>
<rect x="7.26" y="2.28" width="0.24" height="0.24" fill="#00006c"/>
<rect x="7.46" y="2.28" width="0.24" height="0.24" fill="#000030"/>
<rect x="7.66" y="2.28" width="0.24" height="0.24" fill="#00000c"/>
<rect x="7.86" y="2.28" width="0.24" height="0.24" fill="#000006"/>
<rect x="-8.1" y="2.48" width="0.24" height="0.24" fill="#000006"/>
<rect x="-7.9" y="2.48" width="0.24" height="0.24" fill="#00000c"/>
<rect x="-7.7" y="2.48" width="0.24" height="0.24" fill="#000036"/>
<rect x="-7.5" y="2.48" width="0.24" height="0.24" fill="#00006c"/>
<rect x="-7.3" y="2.48" width="0.24" height="0.24" fill="#00009c"/>
<rect x="-7.1" y="2.48" width="0.24" height="0.24" fill="#0000c6"/>
<rect x="-6.9" y="2.48" width="0.24" height="0.24" fill="#0c00e4"/>
<rect x="-6.7" y="2.48" width="0.24" height="0.24" fill="#1e00fc"/>
<rect x="-6.5" y="2.48" width="0.24" height="0.24" fill="#3c00f6"/>
<rect x="-6.3" y="2.48" width="0.24" height="0.24" fill="#5406f6"/>
<rect x="-6.1" y="2.48" width="0.24" height="0.24" fill="#5a06f6"/>
<rect x="-5.91" y="2.48" width="0.24" height="0.24" fill="#6006f6"/>
<rect x="-5.71" y="2.48" width="0.24" height="0.24" fill="#6606f0"/>
<rect x="-5.51" y="2.48" width="0.24" height="0.24" fill="#6c06f0"/>
<rect x="-5.31" y="2.48" width="0.24" height="0.24" fill="#6c0cf0"/>
<rect x="-5.11" y="2.48" width="0.24" height="0.24" fill="#840cf0"/>
<rect x="-4.91" y="2.48" width="0.24" height="0.24" fill="#9612e4"/>
<rect x="-4.71" y="2.48" width="0.24" height="0.24" fill="#a818de"/>
<rect x="-4.51" y="2.48" width="0.24" height="0.24" fill="#ae18d8"/>
<rect x="-4.31" y="2.48" width="0.24" height="0.24" fill="#b41ed2"/>
<rect x="-4.11" y="2.48" width="0.24" height="0.24" fill="#ba1ecc"/>
<rect x="-3.91" y="2.48" width="0.24" height="0.24" fill="#c01ecc"/>
<rect x="-3.71" y="2.48" width="0.24" height="0.24" fill="#c024cc"/>
<rect x="-3.51" y="2.48" width="0.24" height="0.24" fill="#c624cc"/>
<rect x="-3.31" y="2.48" width="1.64" height="0.24" fill="#c624c6"/>
<rect x="-1.72" y="2.48" width="0.24" height="0.24" fill="#c62ac6"/>
<rect x="-1.52" y="2.48" width="0.24" height="0.24" fill="#cc30c0"/>
<rect x="-1.32" y="2.48" width="0.24" height="0.24" fill="#d83cba"/>
<rect x="-1.12" y="2.48" width="0.24" height="0.24" fill="#ea4ea8"/>
<rect x="-0.92" y="2.48" width="0.24" height="0.24" fill="#fc6696"/>
<rect x="-0.72" y="2.48" width="0.24" height="0.24" fill="#fc7284"/>
<rect x="-0.52" y="2.48" width="0.24" height="0.24" fill="#fc7e72"/>
<rect x="-0.32" y="2.48" width="0.24" height="0.24" fill="#fc846c"/>
<rect x="-0.12" y="2.48" width="0.24" height="0.24" fill="#fc8a66"/>
<rect x="0.08" y="2.48" width="0.24" height="0.24" fill="#fc8a6c"/>
<rect x="0.28" y="2.48" width="0.24" height="0.24" fill="#fc7e72"/>
<rect x="0.48" y="2.48" width="0.24" height="0.24" fill="#fc7284"/>
<rect x="0.68" y="2.48" width="0.24" height="0.24" fill="#fc6696"/>
<rect x="0.88" y="2.48" width="0.24" height="0.24" fill="#f04ea8"/>
<rect x="1.08" y="2.48" width="0.24" height="0.24" fill="#de3cb4"/>
<rect x="1.28" y="2.48" width="0.24" height="0.24" fill="#d230c0"/>
<rect x="1.48" y="2.48" width="0.24" height="0.24" fill="#cc2ac0"/>
<rect x="1.68" y="2.48" width="0.24" height="0.24" fill="#cc2ac6"/>
<rect x="1.88" y="2.48" width="1.64" height="0.24" fill="#cc2ac0"/>
<rect x="3.47" y="2.48" width="0.24" height="0.24" fill="#cc2ac6"/>
<rect x="3.67" y="2.48" width="0.24" height="0.24" fill="#c62ac6"/>
<rect x="3.87" y="2.48" width="0.24" height="0.24" fill="#c624c6"/>
<rect x="4.07" y="2.48" width="0.24" height="0.24" fill="#c01ecc"/>
<rect x="4.27" y="2.48" width="0.24" height="0.24" fill="#ba1ed2"/>
<rect x="4.47" y="2.48" width="0.24" height="0.24" fill="#ae18d8"/>
<rect x="4.67" y="2.48" width="0.24" height="0.24" fill="#a212de"/>
<rect x="4.87" y="2.48" width="0.24" height="0.24" fill="#900cea"/>
<rect x="5.07" y="2.48" width="0.24" height="0.24" fill="#780cf0"/>
<rect x="5.27" y="2.48" width="0.24" height="0.24" fill="#6c0cf0"/>
<rect x="5.47" y="2.48" width="0.24" height="0.24" fill="#6606f0"/>
<rect x="5.67" y="2.48" width="0.24" height="0.24" fill="#6006f6"/>
<rect x="5.87" y="2.48" width="0.24" height="0.24" fill="#5a06f6"/>
<rect x="6.06" y="2.48" width="0.24" height="0.24" fill="#5406f6"/>
<rect x="6.26" y="2.48" width="0.24" height="0.24" fill="#3c00f6"/>
<rect x="6.46" y="2.48" width="0.24" height="0.24" fill="#1e00fc"/>
<rect x="6.66" y="2.48" width="0.24" height="0.24" fill="#0c00e4"/>
<rect x="6.86" y="2.48" width="0.24" height="0.24" fill="#0000c6"/>
<rect x="7.06" y="2.48" width="0.24" height="0.24" fill="#00009c"/>
<rect x="7.26" y="2.48" width="0.24" height="0.24" fill="#00006c"/>
<rect x="7.46" y="2.48" width="0.24" height="0.24" fill="#000036"/>
<rect x="7.66" y="2.48" width="0.24" height="0.24" fill="#00000c"/>
<rect x="7.86" y="2.48" width="0.24" height="0.24" fill="#000006"/>
<rect x="-8.1" y="2.68" width="0.24" height="0.24" fill="#000006"/>
<rect x="-7.9" y="2.68" width="0.24" height="0.24" fill="#000012"/>
<rect x="-7.7" y="2.68" width="0.24" height="0.24" fill="#00003c"/>
<rect x="-7.5" y="2.68" width="0.24" height="0.24" fill="#000072"/>
<rect x="-7.3" y="2.68" width="0.24" height="0.24" fill="#0000a2"/>
<rect x="-7.1" y="2.68" width="0.24" height="0.24" fill="#0000cc"/>
<rect x="-6.9" y="2.68" width="0.24" height="0.24" fill="#0c00e4"/>
<rect x="-6.7" y="2.68" width="0.24" height="0.24" fill="#1e00fc"/>
<rect x="-6.5" y="2.68" width="0.24" height="0.24" fill="#4806f6"/>
<rect x="-6.3" y="2.68" width="0.24" height="0.24" fill="#5a06f6"/>
<rect x="-6.1" y="2.68" width="0.24" height="0.24" fill="#6006f6"/>
<rect x="-5.91" y="2.68" width="0.24" height="0.24" fill="#6606f0"/>
<rect x="-5.71" y="2.68" width="0.24" height="0.24" fill="#6c0cf0"/>
<rect x="-5.51" y="2.68" width="0.24" height="0.24" fill="#720cf0"/>
<rect x="-5.31" y="2.68" width="0.24" height="0.24" fill="#780cf0"/>
<rect x="-5.11" y="2.68" width="0.24" height="0.24" fill="#8a0cf0"/>
<rect x="-4.91" y="2.68" width="0.24" height="0.24" fill="#9c12e4"/>
<rect x="-4.71" y="2.68" width="0.24" height="0.24" fill="#a818de"/>
<rect x="-4.51" y="2.68" width="0.24" height="0.24" fill="#ae18d8"/>
<rect x="-4.31" y="2.68" width="0.24" height="0.24" fill="#ba1ed2"/>
<rect x="-4.11" y="2.68" width="0.24" height="0.24" fill="#ba1ecc"/>
<rect x="-3.91" y="2.68" width="0.24" height="0.24" fill="#c01ecc"/>
<rect x="-3.71" y="2.68" width="0.44" height="0.24" fill="#c024cc"/>
<rect x="-3.31" y="2.68" width="1.84" height="0.24" fill="#c624c6"/>
<rect x="-1.52" y="2.68" width="0.24" height="0.24" fill="#c62ac6"/>
<rect x="-1.32" y="2.68" width="0.24" height="0.24" fill="#cc2ac6"/>
<rect x="-1.12" y="2.68" width="0.24" height="0.24" fill="#cc30c0"/>
<rect x="-0.92" y="2.68" width="0.24" height="0.24" fill="#d836ba"/>
<rect x="-0.72" y="2.68" width="0.24" height="0.24" fill="#e442b4"/>
<rect x="-0.52" y="2.68" width="0.24" height="0.24" fill="#e448ae"/>
<rect x="-0.32" y="2.68" width="0.24" height="0.24" fill="#d83cba"/>
<rect x="-0.12" y="2.68" width="0.24" height="0.24" fill="#d230c0"/>
<rect x="0.08" y="2.68" width="0.24" height="0.24" fill="#d83cba"/>
<rect x="0.28" y="2.68" width="0.24" height="0.24" fill="#e448ae"/>
<rect x="0.48" y="2.68" width="0.24" height="0.24" fill="#e442ae"/>
<rect x="0.68" y="2.68" width="0.24" height="0.24" fill="#d83cba"/>
<rect x="0.88" y="2.68" width="0.24" height="0.24" fill="#d230c0"/>
<rect x="1.08" y="2.68" width="0.24" height="0.24" fill="#cc2ac0"/>
<rect x="1.28" y="2.68" width="1.04" height="0.24" fill="#cc2ac6"/>
<rect x="2.27" y="2.68" width="1.04" height="0.24" fill="#cc2ac0"/>
<rect x="3.27" y="2.68" width="0.44" height="0.24" fill="#cc2ac6"/>
<rect x="3.67" y="2.68" width="0.24" height="0.24" fill="#c62ac6"/>
<rect x="3.87" y="2.68" width="0.24" height="0.24" fill="#c624c6"/>
<rect x="4.07" y="2.68" width="0.24" height="0.24" fill="#c01ecc"/>
<rect x="4.27" y="2.68" width="0.24" height="0.24" fill="#ba1ed2"/>
<rect x="4.47" y="2.68" width="0.24" height="0.24" fill="#ae18d8"/>
<rect x="4.67" y="2.68" width="0.24" height="0.24" fill="#a218de"/>
<rect x="4.87" y="2.68" width="0.24" height="0.24" fill="#9612ea"/>
<rect x="5.07" y="2.68" width="0.24" height="0.24" fill="#840cf0"/>
<rect x="5.27" y="2.68" width="0.24" height="0.24" fill="#780cf0"/>
<rect x="5.47" y="2.68" width="0.24" height="0.24" fill="#720cf0"/>
<rect x="5.67" y="2.68" width="0.24" height="0.24" fill="#6606f0"/>
<rect x="5.87" y="2.68" width="0.24" height="0.24" fill="#6006f6"/>
<rect x="6.06" y="2.68" width="0.24" height="0.24" fill="#5a06f6"/>
<rect x="6.26" y="2.68" width="0.24" height="0.24" fill="#4806f6"/>
<rect x="6.46" y="2.68" width="0.24" height="0.24" fill="#1e00fc"/>
<rect x="6.66" y="2.68" width="0.24" height="0.24" fill="#0c00e4"/>
<rect x="6.86" y="2.68" width="0.24" height="0.24" fill="#0000cc"/>
<rect x="7.06" y="2.68" width="0.24" height="0.24" fill="#0000a2"/>
<rect x="7.26" y="2.68" width="0.24" height="0.24" fill="#000072"/>
<rect x="7.46" y="2.68" width="0.24" height="0.24" fill="#00003c"/>
<rect x="7.66" y="2.68" width="0.24" height="0.24" fill="#000012"/>
<rect x="7.86" y="2.68" width="0.24" height="0.24" fill="#000006"/>
<rect x="-8.1" y="2.88" width="0.24" height="0.24" fill="#000006"/>
<rect x="-7.9" y="2.88" width="0.24" height="0.24" fill="#000018"/>
<rect x="-7.7" y="2.88" width="0.24" height="0.24" fill="#000042"/>
<rect x="-7.5" y="2.88" width="0.24" height="0.24" fill="#000078"/>
<rect x="-7.3" y="2.88" width="0.24" height="0.24" fill="#0000a8"/>
<rect x="-7.1" y="2.88" width="0.24" height="0.24" fill="#0000d2"/>
<rect x="-6.9" y="2.88" width="0.24" height="0.24" fill="#1200ea"/>
<rect x="-6.7" y="2.88" width="0.24" height="0.24" fill="#2400fc"/>
<rect x="-6.5" y="2.88" width="0.24" height="0.24" fill="#4e06f6"/>
<rect x="-6.3" y="2.88" width="0.24" height="0.24" fill="#6006f6"/>
<rect x="-6.1" y="2.88" width="0.24" height="0.24" fill="#6606f0"/>
<rect x="-5.91" y="2.88" width="0.24" height="0.24" fill="#720cf0"/>
<rect x="-5.71" y="2.88" width="0.24" height="0.24" fill="#7e0cf0"/>
<rect x="-5.51" y="2.88" width="0.24" height="0.24" fill="#8a0cf0"/>
<rect x="-5.31" y="2.88" width="0.24" height="0.24" fill="#900cea"/>
<rect x="-5.11" y="2.88" width="0.24" height="0.24" fill="#9612e4"/>
<rect x="-4.91" y="2.88" width="0.24" height="0.24" fill="#a218de"/>
<rect x="-4.71" y="2.88" width="0.24" height="0.24" fill="#ae18d8"/>
<rect x="-4.51" y="2.88" width="0.24" height="0.24" fill="#b418d2"/>
<rect x="-4.31" y="2.88" width="0.24" height="0.24" fill="#ba1ed2"/>
<rect x="-4.11" y="2.88" width="0.24" height="0.24" fill="#ba1ecc"/>
<rect x="-3.91" y="2.88" width="0.24" height="0.24" fill="#c01ecc"/>
<rect x="-3.71" y="2.88" width="0.24" height="0.24" fill="#c024cc"/>
<rect x="-3.51" y="2.88" width="0.24" height="0.24" fill="#c624cc"/>
<rect x="-3.31" y="2.88" width="2.04" height="0.24" fill="#c624c6"/>
<rect x="-1.32" y="2.88" width="0.64" height="0.24" fill="#c62ac6"/>
<rect x="-0.72" y="2.88" width="0.24" height="0.24" fill="#c624c6"/>
<rect x="-0.52" y="2.88" width="0.24" height="0.24" fill="#a818de"/>
<rect x="-0.32" y="2.88" width="0.24" height="0.24" fill="#6006f6"/>
<rect x="-0.12" y="2.88" width="0.24" height="0.24" fill="#3600fc"/>
<rect x="0.08" y="2.88" width="0.24" height="0.24" fill="#6006f6"/>
<rect x="0.28" y="2.88" width="0.24" height="0.24" fill="#a818de"/>
<rect x="0.48" y="2.88" width="0.24" height="0.24" fill="#c62ac6"/>
<rect x="0.68" y="2.88" width="1.64" height="0.24" fill="#cc2ac6"/>
<rect x="2.27" y="2.88" width="1.04" height="0.24" fill="#cc2ac0"/>
<rect x="3.27" y="2.88" width="0.44" height="0.24" fill="#cc2ac6"/>
<rect x="3.67" y="2.88" width="0.24" height="0.24" fill="#c62ac6"/>
<rect x="3.87" y="2.88" width="0.24" height="0.24" fill="#c624c6"/>
<rect x="4.07" y="2.88" width="0.24" height="0.24" fill="#c024cc"/>
<rect x="4.27" y="2.88" width="0.24" height="0.24" fill="#ba1ecc"/>
<rect x="4.47" y="2.88" width="0.24" height="0.24" fill="#b418d2"/>
<rect x="4.67" y="2.88" width="0.24" height="0.24" fill="#ae18d8"/>
<rect x="4.87" y="2.88" width="0.24" height="0.24" fill="#a212e4"/>
<rect x="5.07" y="2.88" width="0.24" height="0.24" fill="#9612ea"/>
<rect x="5.27" y="2.88" width="0.24" height="0.24" fill="#900cf0"/>
<rect x="5.47" y="2.88" width="0.24" height="0.24" fill="#7e0cf0"/>
<rect x="5.67" y="2.88" width="0.24" height="0.24" fill="#720cf0"/>
<rect x="5.87" y="2.88" width="0.24" height="0.24" fill="#6606f0"/>
<rect x="6.06" y="2.88" width="0.24" height="0.24" fill="#6006f6"/>
<rect x="6.26" y="2.88" width="0.24" height="0.24" fill="#4e06f6"/>
<rect x="6.46" y="2.88" width="0.24" height="0.24" fill="#2400fc"/>
<rect x="6.66" y="2.88" width="0.24" height="0.24" fill="#1200ea"/>
<rect x="6.86" y="2.88" width="0.24" height="0.24" fill="#0000d2"/>
<rect x="7.06" y="2.88" width="0.24" height="0.24" fill="#0000a8"/>
<rect x="7.26" y="2.88" width="0.24" height="0.24" fill="#000078"/>
<rect x="7.46" y="2.88" width="0.24" height="0.24" fill="#000042"/>
<rect x="7.66" y="2.88" width="0.24" height="0.24" fill="#000018"/>
<rect x="7.86" y="2.88" width="0.24" height="0.24" fill="#000006"/>
<rect x="-8.1" y="3.08" width="0.24" height="0.24" fill="#000006"/>
<rect x="-7.9" y="3.08" width="0.24" height="0.24" fill="#000018"/>
<rect x="-7.7" y="3.08" width="0.24" height="0.24" fill="#000048"/>
<rect x="-7.5" y="3.08" width="0.24" height="0.24" fill="#00007e"/>
<rect x="-7.3" y="3.08" width="0.24" height="0.24" fill="#0000a8"/>
<rect x="-7.1" y="3.08" width="0.24" height="0.24" fill="#0000d2"/>
<rect x="-6.9" y="3.08" width="0.24" height="0.24" fill="#1200ea"/>
<rect x="-6.7" y="3.08" width="0.24" height="0.24" fill="#2a00fc"/>
<rect x="-6.5" y="3.08" width="0.24" height="0.24" fill="#5406f6"/>
<rect x="-6.3" y="3.08" width="0.24" height="0.24" fill="#6606f6"/>
<rect x="-6.1" y="3.08" width="0.24" height="0.24" fill="#720cf0"/>
<rect x="-5.91" y="3.08" width="0.24" height="0.24" fill="#840cf0"/>
<rect x="-5.71" y="3.08" width="0.24" height="0.24" fill="#9612ea"/>
<rect x="-5.51" y="3.08" width="0.24" height="0.24" fill="#a212de"/>
<rect x="-5.31" y="3.08" width="0.24" height="0.24" fill="#a818de"/>
<rect x="-5.11" y="3.08" width="0.24" height="0.24" fill="#ae18d8"/>
<rect x="-4.91" y="3.08" width="0.44" height="0.24" fill="#b418d2"/>
<rect x="-4.51" y="3.08" width="0.44" height="0.24" fill="#ba1ed2"/>
<rect x="-4.11" y="3.08" width="0.44" height="0.24" fill="#c01ecc"/>
<rect x="-3.71" y="3.08" width="0.24" height="0.24" fill="#c024cc"/>
<rect x="-3.51" y="3.08" width="1.44" height="0.24" fill="#c624c6"/>
<rect x="-2.11" y="3.08" width="1.44" height="0.24" fill="#c62ac6"/>
<rect x="-0.72" y="3.08" width="0.24" height="0.24" fill="#c01ecc"/>
<rect x="-0.52" y="3.08" width="0.24" height="0.24" fill="#8a0cf0"/>
<rect x="-0.32" y="3.08" width="0.24" height="0.24" fill="#1e00fc"/>
<rect x="-0.12" y="3.08" width="0.24" height="0.24" fill="#1200ea"/>
<rect x="0.08" y="3.08" width="0.24" height="0.24" fill="#1e00fc"/>
<rect x="0.28" y="3.08" width="0.24" height="0.24" fill="#8a0cf0"/>
<rect x="0.48" y="3.08" width="0.24" height="0.24" fill="#c024cc"/>
<rect x="0.68" y="3.08" width="1.04" height="0.24" fill="#cc2ac6"/>
<rect x="1.68" y="3.08" width="1.04" height="0.24" fill="#cc2ac0"/>
<rect x="2.67" y="3.08" width="0.44" height="0.24" fill="#cc30c0"/>
<rect x="3.07" y="3.08" width="0.44" height="0.24" fill="#cc2ac0"/>
<rect x="3.47" y="3.08" width="0.44" height="0.24" fill="#cc2ac6"/>
<rect x="3.87" y="3.08" width="0.24" height="0.24" fill="#c62ac6"/>
<rect x="4.07" y="3.08" width="0.24" height="0.24" fill="#c624c6"/>
<rect x="4.27" y="3.08" width="0.44" height="0.24" fill="#c01ecc"/>
<rect x="4.67" y="3.08" width="0.24" height="0.24" fill="#ba1ecc"/>
<rect x="4.87" y="3.08" width="0.24" height="0.24" fill="#b418d2"/>
<rect x="5.07" y="3.08" width="0.24" height="0.24" fill="#ae18d8"/>
<rect x="5.27" y="3.08" width="0.24" height="0.24" fill="#a218de"/>
<rect x="5.47" y="3.08" width="0.24" height="0.24" fill="#9612ea"/>
<rect x="5.67" y="3.08" width="0.24" height="0.24" fill="#840cf0"/>
<rect x="5.87" y="3.08" width="0.24" height="0.24" fill="#720cf0"/>
<rect x="6.06" y="3.08" width="0.24" height="0.24" fill="#6606f6"/>
<rect x="6.26" y="3.08" width="0.24" height="0.24" fill="#5406f6"/>
<rect x="6.46" y="3.08" width="0.24" height="0.24" fill="#2a00fc"/>
<rect x="6.66" y="3.08" width="0.24" height="0.24" fill="#1200ea"/>
<rect x="6.86" y="3.08" width="0.24" height="0.24" fill="#0000d2"/>
<rect x="7.06" y="3.08" width="0.24" height="0.24" fill="#0000a8"/>
<rect x="7.26" y="3.08" width="0.24" height="0.24" fill="#00007e"/>
<rect x="7.46" y="3.08" width="0.24" height="0.24" fill="#000048"/>
<rect x="7.66" y="3.08" width="0.24" height="0.24" fill="#000018"/>
<rect x="7.86" y="3.08" width="0.24" height="0.24" fill="#000006"/>
<rect x="-8.1" y="3.27" width="0.24" height="0.24" fill="#000006"/>
<rect x="-7.9" y="3.27" width="0.24" height="0.24" fill="#00001e"/>
<rect x="-7.7" y="3.27" width="0.24" height="0.24" fill="#00004e"/>
<rect x="-7.5" y="3.27" width="0.24" height="0.24" fill="#000084"/>
<rect x="-7.3" y="3.27" width="0.24" height="0.24" fill="#0000ae"/>
<rect x="-7.1" y="3.27" width="0.24" height="0.24" fill="#0600d8"/>
<rect x="-6.9" y="3.27" width="0.24" height="0.24" fill="#1200f0"/>
<rect x="-6.7" y="3.27" width="0.24" height="0.24" fill="#3000fc"/>
<rect x="-6.5" y="3.27" width="0.24" height="0.24" fill="#5a06f6"/>
<rect x="-6.3" y="3.27" width="0.24" height="0.24" fill="#6c06f0"/>
<rect x="-6.1" y="3.27" width="0.24" height="0.24" fill="#7e0cf0"/>
<rect x="-5.91" y="3.27" width="0.24" height="0.24" fill="#9612ea"/>
<rect x="-5.71" y="3.27" width="0.24" height="0.24" fill="#ae18d8"/>
<rect x="-5.51" y="3.27" width="0.24" height="0.24" fill="#c624c6"/>
<rect x="-5.31" y="3.27" width="0.44" height="0.24" fill="#d236ba"/>
<rect x="-4.91" y="3.27" width="0.24" height="0.24" fill="#cc30c0"/>
<rect x="-4.71" y="3.27" width="0.24" height="0.24" fill="#c624c6"/>
<rect x="-4.51" y="3.27" width="0.64" height="0.24" fill="#c01ecc"/>
<rect x="-3.91" y="3.27" width="0.24" height="0.24" fill="#c024cc"/>
<rect x="-3.71" y="3.27" width="0.44" height="0.24" fill="#c624c6"/>
<rect x="-3.31" y="3.27" width="1.44" height="0.24" fill="#c62ac6"/>
<rect x="-1.92" y="3.27" width="1.24" height="0.24" fill="#cc2ac6"/>
<rect x="-0.72" y="3.27" width="0.24" height="0.24" fill="#c624c6"/>
<rect x="-0.52" y="3.27" width="0.24" height="0.24" fill="#9c12e4"/>
<rect x="-0.32" y="3.27" width="0.24" height="0.24" fill="#4200f6"/>
<rect x="-0.12" y="3.27" width="0.24" height="0.24" fill="#1e00fc"/>
<rect x="0.08" y="3.27" width="0.24" height="0.24" fill="#4200f6"/>
<rect x="0.28" y="3.27" width="0.24" height="0.24" fill="#9c12e4"/>
<rect x="0.48" y="3.27" width="0.24" height="0.24" fill="#c624c6"/>
<rect x="0.68" y="3.27" width="0.64" height="0.24" fill="#cc2ac0"/>
<rect x="1.28" y="3.27" width="2.43" height="0.24" fill="#cc30c0"/>
<rect x="3.67" y="3.27" width="0.24" height="0.24" fill="#cc2ac0"/>
<rect x="3.87" y="3.27" width="0.24" height="0.24" fill="#cc2ac6"/>
<rect x="4.07" y="3.27" width="0.44" height="0.24" fill="#c62ac6"/>
<rect x="4.47" y="3.27" width="0.24" height="0.24" fill="#cc30c0"/>
<rect x="4.67" y="3.27" width="0.24" height="0.24" fill="#d836ba"/>
<rect x="4.87" y="3.27" width="0.24" height="0.24" fill="#de3cb4"/>
<rect x="5.07" y="3.27" width="0.24" height="0.24" fill="#d83cba"/>
<rect x="5.27" y="3.27" width="0.24" height="0.24" fill="#cc2ac6"/>
<rect x="5.47" y="3.27" width="0.24" height="0.24" fill="#ae18d8"/>
<rect x="5.67" y="3.27" width="0.24" height="0.24" fill="#9612ea"/>
<rect x="5.87" y="3.27" width="0.24" height="0.24" fill="#7e0cf0"/>
<rect x="6.06" y="3.27" width="0.24" height="0.24" fill="#6c06f0"/>
<rect x="6.26" y="3.27" width="0.24" height="0.24" fill="#5a06f6"/>
<rect x="6.46" y="3.27" width="0.24" height="0.24" fill="#3000fc"/>
<rect x="6.66" y="3.27" width="0.24" height="0.24" fill="#1200f0"/>
<rect x="6.86" y="3.27" width="0.24" height="0.24" fill="#0600d8"/>
<rect x="7.06" y="3.27" width="0.24" height="0.24" fill="#0000ae"/>
<rect x="7.26" y="3.27" width="0.24" height="0.24" fill="#000084"/>
<rect x="7.46" y="3.27" width="0.24" height="0.24" fill="#00004e"/>
<rect x="7.66" y="3.27" width="0.24" height="0.24" fill="#00001e"/>
<rect x="7.86" y="3.27" width="0.24" height="0.24" fill="#000006"/>
<rect x="-8.1" y="3.47" width="0.24" height="0.24" fill="#000006"/>
<rect x="-7.9" y="3.47" width="0.24" height="0.24" fill="#000024"/>
<rect x="-7.7" y="3.47" width="0.24" height="0.24" fill="#000054"/>
<rect x="-7.5" y="3.47" width="0.24" height="0.24" fill="#00008a"/>
<rect x="-7.3" y="3.47" width="0.24" height="0.24" fill="#0000b4"/>
<rect x="-7.1" y="3.47" width="0.24" height="0.24" fill="#0600d8"/>
<rect x="-6.9" y="3.47" width="0.24" height="0.24" fill="#1800f0"/>
<rect x="-6.7" y="3.47" width="0.24" height="0.24" fill="#3600fc"/>
<rect x="-6.5" y="3.47" width="0.24" height="0.24" fill="#6006f6"/>
<rect x="-6.3" y="3.47" width="0.24" height="0.24" fill="#720cf0"/>
<rect x="-6.1" y="3.47" width="0.24" height="0.24" fill="#8a0cf0"/>
<rect x="-5.91" y="3.47" width="0.24" height="0.24" fill="#a818de"/>
<rect x="-5.71" y="3.47" width="0.24" height="0.24" fill="#cc30c0"/>
<rect x="-5.51" y="3.47" width="0.24" height="0.24" fill="#fc609c"/>
<rect x="-5.31" y="3.47" width="0.24" height="0.24" fill="#fc7284"/>
<rect x="-5.11" y="3.47" width="0.24" height="0.24" fill="#fc6c90"/>
<rect x="-4.91" y="3.47" width="0.24" height="0.24" fill="#f054a8"/>
<rect x="-4.71" y="3.47" width="0.24" height="0.24" fill="#d836ba"/>
<rect x="-4.51" y="3.47" width="0.24" height="0.24" fill="#c62ac6"/>
<rect x="-4.31" y="3.47" width="0.64" height="0.24" fill="#c624c6"/>
<rect x="-3.71" y="3.47" width="0.24" height="0.24" fill="#c62ac6"/>
<rect x="-3.51" y="3.47" width="0.64" height="0.24" fill="#cc2ac6"/>
<rect x="-2.91" y="3.47" width="1.44" height="0.24" fill="#cc2ac0"/>
<rect x="-1.52" y="3.47" width="1.04" height="0.24" fill="#cc30c0"/>
<rect x="-0.52" y="3.47" width="0.24" height="0.24" fill="#c024cc"/>
<rect x="-0.32" y="3.47" width="0.24" height="0.24" fill="#a818de"/>
<rect x="-0.12" y="3.47" width="0.24" height="0.24" fill="#9612ea"/>
<rect x="0.08" y="3.47" width="0.24" height="0.24" fill="#a818de"/>
<rect x="0.28" y="3.47" width="0.24" height="0.24" fill="#c624cc"/>
<rect x="0.48" y="3.47" width="0.24" height="0.24" fill="#cc30c0"/>
<rect x="0.68" y="3.47" width="3.23" height="0.24" fill="#d230c0"/>
<rect x="3.87" y="3.47" width="0.44" height="0.24" fill="#cc30c0"/>
<rect x="4.27" y="3.47" width="0.24" height="0.24" fill="#d230c0"/>
<rect x="4.47" y="3.47" width="0.24" height="0.24" fill="#de42b4"/>
<rect x="4.67" y="3.47" width="0.24" height="0.24" fill="#fc5aa2"/>
<rect x="4.87" y="3.47" width="0.24" height="0.24" fill="#fc728a"/>
<rect x="5.07" y="3.47" width="0.24" height="0.24" fill="#fc787e"/>
<rect x="5.27" y="3.47" width="0.24" height="0.24" fill="#fc609c"/>
<rect x="5.47" y="3.47" width="0.24" height="0.24" fill="#d230c0"/>
<rect x="5.67" y="3.47" width="0.24" height="0.24" fill="#a818de"/>
<rect x="5.87" y="3.47" width="0.24" height="0.24" fill="#8a0cf0"/>
<rect x="6.06" y="3.47" width="0.24" height="0.24" fill="#720cf0"/>
<rect x="6.26" y="3.47" width="0.24" height="0.24" fill="#6006f6"/>
<rect x="6.46" y="3.47" width="0.24" height="0.24" fill="#3600fc"/>
<rect x="6.66" y="3.47" width="0.24" height="0.24" fill="#1800f0"/>
<rect x="6.86" y="3.47" width="0.24" height="0.24" fill="#0600d8"/>
<rect x="7.06" y="3.47" width="0.24" height="0.24" fill="#0000b4"/>
<rect x="7.26" y="3.47" width="0.24" height="0.24" fill="#00008a"/>
<rect x="7.46" y="3.47" width="0.24" height="0.24" fill="#000054"/>
<rect x="7.66" y="3.47" width="0.24" height="0.24" fill="#000024"/>
<rect x="7.86" y="3.47" width="0.24" height="0.24" fill="#000006"/>
<rect x="-8.1" y="3.67" width="0.24" height="0.24" fill="#000006"/>
<rect x="-7.9" y="3.67" width="0.24" height="0.24" fill="#000024"/>
<rect x="-7.7" y="3.67" width="0.24" height="0.24" fill="#00005a"/>
<rect x="-7.5" y="3.67" width="0.24" height="0.24" fill="#000090"/>
<rect x="-7.3" y="3.67" width="0.24" height="0.24" fill="#0000ba"/>
<rect x="-7.1" y="3.67" width="0.24" height="0.24" fill="#0600de"/>
<rect x="-6.9" y="3.67" width="0.24" height="0.24" fill="#1800f6"/>
<rect x="-6.7" y="3.67" width="0.24" height="0.24" fill="#3c00f6"/>
<rect x="-6.5" y="3.67" width="0.24" height="0.24" fill="#6006f6"/>
<rect x="-6.3" y="3.67" width="0.24" height="0.24" fill="#780cf0"/>
<rect x="-6.1" y="3.67" width="0.24" height="0.24" fill="#900cea"/>
<rect x="-5.91" y="3.67" width="0.24" height="0.24" fill="#b418d2"/>
<rect x="-5.71" y="3.67" width="0.24" height="0.24" fill="#f04ea8"/>
<rect x="-5.51" y="3.67" width="0.24" height="0.24" fill="#fc9060"/>
<rect x="-5.31" y="3.67" width="0.24" height="0.24" fill="#fcd212"/>
<rect x="-5.11" y="3.67" width="0.24" height="0.24" fill="#fc9c42"/>
<rect x="-4.91" y="3.67" width="0.24" height="0.24" fill="#fc728a"/>
<rect x="-4.71" y="3.67" width="0.24" height="0.24" fill="#ea48ae"/>
<rect x="-4.51" y="3.67" width="0.24" height="0.24" fill="#d236ba"/>
<rect x="-4.31" y="3.67" width="0.24" height="0.24" fill="#cc2ac0"/>
<rect x="-4.11" y="3.67" width="0.24" height="0.24" fill="#cc2ac6"/>
<rect x="-3.91" y="3.67" width="0.24" height="0.24" fill="#cc2ac0"/>
<rect x="-3.71" y="3.67" width="0.24" height="0.24" fill="#cc30c0"/>
<rect x="-3.51" y="3.67" width="2.04" height="0.24" fill="#d230c0"/>
<rect x="-1.52" y="3.67" width="0.44" height="0.24" fill="#d236c0"/>
<rect x="-1.12" y="3.67" width="0.84" height="0.24" fill="#d236ba"/>
<rect x="-0.32" y="3.67" width="0.64" height="0.24" fill="#d230c0"/>
<rect x="0.28" y="3.67" width="0.24" height="0.24" fill="#d236ba"/>
<rect x="0.48" y="3.67" width="3.43" height="0.24" fill="#d836ba"/>
<rect x="3.87" y="3.67" width="0.44" height="0.24" fill="#d236ba"/>
<rect x="4.27" y="3.67" width="0.24" height="0.24" fill="#de3cb4"/>
<rect x="4.47" y="3.67" width="0.24" height="0.24" fill="#f654a2"/>
<rect x="4.67" y="3.67" width="0.24" height="0.24" fill="#fc787e"/>
<rect x="4.87" y="3.67" width="0.24" height="0.24" fill="#fca83c"/>
<rect x="5.07" y="3.67" width="0.24" height="0.24" fill="#fcd80c"/>
<rect x="5.27" y="3.67" width="0.24" height="0.24" fill="#fc905a"/>
<rect x="5.47" y="3.67" width="0.24" height="0.24" fill="#f04ea8"/>
<rect x="5.67" y="3.67" width="0.24" height="0.24" fill="#b418d2"/>
<rect x="5.87" y="3.67" width="0.24" height="0.24" fill="#900cea"/>
<rect x="6.06" y="3.67" width="0.24" height="0.24" fill="#780cf0"/>
<rect x="6.26" y="3.67" width="0.24" height="0.24" fill="#6006f6"/>
<rect x="6.46" y="3.67" width="0.24" height="0.24" fill="#3c00f6"/>
<rect x="6.66" y="3.67" width="0.24" height="0.24" fill="#1800f6"/>
<rect x="6.86" y="3.67" width="0.24" height="0.24" fill="#0600de"/>
<rect x="7.06" y="3.67" width="0.24" height="0.24" fill="#0000ba"/>
<rect x="7.26" y="3.67" width="0.24" height="0.24" fill="#000090"/>
<rect x="7.46" y="3.67" width="0.24" height="0.24" fill="#00005a"/>
<rect x="7.66" y="3.67" width="0.24" height="0.24" fill="#000024"/>
<rect x="7.86" y="3.67" width="0.24" height="0.24" fill="#000006"/>
<rect x="-8.1" y="3.87" width="0.24" height="0.24" fill="#000006"/>
<rect x="-7.9" y="3.87" width="0.24" height="0.24" fill="#00002a"/>
<rect x="-7.7" y="3.87" width="0.24" height="0.24" fill="#000060"/>
<rect x="-7.5" y="3.87" width="0.24" height="0.24" fill="#000090"/>
<rect x="-7.3" y="3.87" width="0.24" height="0.24" fill="#0000c0"/>
<rect x="-7.1" y="3.87" width="0.24" height="0.24" fill="#0600de"/>
<rect x="-6.9" y="3.87" width="0.24" height="0.24" fill="#1800f6"/>
<rect x="-6.7" y="3.87" width="0.24" height="0.24" fill="#4200f6"/>
<rect x="-6.5" y="3.87" width="0.24" height="0.24" fill="#6606f6"/>
<rect x="-6.3" y="3.87" width="0.24" height="0.24" fill="#780cf0"/>
<rect x="-6.1" y="3.87" width="0.24" height="0.24" fill="#9612ea"/>
<rect x="-5.91" y="3.87" width="0.24" height="0.24" fill="#ba1ed2"/>
<rect x="-5.71" y="3.87" width="0.24" height="0.24" fill="#fc609c"/>
<rect x="-5.51" y="3.87" width="0.24" height="0.24" fill="#fcb42a"/>
<rect x="-5.31" y="3.87" width="0.24" height="0.24" fill="#fcfcfc"/>
<rect x="-5.11" y="3.87" width="0.24" height="0.24" fill="#fcd812"/>
<rect x="-4.91" y="3.87" width="0.24" height="0.24" fill="#fc7e78"/>
<rect x="-4.71" y="3.87" width="0.24" height="0.24" fill="#f65aa2"/>
<rect x="-4.51" y="3.87" width="0.24" height="0.24" fill="#de3cb4"/>
<rect x="-4.31" y="3.87" width="0.24" height="0.24" fill="#d836ba"/>
<rect x="-4.11" y="3.87" width="0.24" height="0.24" fill="#d236ba"/>
<rect x="-3.91" y="3.87" width="0.44" height="0.24" fill="#d836ba"/>
<rect x="-3.51" y="3.87" width="0.84" height="0.24" fill="#d83cba"/>
<rect x="-2.71" y="3.87" width="0.24" height="0.24" fill="#de3cba"/>
<rect x="-2.51" y="3.87" width="3.03" height="0.24" fill="#de3cb4"/>
<rect x="0.48" y="3.87" width="1.84" height="0.24" fill="#de42b4"/>
<rect x="2.27" y="3.87" width="1.04" height="0.24" fill="#e442b4"/>
<rect x="3.27" y="3.87" width="0.64" height="0.24" fill="#de42b4"/>
<rect x="3.87" y="3.87" width="0.24" height="0.24" fill="#de3cb4"/>
<rect x="4.07" y="3.87" width="0.24" height="0.24" fill="#de42b4"/>
<rect x="4.27" y="3.87" width="0.24" height="0.24" fill="#ea48ae"/>
<rect x="4.47" y="3.87" width="0.24" height="0.24" fill="#fc609c"/>
<rect x="4.67" y="3.87" width="0.24" height="0.24" fill="#fc846c"/>
<rect x="4.87" y="3.87" width="0.24" height="0.24" fill="#fcde06"/>
<rect x="5.07" y="3.87" width="0.24" height="0.24" fill="#fcfcfc"/>
<rect x="5.27" y="3.87" width="0.24" height="0.24" fill="#fcba24"/>
<rect x="5.47" y="3.87" width="0.24" height="0.24" fill="#fc609c"/>
<rect x="5.67" y="3.87" width="0.24" height="0.24" fill="#ba1ed2"/>
<rect x="5.87" y="3.87" width="0.24" height="0.24" fill="#9612ea"/>
<rect x="6.06" y="3.87" width="0.24" height="0.24" fill="#780cf0"/>
<rect x="6.26" y="3.87" width="0.24" height="0.24" fill="#6606f6"/>
<rect x="6.46" y="3.87" width="0.24" height="0.24" fill="#4200f6"/>
<rect x="6.66" y="3.87" width="0.24" height="0.24" fill="#1800f6"/>
<rect x="6.86" y="3.87" width="0.24" height="0.24" fill="#0600de"/>
<rect x="7.06" y="3.87" width="0.24" height="0.24" fill="#0000c0"/>
<rect x="7.26" y="3.87" width="0.24" height="0.24" fill="#000090"/>
<rect x="7.46" y="3.87" width="0.24" height="0.24" fill="#000060"/>
<rect x="7.66" y="3.87" width="0.24" height="0.24" fill="#00002a"/>
<rect x="7.86" y="3.87" width="0.24" height="0.24" fill="#000006"/>
<rect x="-8.1" y="4.07" width="0.24" height="0.24" fill="#000006"/>
<rect x="-7.9" y="4.07" width="0.24" height="0.24" fill="#00002a"/>
<rect x="-7.7" y="4.07" width="0.24" height="0.24" fill="#00005a"/>
<rect x="-7.5" y="4.07" width="0.24" height="0.24" fill="#00008a"/>
<rect x="-7.3" y="4.07" width="0.24" height="0.24" fill="#0000b4"/>
<rect x="-7.1" y="4.07" width="0.24" height="0.24" fill="#0600d8"/>
<rect x="-6.9" y="4.07" width="0.24" height="0.24" fill="#1200f0"/>
<rect x="-6.7" y="4.07" width="0.24" height="0.24" fill="#3000fc"/>
<rect x="-6.5" y="4.07" width="0.24" height="0.24" fill="#5a06f6"/>
<rect x="-6.3" y="4.07" width="0.24" height="0.24" fill="#720cf0"/>
<rect x="-6.1" y="4.07" width="0.24" height="0.24" fill="#900cea"/>
<rect x="-5.91" y="4.07" width="0.24" height="0.24" fill="#b418d2"/>
<rect x="-5.71" y="4.07" width="0.24" height="0.24" fill="#f054a8"/>
<rect x="-5.51" y="4.07" width="0.24" height="0.24" fill="#fc9c4e"/>
<rect x="-5.31" y="4.07" width="0.24" height="0.24" fill="#fcf012"/>
<rect x="-5.11" y="4.07" width="0.24" height="0.24" fill="#fc9c48"/>
<rect x="-4.91" y="4.07" width="0.24" height="0.24" fill="#fc5a9c"/>
<rect x="-4.71" y="4.07" width="0.24" height="0.24" fill="#c01ecc"/>
<rect x="-4.51" y="4.07" width="0.24" height="0.24" fill="#9c12e4"/>
<rect x="-4.31" y="4.07" width="0.24" height="0.24" fill="#840cf0"/>
<rect x="-4.11" y="4.07" width="0.24" height="0.24" fill="#720cf0"/>
<rect x="-3.91" y="4.07" width="0.24" height="0.24" fill="#6606f6"/>
<rect x="-3.71" y="4.07" width="0.24" height="0.24" fill="#5a06f6"/>
<rect x="-3.51" y="4.07" width="0.24" height="0.24" fill="#4e06f6"/>
<rect x="-3.31" y="4.07" width="0.24" height="0.24" fill="#4206f6"/>
<rect x="-3.11" y="4.07" width="0.24" height="0.24" fill="#3c00f6"/>
<rect x="-2.91" y="4.07" width="0.24" height="0.24" fill="#3600fc"/>
<rect x="-2.71" y="4.07" width="0.24" height="0.24" fill="#3000fc"/>
<rect x="-2.51" y="4.07" width="0.24" height="0.24" fill="#2a00fc"/>
<rect x="-2.31" y="4.07" width="0.64" height="0.24" fill="#2400fc"/>
<rect x="-1.72" y="4.07" width="3.43" height="0.24" fill="#1e00fc"/>
<rect x="1.68" y="4.07" width="0.64" height="0.24" fill="#2400fc"/>
<rect x="2.27" y="4.07" width="0.24" height="0.24" fill="#2a00fc"/>
<rect x="2.47" y="4.07" width="0.24" height="0.24" fill="#3000fc"/>
<rect x="2.67" y="4.07" width="0.24" height="0.24" fill="#3600fc"/>
<rect x="2.87" y="4.07" width="0.24" height="0.24" fill="#3c00f6"/>
<rect x="3.07" y="4.07" width="0.24" height="0.24" fill="#4206f6"/>
<rect x="3.27" y="4.07" width="0.24" height="0.24" fill="#4e06f6"/>
<rect x="3.47" y="4.07" width="0.24" height="0.24" fill="#5a06f6"/>
<rect x="3.67" y="4.07" width="0.24" height="0.24" fill="#6606f6"/>
<rect x="3.87" y="4.07" width="0.24" height="0.24" fill="#720cf0"/>
<rect x="4.07" y="4.07" width="0.24" height="0.24" fill="#840cf0"/>
<rect x="4.27" y="4.07" width="0.24" height="0.24" fill="#9c12e4"/>
<rect x="4.47" y="4.07" width="0.24" height="0.24" fill="#c01ecc"/>
<rect x="4.67" y="4.07" width="0.24" height="0.24" fill="#fc5a9c"/>
<rect x="4.87" y="4.07" width="0.24" height="0.24" fill="#fc9c48"/>
<rect x="5.07" y="4.07" width="0.24" height="0.24" fill="#fcf01e"/>
<rect x="5.27" y="4.07" width="0.24" height="0.24" fill="#fc9c4e"/>
<rect x="5.47" y="4.07" width="0.24" height="0.24" fill="#f054a2"/>
<rect x="5.67" y="4.07" width="0.24" height="0.24" fill="#b418d2"/>
<rect x="5.87" y="4.07" width="0.24" height="0.24" fill="#900cea"/>
<rect x="6.06" y="4.07" width="0.24" height="0.24" fill="#720cf0"/>
<rect x="6.26" y="4.07" width="0.24" height="0.24" fill="#5a06f6"/>
<rect x="6.46" y="4.07" width="0.24" height="0.24" fill="#3000fc"/>
<rect x="6.66" y="4.07" width="0.24" height="0.24" fill="#1200f0"/>
<rect x="6.86" y="4.07" width="0.24" height="0.24" fill="#0600d8"/>
<rect x="7.06" y="4.07" width="0.24" height="0.24" fill="#0000b4"/>
<rect x="7.26" y="4.07" width="0.24" height="0.24" fill="#00008a"/>
<rect x="7.46" y="4.07" width="0.24" height="0.24" fill="#00005a"/>
<rect x="7.66" y="4.07" width="0.24" height="0.24" fill="#00002a"/>
<rect x="7.86" y="4.07" width="0.24" height="0.24" fill="#000006"/>
<rect x="-8.1" y="4.27" width="0.24" height="0.24" fill="#00000c"/>
<rect x="-7.9" y="4.27" width="0.24" height="0.24" fill="#00002a"/>
<rect x="-7.7" y="4.27" width="0.24" height="0.24" fill="#00005a"/>
<rect x="-7.5" y="4.27" width="0.24" height="0.24" fill="#000084"/>
<rect x="-7.3" y="4.27" width="0.24" height="0.24" fill="#0000a8"/>
<rect x="-7.1" y="4.27" width="0.24" height="0.24" fill="#0000cc"/>
<rect x="-6.9" y="4.27" width="0.24" height="0.24" fill="#0c00e4"/>
<rect x="-6.7" y="4.27" width="0.24" height="0.24" fill="#1e00fc"/>
<rect x="-6.5" y="4.27" width="0.24" height="0.24" fill="#4206f6"/>
<rect x="-6.3" y="4.27" width="0.24" height="0.24" fill="#6606f0"/>
<rect x="-6.1" y="4.27" width="0.24" height="0.24" fill="#840cf0"/>
<rect x="-5.91" y="4.27" width="0.24" height="0.24" fill="#a212de"/>
<rect x="-5.71" y="4.27" width="0.24" height="0.24" fill="#cc30c0"/>
<rect x="-5.51" y="4.27" width="0.24" height="0.24" fill="#fc6096"/>
<rect x="-5.31" y="4.27" width="0.24" height="0.24" fill="#fc787e"/>
<rect x="-5.11" y="4.27" width="0.24" height="0.24" fill="#fc6696"/>
<rect x="-4.91" y="4.27" width="0.24" height="0.24" fill="#d836ba"/>
<rect x="-4.71" y="4.27" width="0.24" height="0.24" fill="#ae18d8"/>
<rect x="-4.51" y="4.27" width="0.24" height="0.24" fill="#900cea"/>
<rect x="-4.31" y="4.27" width="0.24" height="0.24" fill="#780cf0"/>
<rect x="-4.11" y="4.27" width="0.24" height="0.24" fill="#6606f0"/>
<rect x="-3.91" y="4.27" width="0.24" height="0.24" fill="#5a06f6"/>
<rect x="-3.71" y="4.27" width="0.24" height="0.24" fill="#4e06f6"/>
<rect x="-3.51" y="4.27" width="0.24" height="0.24" fill="#4806f6"/>
<rect x="-3.31" y="4.27" width="0.24" height="0.24" fill="#3c00f6"/>
<rect x="-3.11" y="4.27" width="0.24" height="0.24" fill="#3600fc"/>
<rect x="-2.91" y="4.27" width="0.24" height="0.24" fill="#3000fc"/>
<rect x="-2.71" y="4.27" width="0.24" height="0.24" fill="#2a00fc"/>
<rect x="-2.51" y="4.27" width="0.24" height="0.24" fill="#2400fc"/>
<rect x="-2.31" y="4.27" width="1.24" height="0.24" fill="#1e00fc"/>
<rect x="-1.12" y="4.27" width="0.24" height="0.24" fill="#1e00f6"/>
<rect x="-0.92" y="4.27" width="1.84" height="0.24" fill="#1800f6"/>
<rect x="0.88" y="4.27" width="0.24" height="0.24" fill="#1e00f6"/>
<rect x="1.08" y="4.27" width="1.24" height="0.24" fill="#1e00fc"/>
<rect x="2.27" y="4.27" width="0.24" height="0.24" fill="#2400fc"/>
<rect x="2.47" y="4.27" width="0.24" height="0.24" fill="#2a00fc"/>
<rect x="2.67" y="4.27" width="0.24" height="0.24" fill="#3000fc"/>
<rect x="2.87" y="4.27" width="0.24" height="0.24" fill="#3600fc"/>
<rect x="3.07" y="4.27" width="0.24" height="0.24" fill="#3c00f6"/>
<rect x="3.27" y="4.27" width="0.24" height="0.24" fill="#4806f6"/>
<rect x="3.47" y="4.27" width="0.24" height="0.24" fill="#4e06f6"/>
<rect x="3.67" y="4.27" width="0.24" height="0.24" fill="#5a06f6"/>
<rect x="3.87" y="4.27" width="0.24" height="0.24" fill="#6606f0"/>
<rect x="4.07" y="4.27" width="0.24" height="0.24" fill="#780cf0"/>
<rect x="4.27" y="4.27" width="0.24" height="0.24" fill="#900cea"/>
<rect x="4.47" y="4.27" width="0.24" height="0.24" fill="#ae18d8"/>
<rect x="4.67" y="4.27" width="0.24" height="0.24" fill="#d836ba"/>
<rect x="4.87" y="4.27" width="0.24" height="0.24" fill="#fc6696"/>
<rect x="5.07" y="4.27" width="0.24" height="0.24" fill="#fc787e"/>
<rect x="5.27" y="4.27" width="0.24" height="0.24" fill="#fc6096"/>
<rect x="5.47" y="4.27" width="0.24" height="0.24" fill="#cc30c0"/>
<rect x="5.67" y="4.27" width="0.24" height="0.24" fill="#a212de"/>
<rect x="5.87" y="4.27" width="0.24" height="0.24" fill="#840cf0"/>
<rect x="6.06" y="4.27" width="0.24" height="0.24" fill="#6606f0"/>
<rect x="6.26" y="4.27" width="0.24" height="0.24" fill="#4206f6"/>
<rect x="6.46" y="4.27" width="0.24" height="0.24" fill="#1e00fc"/>
<rect x="6.66" y="4.27" width="0.24" height="0.24" fill="#0c00e4"/>
<rect x="6.86" y="4.27" width="0.24" height="0.24" fill="#0000cc"/>
<rect x="7.06" y="4.27" width="0.24" height="0.24" fill="#0000a8"/>
<rect x="7.26" y="4.27" width="0.24" height="0.24" fill="#000084"/>
<rect x="7.46" y="4.27" width="0.24" height="0.24" fill="#00005a"/>
<rect x="7.66" y="4.27" width="0.24" height="0.24" fill="#00002a"/>
<rect x="7.86" y="4.27" width="0.24" height="0.24" fill="#00000c"/>
<rect x="-8.1" y="4.47" width="0.24" height="0.24" fill="#00000c"/>
<rect x="-7.9" y="4.47" width="0.24" height="0.24" fill="#00002a"/>
<rect x="-7.7" y="4.47" width="0.24" height="0.24" fill="#000054"/>
<rect x="-7.5" y="4.47" width="0.24" height="0.24" fill="#00007e"/>
<rect x="-7.3" y="4.47" width="0.24" height="0.24" fill="#0000a2"/>
<rect x="-7.1" y="4.47" width="0.24" height="0.24" fill="#0000c0"/>
<rect x="-6.9" y="4.47" width="0.24" height="0.24" fill="#0600de"/>
<rect x="-6.7" y="4.47" width="0.24" height="0.24" fill="#1800f0"/>
<rect x="-6.5" y="4.47" width="0.24" height="0.24" fill="#3000fc"/>
<rect x="-6.3" y="4.47" width="0.24" height="0.24" fill="#5406f6"/>
<rect x="-6.1" y="4.47" width="0.24" height="0.24" fill="#720cf0"/>
<rect x="-5.91" y="4.47" width="0.24" height="0.24" fill="#900cea"/>
<rect x="-5.71" y="4.47" width="0.24" height="0.24" fill="#a818d8"/>
<rect x="-5.51" y="4.47" width="0.24" height="0.24" fill="#c624c6"/>
<rect x="-5.31" y="4.47" width="0.24" height="0.24" fill="#d836ba"/>
<rect x="-5.11" y="4.47" width="0.24" height="0.24" fill="#cc2ac6"/>
<rect x="-4.91" y="4.47" width="0.24" height="0.24" fill="#ae18d8"/>
<rect x="-4.71" y="4.47" width="0.24" height="0.24" fill="#9612ea"/>
<rect x="-4.51" y="4.47" width="0.24" height="0.24" fill="#7e0cf0"/>
<rect x="-4.31" y="4.47" width="0.24" height="0.24" fill="#6c06f0"/>
<rect x="-4.11" y="4.47" width="0.24" height="0.24" fill="#6006f6"/>
<rect x="-3.91" y="4.47" width="0.24" height="0.24" fill="#5406f6"/>
<rect x="-3.71" y="4.47" width="0.24" height="0.24" fill="#4806f6"/>
<rect x="-3.51" y="4.47" width="0.24" height="0.24" fill="#3c00f6"/>
<rect x="-3.31" y="4.47" width="0.24" height="0.24" fill="#3600fc"/>
<rect x="-3.11" y="4.47" width="0.24" height="0.24" fill="#3000fc"/>
<rect x="-2.91" y="4.47" width="0.24" height="0.24" fill="#2a00fc"/>
<rect x="-2.71" y="4.47" width="0.24" height="0.24" fill="#2400fc"/>
<rect x="-2.51" y="4.47" width="0.64" height="0.24" fill="#1e00fc"/>
<rect x="-1.92" y="4.47" width="3.83" height="0.24" fill="#1800f6"/>
<rect x="1.88" y="4.47" width="0.64" height="0.24" fill="#1e00fc"/>
<rect x="2.47" y="4.47" width="0.24" height="0.24" fill="#2400fc"/>
<rect x="2.67" y="4.47" width="0.24" height="0.24" fill="#2a00fc"/>
<rect x="2.87" y="4.47" width="0.24" height="0.24" fill="#3000fc"/>
<rect x="3.07" y="4.47" width="0.24" height="0.24" fill="#3600fc"/>
<rect x="3.27" y="4.47" width="0.24" height="0.24" fill="#3c00f6"/>
<rect x="3.47" y="4.47" width="0.24" height="0.24" fill="#4806f6"/>
<rect x="3.67" y="4.47" width="0.24" height="0.24" fill="#5406f6"/>
<rect x="3.87" y="4.47" width="0.24" height="0.24" fill="#6006f6"/>
<rect x="4.07" y="4.47" width="0.24" height="0.24" fill="#6c06f0"/>
<rect x="4.27" y="4.47" width="0.24" height="0.24" fill="#7e0cf0"/>
<rect x="4.47" y="4.47" width="0.24" height="0.24" fill="#9612ea"/>
<rect x="4.67" y="4.47" width="0.24" height="0.24" fill="#ae18d8"/>
<rect x="4.87" y="4.47" width="0.24" height="0.24" fill="#cc2ac6"/>
<rect x="5.07" y="4.47" width="0.24" height="0.24" fill="#d836ba"/>
<rect x="5.27" y="4.47" width="0.24" height="0.24" fill="#c624c6"/>
<rect x="5.47" y="4.47" width="0.24" height="0.24" fill="#a818d8"/>
<rect x="5.67" y="4.47" width="0.24" height="0.24" fill="#900cea"/>
<rect x="5.87" y="4.47" width="0.24" height="0.24" fill="#720cf0"/>
<rect x="6.06" y="4.47" width="0.24" height="0.24" fill="#5406f6"/>
<rect x="6.26" y="4.47" width="0.24" height="0.24" fill="#3000fc"/>
<rect x="6.46" y="4.47" width="0.24" height="0.24" fill="#1800f0"/>
<rect x="6.66" y="4.47" width="0.24" height="0.24" fill="#0600de"/>
<rect x="6.86" y="4.47" width="0.24" height="0.24" fill="#0000c0"/>
<rect x="7.06" y="4.47" width="0.24" height="0.24" fill="#0000a2"/>
<rect x="7.26" y="4.47" width="0.24" height="0.24" fill="#00007e"/>
<rect x="7.46" y="4.47" width="0.24" height="0.24" fill="#000054"/>
<rect x="7.66" y="4.47" width="0.24" height="0.24" fill="#00002a"/>
<rect x="7.86" y="4.47" width="0.24" height="0.24" fill="#00000c"/>
<rect x="-8.1" y="4.67" width="0.24" height="0.24" fill="#000012"/>
<rect x="-7.9" y="4.67" width="0.24" height="0.24" fill="#00002a"/>
<rect x="-7.7" y="4.67" width="0.24" height="0.24" fill="#00004e"/>
<rect x="-7.5" y="4.67" width="0.24" height="0.24" fill="#000072"/>
<rect x="-7.3" y="4.67" width="0.24" height="0.24" fill="#000096"/>
<rect x="-7.1" y="4.67" width="0.24" height="0.24" fill="#0000b4"/>
<rect x="-6.9" y="4.67" width="0.24" height="0.24" fill="#0000d2"/>
<rect x="-6.7" y="4.67" width="0.24" height="0.24" fill="#0c00e4"/>
<rect x="-6.5" y="4.67" width="0.24" height="0.24" fill="#1e00fc"/>
<rect x="-6.3" y="4.67" width="0.24" height="0.24" fill="#3c00f6"/>
<rect x="-6.1" y="4.67" width="0.24" height="0.24" fill="#5a06f6"/>
<rect x="-5.91" y="4.67" width="0.24" height="0.24" fill="#720cf0"/>
<rect x="-5.71" y="4.67" width="0.24" height="0.24" fill="#8a0cf0"/>
<rect x="-5.51" y="4.67" width="0.24" height="0.24" fill="#9c12e4"/>
<rect x="-5.31" y="4.67" width="0.24" height="0.24" fill="#a212de"/>
<rect x="-5.11" y="4.67" width="0.24" height="0.24" fill="#9c12e4"/>
<rect x="-4.91" y="4.67" width="0.24" height="0.24" fill="#900cea"/>
<rect x="-4.71" y="4.67" width="0.24" height="0.24" fill="#7e0cf0"/>
<rect x="-4.51" y="4.67" width="0.24" height="0.24" fill="#6c06f0"/>
<rect x="-4.31" y="4.67" width="0.24" height="0.24" fill="#5a06f6"/>
<rect x="-4.11" y="4.67" width="0.24" height="0.24" fill="#5406f6"/>
<rect x="-3.91" y="4.67" width="0.24" height="0.24" fill="#4806f6"/>
<rect x="-3.71" y="4.67" width="0.24" height="0.24" fill="#3c00f6"/>
<rect x="-3.51" y="4.67" width="0.24" height="0.24" fill="#3600fc"/>
<rect x="-3.31" y="4.67" width="0.24" height="0.24" fill="#3000fc"/>
<rect x="-3.11" y="4.67" width="0.24" height="0.24" fill="#2a00fc"/>
<rect x="-2.91" y="4.67" width="0.24" height="0.24" fill="#2400fc"/>
<rect x="-2.71" y="4.67" width="0.44" height="0.24" fill="#1e00fc"/>
<rect x="-2.31" y="4.67" width="1.04" height="0.24" fill="#1800f6"/>
<rect x="-1.32" y="4.67" width="2.63" height="0.24" fill="#1800f0"/>
<rect x="1.28" y="4.67" width="1.04" height="0.24" fill="#1800f6"/>
<rect x="2.27" y="4.67" width="0.44" height="0.24" fill="#1e00fc"/>
<rect x="2.67" y="4.67" width="0.24" height="0.24" fill="#2400fc"/>
<rect x="2.87" y="4.67" width="0.24" height="0.24" fill="#2a00fc"/>
<rect x="3.07" y="4.67" width="0.24" height="0.24" fill="#3000fc"/>
<rect x="3.27" y="4.67" width="0.24" height="0.24" fill="#3600fc"/>
<rect x="3.47" y="4.67" width="0.24" height="0.24" fill="#3c00f6"/>
<rect x="3.67" y="4.67" width="0.24" height="0.24" fill="#4806f6"/>
<rect x="3.87" y="4.67" width="0.24" height="0.24" fill="#5406f6"/>
<rect x="4.07" y="4.67" width="0.24" height="0.24" fill="#5a06f6"/>
<rect x="4.27" y="4.67" width="0.24" height="0.24" fill="#6c06f0"/>
<rect x="4.47" y="4.67" width="0.24" height="0.24" fill="#7e0cf0"/>
<rect x="4.67" y="4.67" width="0.24" height="0.24" fill="#900cea"/>
<rect x="4.87" y="4.67" width="0.24" height="0.24" fill="#9c12e4"/>
<rect x="5.07" y="4.67" width="0.24" height="0.24" fill="#a212de"/>
<rect x="5.27" y="4.67" width="0.24" height="0.24" fill="#9c12e4"/>
<rect x="5.47" y="4.67" width="0.24" height="0.24" fill="#8a0cf0"/>
<rect x="5.67" y="4.67" width="0.24" height="0.24" fill="#720cf0"/>
<rect x="5.87" y="4.67" width="0.24" height="0.24" fill="#5a06f6"/>
<rect x="6.06" y="4.67" width="0.24" height="0.24" fill="#3c00f6"/>
<rect x="6.26" y="4.67" width="0.24" height="0.24" fill="#1e00fc"/>
<rect x="6.46" y="4.67" width="0.24" height="0.24" fill="#0c00e4"/>
<rect x="6.66" y="4.67" width="0.24" height="0.24" fill="#0000d2"/>
<rect x="6.86" y="4.67" width="0.24" height="0.24" fill="#0000b4"/>
<rect x="7.06" y="4.67" width="0.24" height="0.24" fill="#000096"/>
<rect x="7.26" y="4.67" width="0.24" height="0.24" fill="#000072"/>
<rect x="7.46" y="4.67" width="0.24" height="0.24" fill="#00004e"/>
<rect x="7.66" y="4.67" width="0.24" height="0.24" fill="#00002a"/>
<rect x="7.86" y="4.67" width="0.24" height="0.24" fill="#000012"/>
<rect x="-8.1" y="4.87" width="0.24" height="0.24" fill="#000012"/>
<rect x="-7.9" y="4.87" width="0.24" height="0.24" fill="#00002a"/>
<rect x="-7.7" y="4.87" width="0.24" height="0.24" fill="#000048"/>
<rect x="-7.5" y="4.87" width="0.24" height="0.24" fill="#00006c"/>
<rect x="-7.3" y="4.87" width="0.24" height="0.24" fill="#00008a"/>
<rect x="-7.1" y="4.87" width="0.24" height="0.24" fill="#0000a8"/>
<rect x="-6.9" y="4.87" width="0.24" height="0.24" fill="#0000c6"/>
<rect x="-6.7" y="4.87" width="0.24" height="0.24" fill="#0600de"/>
<rect x="-6.5" y="4.87" width="0.24" height="0.24" fill="#1200f0"/>
<rect x="-6.3" y="4.87" width="0.24" height="0.24" fill="#2400fc"/>
<rect x="-6.1" y="4.87" width="0.24" height="0.24" fill="#4806f6"/>
<rect x="-5.91" y="4.87" width="0.24" height="0.24" fill="#5a06f6"/>
<rect x="-5.71" y="4.87" width="0.24" height="0.24" fill="#6606f0"/>
<rect x="-5.51" y="4.87" width="0.24" height="0.24" fill="#720cf0"/>
<rect x="-5.31" y="4.87" width="0.44" height="0.24" fill="#780cf0"/>
<rect x="-4.91" y="4.87" width="0.24" height="0.24" fill="#6c0cf0"/>
<rect x="-4.71" y="4.87" width="0.24" height="0.24" fill="#6006f6"/>
<rect x="-4.51" y="4.87" width="0.24" height="0.24" fill="#5a06f6"/>
<rect x="-4.31" y="4.87" width="0.24" height="0.24" fill="#4e06f6"/>
<rect x="-4.11" y="4.87" width="0.24" height="0.24" fill="#4806f6"/>
<rect x="-3.91" y="4.87" width="0.24" height="0.24" fill="#3c00f6"/>
<rect x="-3.71" y="4.87" width="0.24" height="0.24" fill="#3600fc"/>
<rect x="-3.51" y="4.87" width="0.24" height="0.24" fill="#3000fc"/>
<rect x="-3.31" y="4.87" width="0.24" height="0.24" fill="#2400fc"/>
<rect x="-3.11" y="4.87" width="0.44" height="0.24" fill="#1e00fc"/>
<rect x="-2.71" y="4.87" width="0.64" height="0.24" fill="#1800f6"/>
<rect x="-2.11" y="4.87" width="0.84" height="0.24" fill="#1800f0"/>
<rect x="-1.32" y="4.87" width="2.63" height="0.24" fill="#1200f0"/>
<rect x="1.28" y="4.87" width="0.84" height="0.24" fill="#1800f0"/>
<rect x="2.07" y="4.87" width="0.64" height="0.24" fill="#1800f6"/>
<rect x="2.67" y="4.87" width="0.44" height="0.24" fill="#1e00fc"/>
<rect x="3.07" y="4.87" width="0.24" height="0.24" fill="#2400fc"/>
<rect x="3.27" y="4.87" width="0.24" height="0.24" fill="#3000fc"/>
<rect x="3.47" y="4.87" width="0.24" height="0.24" fill="#3600fc"/>
<rect x="3.67" y="4.87" width="0.24" height="0.24" fill="#3c00f6"/>
<rect x="3.87" y="4.87" width="0.24" height="0.24" fill="#4806f6"/>
<rect x="4.07" y="4.87" width="0.24" height="0.24" fill="#4e06f6"/>
<rect x="4.27" y="4.87" width="0.24" height="0.24" fill="#5a06f6"/>
<rect x="4.47" y="4.87" width="0.24" height="0.24" fill="#6006f6"/>
<rect x="4.67" y="4.87" width="0.24" height="0.24" fill="#6c0cf0"/>
<rect x="4.87" y="4.87" width="0.44" height="0.24" fill="#780cf0"/>
<rect x="5.27" y="4.87" width="0.24" height="0.24" fill="#720cf0"/>
<rect x="5.47" y="4.87" width="0.24" height="0.24" fill="#6606f0"/>
<rect x="5.67" y="4.87" width="0.24" height="0.24" fill="#5a06f6"/>
<rect x="5.87" y="4.87" width="0.24" height="0.24" fill="#4806f6"/>
<rect x="6.06" y="4.87" width="0.24" height="0.24" fill="#2400fc"/>
<rect x="6.26" y="4.87" width="0.24" height="0.24" fill="#1200f0"/>
<rect x="6.46" y="4.87" width="0.24" height="0.24" fill="#0600de"/>
<rect x="6.66" y="4.87" width="0.24" height="0.24" fill="#0000c6"/>
<rect x="6.86" y="4.87" width="0.24" height="0.24" fill="#0000a8"/>
<rect x="7.06" y="4.87" width="0.24" height="0.24" fill="#00008a"/>
<rect x="7.26" y="4.87" width="0.24" height="0.24" fill="#00006c"/>
<rect x="7.46" y="4.87" width="0.24" height="0.24" fill="#000048"/>
<rect x="7.66" y="4.87" width="0.24" height="0.24" fill="#00002a"/>
<rect x="7.86" y="4.87" width="0.24" height="0.24" fill="#000012"/>
<rect x="-8.1" y="5.07" width="0.24" height="0.24" fill="#000012"/>
<rect x="-7.9" y="5.07" width="0.24" height="0.24" fill="#000024"/>
<rect x="-7.7" y="5.07" width="0.24" height="0.24" fill="#000042"/>
<rect x="-7.5" y="5.07" width="0.24" height="0.24" fill="#000066"/>
<rect x="-7.3" y="5.07" width="0.24" height="0.24" fill="#000084"/>
<rect x="-7.1" y="5.07" width="0.24" height="0.24" fill="#0000a2"/>
<rect x="-6.9" y="5.07" width="0.24" height="0.24" fill="#0000ba"/>
<rect x="-6.7" y="5.07" width="0.24" height="0.24" fill="#0000d2"/>
<rect x="-6.5" y="5.07" width="0.24" height="0.24" fill="#0c00e4"/>
<rect x="-6.3" y="5.07" width="0.24" height="0.24" fill="#1800f6"/>
<rect x="-6.1" y="5.07" width="0.24" height="0.24" fill="#2a00fc"/>
<rect x="-5.91" y="5.07" width="0.24" height="0.24" fill="#4206f6"/>
<rect x="-5.71" y="5.07" width="0.24" height="0.24" fill="#4e06f6"/>
<rect x="-5.51" y="5.07" width="0.24" height="0.24" fill="#5406f6"/>
<rect x="-5.31" y="5.07" width="0.44" height="0.24" fill="#5a06f6"/>
<rect x="-4.91" y="5.07" width="0.24" height="0.24" fill="#5406f6"/>
<rect x="-4.71" y="5.07" width="0.24" height="0.24" fill="#4e06f6"/>
<rect x="-4.51" y="5.07" width="0.24" height="0.24" fill="#4806f6"/>
<rect x="-4.31" y="5.07" width="0.24" height="0.24" fill="#4200f6"/>
<rect x="-4.11" y="5.07" width="0.24" height="0.24" fill="#3600f6"/>
<rect x="-3.91" y="5.07" width="0.24" height="0.24" fill="#3000fc"/>
<rect x="-3.71" y="5.07" width="0.24" height="0.24" fill="#2a00fc"/>
<rect x="-3.51" y="5.07" width="0.24" height="0.24" fill="#2400fc"/>
<rect x="-3.31" y="5.07" width="0.44" height="0.24" fill="#1e00fc"/>
<rect x="-2.91" y="5.07" width="0.44" height="0.24" fill="#1800f6"/>
<rect x="-2.51" y="5.07" width="0.44" height="0.24" fill="#1800f0"/>
<rect x="-2.11" y="5.07" width="0.64" height="0.24" fill="#1200f0"/>
<rect x="-1.52" y="5.07" width="3.03" height="0.24" fill="#1200ea"/>
<rect x="1.48" y="5.07" width="0.64" height="0.24" fill="#1200f0"/>
<rect x="2.07" y="5.07" width="0.44" height="0.24" fill="#1800f0"/>
<rect x="2.47" y="5.07" width="0.44" height="0.24" fill="#1800f6"/>
<rect x="2.87" y="5.07" width="0.44" height="0.24" fill="#1e00fc"/>
<rect x="3.27" y="5.07" width="0.24" height="0.24" fill="#2400fc"/>
<rect x="3.47" y="5.07" width="0.24" height="0.24" fill="#2a00fc"/>
<rect x="3.67" y="5.07" width="0.24" height="0.24" fill="#3000fc"/>
<rect x="3.87" y="5.07" width="0.24" height="0.24" fill="#3600f6"/>
<rect x="4.07" y="5.07" width="0.24" height="0.24" fill="#4200f6"/>
<rect x="4.27" y="5.07" width="0.24" height="0.24" fill="#4806f6"/>
<rect x="4.47" y="5.07" width="0.24" height="0.24" fill="#4e06f6"/>
<rect x="4.67" y="5.07" width="0.24" height="0.24" fill="#5406f6"/>
<rect x="4.87" y="5.07" width="0.44" height="0.24" fill="#5a06f6"/>
<rect x="5.27" y="5.07" width="0.24" height="0.24" fill="#5406f6"/>
<rect x="5.47" y="5.07" width="0.24" height="0.24" fill="#4e06f6"/>
<rect x="5.67" y="5.07" width="0.24" height="0.24" fill="#4206f6"/>
<rect x="5.87" y="5.07" width="0.24" height="0.24" fill="#2a00fc"/>
<rect x="6.06" y="5.07" width="0.24" height="0.24" fill="#1800f6"/>
<rect x="6.26" y="5.07" width="0.24" height="0.24" fill="#0c00e4"/>
<rect x="6.46" y="5.07" width="0.24" height="0.24" fill="#0000d2"/>
<rect x="6.66" y="5.07" width="0.24" height="0.24" fill="#0000ba"/>
<rect x="6.86" y="5.07" width="0.24" height="0.24" fill="#0000a2"/>
<rect x="7.06" y="5.07" width="0.24" height="0.24" fill="#000084"/>
<rect x="7.26" y="5.07" width="0.24" height="0.24" fill="#000066"/>
<rect x="7.46" y="5.07" width="0.24" height="0.24" fill="#000042"/>
<rect x="7.66" y="5.07" width="0.24" height="0.24" fill="#000024"/>
<rect x="7.86" y="5.07" width="0.24" height="0.24" fill="#000012"/>
<rect x="-8.1" y="5.27" width="0.24" height="0.24" fill="#000012"/>
<rect x="-7.9" y="5.27" width="0.24" height="0.24" fill="#000024"/>
<rect x="-7.7" y="5.27" width="0.24" height="0.24" fill="#00003c"/>
<rect x="-7.5" y="5.27" width="0.24" height="0.24" fill="#000060"/>
<rect x="-7.3" y="5.27" width="0.24" height="0.24" fill="#00007e"/>
<rect x="-7.1" y="5.27" width="0.24" height="0.24" fill="#000096"/>
<rect x="-6.9" y="5.27" width="0.24" height="0.24" fill="#0000ae"/>
<rect x="-6.7" y="5.27" width="0.24" height="0.24" fill="#0000c6"/>
<rect x="-6.5" y="5.27" width="0.24" height="0.24" fill="#0600d8"/>
<rect x="-6.3" y="5.27" width="0.24" height="0.24" fill="#1200ea"/>
<rect x="-6.1" y="5.27" width="0.24" height="0.24" fill="#1800f6"/>
<rect x="-5.91" y="5.27" width="0.24" height="0.24" fill="#3000fc"/>
<rect x="-5.71" y="5.27" width="0.44" height="0.24" fill="#3c00f6"/>
<rect x="-5.31" y="5.27" width="0.64" height="0.24" fill="#4200f6"/>
<rect x="-4.71" y="5.27" width="0.24" height="0.24" fill="#3c00f6"/>
<rect x="-4.51" y="5.27" width="0.24" height="0.24" fill="#3600fc"/>
<rect x="-4.31" y="5.27" width="0.24" height="0.24" fill="#3000fc"/>
<rect x="-4.11" y="5.27" width="0.24" height="0.24" fill="#2a00fc"/>
<rect x="-3.91" y="5.27" width="0.24" height="0.24" fill="#2400fc"/>
<rect x="-3.71" y="5.27" width="0.44" height="0.24" fill="#1e00fc"/>
<rect x="-3.31" y="5.27" width="0.44" height="0.24" fill="#1800f6"/>
<rect x="-2.91" y="5.27" width="0.24" height="0.24" fill="#1800f0"/>
<rect x="-2.71" y="5.27" width="0.44" height="0.24" fill="#1200f0"/>
<rect x="-2.31" y="5.27" width="4.63" height="0.24" fill="#1200ea"/>
<rect x="2.27" y="5.27" width="0.44" height="0.24" fill="#1200f0"/>
<rect x="2.67" y="5.27" width="0.24" height="0.24" fill="#1800f0"/>
<rect x="2.87" y="5.27" width="0.44" height="0.24" fill="#1800f6"/>
<rect x="3.27" y="5.27" width="0.44" height="0.24" fill="#1e00fc"/>
<rect x="3.67" y="5.27" width="0.24" height="0.24" fill="#2400fc"/>
<rect x="3.87" y="5.27" width="0.24" height="0.24" fill="#2a00fc"/>
<rect x="4.07" y="5.27" width="0.24" height="0.24" fill="#3000fc"/>
<rect x="4.27" y="5.27" width="0.24" height="0.24" fill="#3600fc"/>
<rect x="4.47" y="5.27" width="0.24" height="0.24" fill="#3c00f6"/>
<rect x="4.67" y="5.27" width="0.64" height="0.24" fill="#4200f6"/>
<rect x="5.27" y="5.27" width="0.44" height="0.24" fill="#3c00f6"/>
<rect x="5.67" y="5.27" width="0.24" height="0.24" fill="#3000fc"/>
<rect x="5.87" y="5.27" width="0.24" height="0.24" fill="#1800f6"/>
<rect x="6.06" y="5.27" width="0.24" height="0.24" fill="#1200ea"/>
<rect x="6.26" y="5.27" width="0.24" height="0.24" fill="#0600d8"/>
<rect x="6.46" y="5.27" width="0.24" height="0.24" fill="#0000c6"/>
<rect x="6.66" y="5.27" width="0.24" height="0.24" fill="#0000ae"/>
<rect x="6.86" y="5.27" width="0.24" height="0.24" fill="#000096"/>
<rect x="7.06" y="5.27" width="0.24" height="0.24" fill="#00007e"/>
<rect x="7.26" y="5.27" width="0.24" height="0.24" fill="#000060"/>
<rect x="7.46" y="5.27" width="0.24" height="0.24" fill="#00003c"/>
<rect x="7.66" y="5.27" width="0.24" height="0.24" fill="#000024"/>
<rect x="7.86" y="5.27" width="0.24" height="0.24" fill="#000012"/>
<rect x="-8.1" y="5.47" width="0.24" height="0.24" fill="#000012"/>
<rect x="-7.9" y="5.47" width="0.24" height="0.24" fill="#000024"/>
<rect x="-7.7" y="5.47" width="0.24" height="0.24" fill="#00003c"/>
<rect x="-7.5" y="5.47" width="0.24" height="0.24" fill="#000054"/>
<rect x="-7.3" y="5.47" width="0.24" height="0.24" fill="#000072"/>
<rect x="-7.1" y="5.47" width="0.24" height="0.24" fill="#00008a"/>
<rect x="-6.9" y="5.47" width="0.24" height="0.24" fill="#0000a2"/>
<rect x="-6.7" y="5.47" width="0.24" height="0.24" fill="#0000ba"/>
<rect x="-6.5" y="5.47" width="0.24" height="0.24" fill="#0000d2"/>
<rect x="-6.3" y="5.47" width="0.24" height="0.24" fill="#0600de"/>
<rect x="-6.1" y="5.47" width="0.24" height="0.24" fill="#1200ea"/>
<rect x="-5.91" y="5.47" width="0.24" height="0.24" fill="#1800f6"/>
<rect x="-5.71" y="5.47" width="0.24" height="0.24" fill="#2a00fc"/>
<rect x="-5.51" y="5.47" width="0.84" height="0.24" fill="#3000fc"/>
<rect x="-4.71" y="5.47" width="0.44" height="0.24" fill="#2a00fc"/>
<rect x="-4.31" y="5.47" width="0.24" height="0.24" fill="#2400fc"/>
<rect x="-4.11" y="5.47" width="0.44" height="0.24" fill="#1e00fc"/>
<rect x="-3.71" y="5.47" width="0.44" height="0.24" fill="#1800f6"/>
<rect x="-3.31" y="5.47" width="0.24" height="0.24" fill="#1800f0"/>
<rect x="-3.11" y="5.47" width="0.44" height="0.24" fill="#1200f0"/>
<rect x="-2.71" y="5.47" width="1.04" height="0.24" fill="#1200ea"/>
<rect x="-1.72" y="5.47" width="0.24" height="0.24" fill="#0c00ea"/>
<rect x="-1.52" y="5.47" width="3.03" height="0.24" fill="#0c00e4"/>
<rect x="1.48" y="5.47" width="0.24" height="0.24" fill="#0c00ea"/>
<rect x="1.68" y="5.47" width="1.04" height="0.24" fill="#1200ea"/>
<rect x="2.67" y="5.47" width="0.44" height="0.24" fill="#1200f0"/>
<rect x="3.07" y="5.47" width="0.24" height="0.24" fill="#1800f0"/>
<rect x="3.27" y="5.47" width="0.44" height="0.24" fill="#1800f6"/>
<rect x="3.67" y="5.47" width="0.44" height="0.24" fill="#1e00fc"/>
<rect x="4.07" y="5.47" width="0.24" height="0.24" fill="#2400fc"/>
<rect x="4.27" y="5.47" width="0.44" height="0.24" fill="#2a00fc"/>
<rect x="4.67" y="5.47" width="0.84" height="0.24" fill="#3000fc"/>
<rect x="5.47" y="5.47" width="0.24" height="0.24" fill="#2a00fc"/>
<rect x="5.67" y="5.47" width="0.24" height="0.24" fill="#1800f6"/>
<rect x="5.87" y="5.47" width="0.24" height="0.24" fill="#1200ea"/>
<rect x="6.06" y="5.47" width="0.24" height="0.24" fill="#0600de"/>
<rect x="6.26" y="5.47" width="0.24" height="0.24" fill="#0000d2"/>
<rect x="6.46" y="5.47" width="0.24" height="0.24" fill="#0000ba"/>
<rect x="6.66" y="5.47" width="0.24" height="0.24" fill="#0000a2"/>
<rect x="6.86" y="5.47" width="0.24" height="0.24" fill="#00008a"/>
<rect x="7.06" y="5.47" width="0.24" height="0.24" fill="#000072"/>
<rect x="7.26" y="5.47" width="0.24" height="0.24" fill="#000054"/>
<rect x="7.46" y="5.47" width="0.24" height="0.24" fill="#00003c"/>
<rect x="7.66" y="5.47" width="0.24" height="0.24" fill="#000024"/>
<rect x="7.86" y="5.47" width="0.24" height="0.24" fill="#000012"/>
<rect x="-8.1" y="5.66" width="0.24" height="0.24" fill="#000012"/>
<rect x="-7.9" y="5.66" width="0.24" height="0.24" fill="#000024"/>
<rect x="-7.7" y="5.66" width="0.24" height="0.24" fill="#000036"/>
<rect x="-7.5" y="5.66" width="0.24" height="0.24" fill="#00004e"/>
<rect x="-7.3" y="5.66" width="0.24" height="0.24" fill="#00006c"/>
<rect x="-7.1" y="5.66" width="0.24" height="0.24" fill="#000084"/>
<rect x="-6.9" y="5.66" width="0.24" height="0.24" fill="#000096"/>
<rect x="-6.7" y="5.66" width="0.24" height="0.24" fill="#0000ae"/>
<rect x="-6.5" y="5.66" width="0.24" height="0.24" fill="#0000c0"/>
<rect x="-6.3" y="5.66" width="0.24" height="0.24" fill="#0000d2"/>
<rect x="-6.1" y="5.66" width="0.24" height="0.24" fill="#0c00de"/>
<rect x="-5.91" y="5.66" width="0.24" height="0.24" fill="#1200ea"/>
<rect x="-5.71" y="5.66" width="0.24" height="0.24" fill="#1800f6"/>
<rect x="-5.51" y="5.66" width="1.44" height="0.24" fill="#1e00fc"/>
<rect x="-4.11" y="5.66" width="0.44" height="0.24" fill="#1800f6"/>
<rect x="-3.71" y="5.66" width="0.24" height="0.24" fill="#1800f0"/>
<rect x="-3.51" y="5.66" width="0.44" height="0.24" fill="#1200f0"/>
<rect x="-3.11" y="5.66" width="0.64" height="0.24" fill="#1200ea"/>
<rect x="-2.51" y="5.66" width="5.03" height="0.24" fill="#0c00e4"/>
<rect x="2.47" y="5.66" width="0.64" height="0.24" fill="#1200ea"/>
<rect x="3.07" y="5.66" width="0.44" height="0.24" fill="#1200f0"/>
<rect x="3.47" y="5.66" width="0.24" height="0.24" fill="#1800f0"/>
<rect x="3.67" y="5.66" width="0.44" height="0.24" fill="#1800f6"/>
<rect x="4.07" y="5.66" width="1.44" height="0.24" fill="#1e00fc"/>
<rect x="5.47" y="5.66" width="0.24" height="0.24" fill="#1800f6"/>
<rect x="5.67" y="5.66" width="0.24" height="0.24" fill="#1200ea"/>
<rect x="5.87" y="5.66" width="0.24" height="0.24" fill="#0c00de"/>
<rect x="6.06" y="5.66" width="0.24" height="0.24" fill="#0000d2"/>
<rect x="6.26" y="5.66" width="0.24" height="0.24" fill="#0000c0"/>
<rect x="6.46" y="5.66" width="0.24" height="0.24" fill="#0000ae"/>
<rect x="6.66" y="5.66" width="0.24" height="0.24" fill="#000096"/>
<rect x="6.86" y="5.66" width="0.24" height="0.24" fill="#000084"/>
<rect x="7.06" y="5.66" width="0.24" height="0.24" fill="#00006c"/>
<rect x="7.26" y="5.66" width="0.24" height="0.24" fill="#00004e"/>
<rect x="7.46" y="5.66" width="0.24" height="0.24" fill="#000036"/>
<rect x="7.66" y="5.66" width="0.24" height="0.24" fill="#000024"/>
<rect x="7.86" y="5.66" width="0.24" height="0.24" fill="#000012"/>
<rect x="-8.1" y="5.86" width="0.24" height="0.24" fill="#000012"/>
<rect x="-7.9" y="5.86" width="0.24" height="0.24" fill="#000024"/>
<rect x="-7.7" y="5.86" width="0.24" height="0.24" fill="#000030"/>
<rect x="-7.5" y="5.86" width="0.24" height="0.24" fill="#000048"/>
<rect x="-7.3" y="5.86" width="0.24" height="0.24" fill="#000060"/>
<rect x="-7.1" y="5.86" width="0.24" height="0.24" fill="#000078"/>
<rect x="-6.9" y="5.86" width="0.24" height="0.24" fill="#000090"/>
<rect x="-6.7" y="5.86" width="0.24" height="0.24" fill="#0000a2"/>
<rect x="-6.5" y="5.86" width="0.24" height="0.24" fill="#0000b4"/>
<rect x="-6.3" y="5.86" width="0.24" height="0.24" fill="#0000c6"/>
<rect x="-6.1" y="5.86" width="0.24" height="0.24" fill="#0000d8"/>
<rect x="-5.91" y="5.86" width="0.24" height="0.24" fill="#0c00de"/>
<rect x="-5.71" y="5.86" width="0.24" height="0.24" fill="#1200ea"/>
<rect x="-5.51" y="5.86" width="1.24" height="0.24" fill="#1800f6"/>
<rect x="-4.31" y="5.86" width="0.24" height="0.24" fill="#1800f0"/>
<rect x="-4.11" y="5.86" width="0.44" height="0.24" fill="#1200f0"/>
<rect x="-3.71" y="5.86" width="0.64" height="0.24" fill="#1200ea"/>
<rect x="-3.11" y="5.86" width="1.64" height="0.24" fill="#0c00e4"/>
<rect x="-1.52" y="5.86" width="3.03" height="0.24" fill="#0c00de"/>
<rect x="1.48" y="5.86" width="1.64" height="0.24" fill="#0c00e4"/>
<rect x="3.07" y="5.86" width="0.64" height="0.24" fill="#1200ea"/>
<rect x="3.67" y="5.86" width="0.44" height="0.24" fill="#1200f0"/>
<rect x="4.07" y="5.86" width="0.24" height="0.24" fill="#1800f0"/>
<rect x="4.27" y="5.86" width="1.24" height="0.24" fill="#1800f6"/>
<rect x="5.47" y="5.86" width="0.24" height="0.24" fill="#1200ea"/>
<rect x="5.67" y="5.86" width="0.24" height="0.24" fill="#0c00de"/>
<rect x="5.87" y="5.86" width="0.24" height="0.24" fill="#0000d8"/>
<rect x="6.06" y="5.86" width="0.24" height="0.24" fill="#0000c6"/>
<rect x="6.26" y="5.86" width="0.24" height="0.24" fill="#0000b4"/>
<rect x="6.46" y="5.86" width="0.24" height="0.24" fill="#0000a2"/>
<rect x="6.66" y="5.86" width="0.24" height="0.24" fill="#000090"/>
<rect x="6.86" y="5.86" width="0.24" height="0.24" fill="#000078"/>
<rect x="7.06" y="5.86" width="0.24" height="0.24" fill="#000060"/>
<rect x="7.26" y="5.86" width="0.24" height="0.24" fill="#000048"/>
<rect x="7.46" y="5.86" width="0.24" height="0.24" fill="#000030"/>
<rect x="7.66" y="5.86" width="0.24" height="0.24" fill="#000024"/>
<rect x="7.86" y="5.86" width="0.24" height="0.24" fill="#000012"/>
<rect x="-8.1" y="6.06" width="0.24" height="0.24" fill="#000012"/>
<rect x="-7.9" y="6.06" width="0.24" height="0.24" fill="#00001e"/>
<rect x="-7.7" y="6.06" width="0.24" height="0.24" fill="#00002a"/>
<rect x="-7.5" y="6.06" width="0.24" height="0.24" fill="#000042"/>
<rect x="-7.3" y="6.06" width="0.24" height="0.24" fill="#00005a"/>
<rect x="-7.1" y="6.06" width="0.24" height="0.24" fill="#000072"/>
<rect x="-6.9" y="6.06" width="0.24" height="0.24" fill="#000084"/>
<rect x="-6.7" y="6.06" width="0.24" height="0.24" fill="#000096"/>
<rect x="-6.5" y="6.06" width="0.24" height="0.24" fill="#0000a8"/>
<rect x="-6.3" y="6.06" width="0.24" height="0.24" fill="#0000ba"/>
<rect x="-6.1" y="6.06" width="0.24" height="0.24" fill="#0000cc"/>
<rect x="-5.91" y="6.06" width="0.24" height="0.24" fill="#0600d8"/>
<rect x="-5.71" y="6.06" width="0.24" height="0.24" fill="#0c00de"/>
<rect x="-5.51" y="6.06" width="0.24" height="0.24" fill="#1200ea"/>
<rect x="-5.31" y="6.06" width="0.84" height="0.24" fill="#1200f0"/>
<rect x="-4.51" y="6.06" width="0.84" height="0.24" fill="#1200ea"/>
<rect x="-3.71" y="6.06" width="1.04" height="0.24" fill="#0c00e4"/>
<rect x="-2.71" y="6.06" width="1.04" height="0.24" fill="#0c00de"/>
<rect x="-1.72" y="6.06" width="3.43" height="0.24" fill="#0600de"/>
<rect x="1.68" y="6.06" width="1.04" height="0.24" fill="#0c00de"/>
<rect x="2.67" y="6.06" width="1.04" height="0.24" fill="#0c00e4"/>
<rect x="3.67" y="6.06" width="0.84" height="0.24" fill="#1200ea"/>
<rect x="4.47" y="6.06" width="0.84" height="0.24" fill="#1200f0"/>
<rect x="5.27" y="6.06" width="0.24" height="0.24" fill="#1200ea"/>
<rect x="5.47" y="6.06" width="0.24" height="0.24" fill="#0c00de"/>
<rect x="5.67" y="6.06" width="0.24" height="0.24" fill="#0600d8"/>
<rect x="5.87" y="6.06" width="0.24" height="0.24" fill="#0000cc"/>
<rect x="6.06" y="6.06" width="0.24" height="0.24" fill="#0000ba"/>
<rect x="6.26" y="6.06" width="0.24" height="0.24" fill="#0000a8"/>
<rect x="6.46" y="6.06" width="0.24" height="0.24" fill="#000096"/>
<rect x="6.66" y="6.06" width="0.24" height="0.24" fill="#000084"/>
<rect x="6.86" y="6.06" width="0.24" height="0.24" fill="#000072"/>
<rect x="7.06" y="6.06" width="0.24" height="0.24" fill="#00005a"/>
<rect x="7.26" y="6.06" width="0.24" height="0.24" fill="#000042"/>
<rect x="7.46" y="6.06" width="0.24" height="0.24" fill="#00002a"/>
<rect x="7.66" y="6.06" width="0.24" height="0.24" fill="#00001e"/>
<rect x="7.86" y="6.06" width="0.24" height="0.24" fill="#000012"/>
<rect x="-8.1" y="6.26" width="0.24" height="0.24" fill="#000012"/>
<rect x="-7.9" y="6.26" width="0.24" height="0.24" fill="#00001e"/>
<rect x="-7.7" y="6.26" width="0.24" height="0.24" fill="#00002a"/>
<rect x="-7.5" y="6.26" width="0.24" height="0.24" fill="#00003c"/>
<rect x="-7.3" y="6.26" width="0.24" height="0.24" fill="#000054"/>
<rect x="-7.1" y="6.26" width="0.24" height="0.24" fill="#000066"/>
<rect x="-6.9" y="6.26" width="0.24" height="0.24" fill="#00007e"/>
<rect x="-6.7" y="6.26" width="0.24" height="0.24" fill="#00008a"/>
<rect x="-6.5" y="6.26" width="0.24" height="0.24" fill="#00009c"/>
<rect x="-6.3" y="6.26" width="0.24" height="0.24" fill="#0000ae"/>
<rect x="-6.1" y="6.26" width="0.24" height="0.24" fill="#0000ba"/>
<rect x="-5.91" y="6.26" width="0.24" height="0.24" fill="#0000cc"/>
<rect x="-5.71" y="6.26" width="0.24" height="0.24" fill="#0000d8"/>
<rect x="-5.51" y="6.26" width="0.24" height="0.24" fill="#0600de"/>
<rect x="-5.31" y="6.26" width="0.24" height="0.24" fill="#0c00e4"/>
<rect x="-5.11" y="6.26" width="0.44" height="0.24" fill="#1200ea"/>
<rect x="-4.71" y="6.26" width="0.24" height="0.24" fill="#0c00ea"/>
<rect x="-4.51" y="6.26" width="1.04" height="0.24" fill="#0c00e4"/>
<rect x="-3.51" y="6.26" width="0.64" height="0.24" fill="#0c00de"/>
<rect x="-2.91" y="6.26" width="2.23" height="0.24" fill="#0600de"/>
<rect x="-0.72" y="6.26" width="1.44" height="0.24" fill="#0600d8"/>
<rect x="0.68" y="6.26" width="2.23" height="0.24" fill="#0600de"/>
<rect x="2.87" y="6.26" width="0.64" height="0.24" fill="#0c00de"/>
<rect x="3.47" y="6.26" width="1.04" height="0.24" fill="#0c00e4"/>
<rect x="4.47" y="6.26" width="0.24" height="0.24" fill="#0c00ea"/>
<rect x="4.67" y="6.26" width="0.44" height="0.24" fill="#1200ea"/>
<rect x="5.07" y="6.26" width="0.24" height="0.24" fill="#0c00e4"/>
<rect x="5.27" y="6.26" width="0.24" height="0.24" fill="#0600de"/>
<rect x="5.47" y="6.26" width="0.24" height="0.24" fill="#0000d8"/>
<rect x="5.67" y="6.26" width="0.24" height="0.24" fill="#0000cc"/>
<rect x="5.87" y="6.26" width="0.24" height="0.24" fill="#0000ba"/>
<rect x="6.06" y="6.26" width="0.24" height="0.24" fill="#0000ae"/>
<rect x="6.26" y="6.26" width="0.24" height="0.24" fill="#00009c"/>
<rect x="6.46" y="6.26" width="0.24" height="0.24" fill="#00008a"/>
<rect x="6.66" y="6.26" width="0.24" height="0.24" fill="#00007e"/>
<rect x="6.86" y="6.26" width="0.24" height="0.24" fill="#000066"/>
<rect x="7.06" y="6.26" width="0.24" height="0.24" fill="#000054"/>
<rect x="7.26" y="6.26" width="0.24" height="0.24" fill="#00003c"/>
<rect x="7.46" y="6.26" width="0.24" height="0.24" fill="#00002a"/>
<rect x="7.66" y="6.26" width="0.24" height="0.24" fill="#00001e"/>
<rect x="7.86" y="6.26" width="0.24" height="0.24" fill="#000012"/>
<rect x="-8.1" y="6.46" width="0.24" height="0.24" fill="#000012"/>
<rect x="-7.9" y="6.46" width="0.24" height="0.24" fill="#00001e"/>
<rect x="-7.7" y="6.46" width="0.24" height="0.24" fill="#00002a"/>
<rect x="-7.5" y="6.46" width="0.24" height="0.24" fill="#00003c"/>
<rect x="-7.3" y="6.46" width="0.24" height="0.24" fill="#00004e"/>
<rect x="-7.1" y="6.46" width="0.24" height="0.24" fill="#000060"/>
<rect x="-6.9" y="6.46" width="0.24" height="0.24" fill="#000072"/>
<rect x="-6.7" y="6.46" width="0.24" height="0.24" fill="#000084"/>
<rect x="-6.5" y="6.46" width="0.24" height="0.24" fill="#000090"/>
<rect x="-6.3" y="6.46" width="0.24" height="0.24" fill="#0000a2"/>
<rect x="-6.1" y="6.46" width="0.24" height="0.24" fill="#0000ae"/>
<rect x="-5.91" y="6.46" width="0.24" height="0.24" fill="#0000c0"/>
<rect x="-5.71" y="6.46" width="0.24" height="0.24" fill="#0000cc"/>
<rect x="-5.51" y="6.46" width="0.24" height="0.24" fill="#0000d2"/>
<rect x="-5.31" y="6.46" width="0.24" height="0.24" fill="#0600de"/>
<rect x="-5.11" y="6.46" width="0.64" height="0.24" fill="#0c00e4"/>
<rect x="-4.51" y="6.46" width="0.64" height="0.24" fill="#0c00de"/>
<rect x="-3.91" y="6.46" width="1.04" height="0.24" fill="#0600de"/>
<rect x="-2.91" y="6.46" width="5.83" height="0.24" fill="#0600d8"/>
<rect x="2.87" y="6.46" width="1.04" height="0.24" fill="#0600de"/>
<rect x="3.87" y="6.46" width="0.64" height="0.24" fill="#0c00de"/>
<rect x="4.47" y="6.46" width="0.64" height="0.24" fill="#0c00e4"/>
<rect x="5.07" y="6.46" width="0.24" height="0.24" fill="#0600de"/>
<rect x="5.27" y="6.46" width="0.24" height="0.24" fill="#0000d2"/>
<rect x="5.47" y="6.46" width="0.24" height="0.24" fill="#0000cc"/>
<rect x="5.67" y="6.46" width="0.24" height="0.24" fill="#0000c0"/>
<rect x="5.87" y="6.46" width="0.24" height="0.24" fill="#0000ae"/>
<rect x="6.06" y="6.46" width="0.24" height="0.24" fill="#0000a2"/>
<rect x="6.26" y="6.46" width="0.24" height="0.24" fill="#000090"/>
<rect x="6.46" y="6.46" width="0.24" height="0.24" fill="#000084"/>
<rect x="6.66" y="6.46" width="0.24" height="0.24" fill="#000072"/>
<rect x="6.86" y="6.46" width="0.24" height="0.24" fill="#000060"/>
<rect x="7.06" y="6.46" width="0.24" height="0.24" fill="#00004e"/>
<rect x="7.26" y="6.46" width="0.24" height="0.24" fill="#00003c"/>
<rect x="7.46" y="6.46" width="0.24" height="0.24" fill="#00002a"/>
<rect x="7.66" y="6.46" width="0.24" height="0.24" fill="#00001e"/>
<rect x="7.86" y="6.46" width="0.24" height="0.24" fill="#000012"/>
<rect x="-8.1" y="6.66" width="0.24" height="0.24" fill="#000012"/>
<rect x="-7.9" y="6.66" width="0.24" height="0.24" fill="#00001e"/>
<rect x="-7.7" y="6.66" width="0.24" height="0.24" fill="#00002a"/>
<rect x="-7.5" y="6.66" width="0.24" height="0.24" fill="#000036"/>
<rect x="-7.3" y="6.66" width="0.24" height="0.24" fill="#000048"/>
<rect x="-7.1" y="6.66" width="0.24" height="0.24" fill="#00005a"/>
<rect x="-6.9" y="6.66" width="0.24" height="0.24" fill="#00006c"/>
<rect x="-6.7" y="6.66" width="0.24" height="0.24" fill="#00007e"/>
<rect x="-6.5" y="6.66" width="0.24" height="0.24" fill="#00008a"/>
<rect x="-6.3" y="6.66" width="0.24" height="0.24" fill="#000096"/>
<rect x="-6.1" y="6.66" width="0.24" height="0.24" fill="#0000a8"/>
<rect x="-5.91" y="6.66" width="0.24" height="0.24" fill="#0000b4"/>
<rect x="-5.71" y="6.66" width="0.24" height="0.24" fill="#0000c0"/>
<rect x="-5.51" y="6.66" width="0.24" height="0.24" fill="#0000cc"/>
<rect x="-5.31" y="6.66" width="0.24" height="0.24" fill="#0000d2"/>
<rect x="-5.11" y="6.66" width="0.24" height="0.24" fill="#0600d8"/>
<rect x="-4.91" y="6.66" width="0.84" height="0.24" fill="#0600de"/>
<rect x="-4.11" y="6.66" width="8.22" height="0.24" fill="#0600d8"/>
<rect x="4.07" y="6.66" width="0.84" height="0.24" fill="#0600de"/>
<rect x="4.87" y="6.66" width="0.24" height="0.24" fill="#0600d8"/>
<rect x="5.07" y="6.66" width="0.24" height="0.24" fill="#0000d2"/>
<rect x="5.27" y="6.66" width="0.24" height="0.24" fill="#0000cc"/>
<rect x="5.47" y="6.66" width="0.24" height="0.24" fill="#0000c0"/>
<rect x="5.67" y="6.66" width="0.24" height="0.24" fill="#0000b4"/>
<rect x="5.87" y="6.66" width="0.24" height="0.24" fill="#0000a8"/>
<rect x="6.06" y="6.66" width="0.24" height="0.24" fill="#000096"/>
<rect x="6.26" y="6.66" width="0.24" height="0.24" fill="#00008a"/>
<rect x="6.46" y="6.66" width="0.24" height="0.24" fill="#00007e"/>
<rect x="6.66" y="6.66" width="0.24" height="0.24" fill="#00006c"/>
<rect x="6.86" y="6.66" width="0.24" height="0.24" fill="#00005a"/>
<rect x="7.06" y="6.66" width="0.24" height="0.24" fill="#000048"/>
<rect x="7.26" y="6.66" width="0.24" height="0.24" fill="#000036"/>
<rect x="7.46" y="6.66" width="0.24" height="0.24" fill="#00002a"/>
<rect x="7.66" y="6.66" width="0.24" height="0.24" fill="#00001e"/>
<rect x="7.86" y="6.66" width="0.24" height="0.24" fill="#000012"/>
<rect x="-8.1" y="6.86" width="0.24" height="0.24" fill="#000012"/>
<rect x="-7.9" y="6.86" width="0.24" height="0.24" fill="#00001e"/>
<rect x="-7.7" y="6.86" width="0.24" height="0.24" fill="#000024"/>
<rect x="-7.5" y="6.86" width="0.24" height="0.24" fill="#000030"/>
<rect x="-7.3" y="6.86" width="0.24" height="0.24" fill="#000042"/>
<rect x="-7.1" y="6.86" width="0.24" height="0.24" fill="#000054"/>
<rect x="-6.9" y="6.86" width="0.24" height="0.24" fill="#000066"/>
<rect x="-6.7" y="6.86" width="0.24" height="0.24" fill="#000072"/>
<rect x="-6.5" y="6.86" width="0.24" height="0.24" fill="#000084"/>
<rect x="-6.3" y="6.86" width="0.24" height="0.24" fill="#000090"/>
<rect x="-6.1" y="6.86" width="0.24" height="0.24" fill="#00009c"/>
<rect x="-5.91" y="6.86" width="0.24" height="0.24" fill="#0000a8"/>
<rect x="-5.71" y="6.86" width="0.24" height="0.24" fill="#0000b4"/>
<rect x="-5.51" y="6.86" width="0.24" height="0.24" fill="#0000c0"/>
<rect x="-5.31" y="6.86" width="0.24" height="0.24" fill="#0000cc"/>
<rect x="-5.11" y="6.86" width="0.24" height="0.24" fill="#0000d2"/>
<rect x="-4.91" y="6.86" width="1.44" height="0.24" fill="#0600d8"/>
<rect x="-3.51" y="6.86" width="0.44" height="0.24" fill="#0000d8"/>
<rect x="-3.11" y="6.86" width="6.22" height="0.24" fill="#0000d2"/>
<rect x="3.07" y="6.86" width="0.44" height="0.24" fill="#0000d8"/>
<rect x="3.47" y="6.86" width="1.44" height="0.24" fill="#0600d8"/>
<rect x="4.87" y="6.86" width="0.24" height="0.24" fill="#0000d2"/>
<rect x="5.07" y="6.86" width="0.24" height="0.24" fill="#0000cc"/>
<rect x="5.27" y="6.86" width="0.24" height="0.24" fill="#0000c0"/>
<rect x="5.47" y="6.86" width="0.24" height="0.24" fill="#0000b4"/>
<rect x="5.67" y="6.86" width="0.24" height="0.24" fill="#0000a8"/>
<rect x="5.87" y="6.86" width="0.24" height="0.24" fill="#00009c"/>
<rect x="6.06" y="6.86" width="0.24" height="0.24" fill="#000090"/>
<rect x="6.26" y="6.86" width="0.24" height="0.24" fill="#000084"/>
<rect x="6.46" y="6.86" width="0.24" height="0.24" fill="#000072"/>
<rect x="6.66" y="6.86" width="0.24" height="0.24" fill="#000066"/>
<rect x="6.86" y="6.86" width="0.24" height="0.24" fill="#000054"/>
<rect x="7.06" y="6.86" width="0.24" height="0.24" fill="#000042"/>
<rect x="7.26" y="6.86" width="0.24" height="0.24" fill="#000030"/>
<rect x="7.46" y="6.86" width="0.24" height="0.24" fill="#000024"/>
<rect x="7.66" y="6.86" width="0.24" height="0.24" fill="#00001e"/>
<rect x="7.86" y="6.86" width="0.24" height="0.24" fill="#000012"/>
<rect x="-8.1" y="7.06" width="0.24" height="0.24" fill="#000012"/>
<rect x="-7.9" y="7.06" width="0.24" height="0.24" fill="#00001e"/>
<rect x="-7.7" y="7.06" width="0.24" height="0.24" fill="#000024"/>
<rect x="-7.5" y="7.06" width="0.24" height="0.24" fill="#00002a"/>
<rect x="-7.3" y="7.06" width="0.24" height="0.24" fill="#00003c"/>
<rect x="-7.1" y="7.06" width="0.24" height="0.24" fill="#00004e"/>
<rect x="-6.9" y="7.06" width="0.24" height="0.24" fill="#000060"/>
<rect x="-6.7" y="7.06" width="0.24" height="0.24" fill="#00006c"/>
<rect x="-6.5" y="7.06" width="0.24" height="0.24" fill="#000078"/>
<rect x="-6.3" y="7.06" width="0.24" height="0.24" fill="#000084"/>
<rect x="-6.1" y="7.06" width="0.24" height="0.24" fill="#000090"/>
<rect x="-5.91" y="7.06" width="0.24" height="0.24" fill="#00009c"/>
<rect x="-5.71" y="7.06" width="0.24" height="0.24" fill="#0000a8"/>
<rect x="-5.51" y="7.06" width="0.24" height="0.24" fill="#0000b4"/>
<rect x="-5.31" y="7.06" width="0.24" height="0.24" fill="#0000c0"/>
<rect x="-5.11" y="7.06" width="0.24" height="0.24" fill="#0000cc"/>
<rect x="-4.91" y="7.06" width="9.82" height="0.24" fill="#0000d2"/>
<rect x="4.87" y="7.06" width="0.24" height="0.24" fill="#0000cc"/>
<rect x="5.07" y="7.06" width="0.24" height="0.24" fill="#0000c0"/>
<rect x="5.27" y="7.06" width="0.24" height="0.24" fill="#0000b4"/>
<rect x="5.47" y="7.06" width="0.24" height="0.24" fill="#0000a8"/>
<rect x="5.67" y="7.06" width="0.24" height="0.24" fill="#00009c"/>
<rect x="5.87" y="7.06" width="0.24" height="0.24" fill="#000090"/>
<rect x="6.06" y="7.06" width="0.24" height="0.24" fill="#000084"/>
<rect x="6.26" y="7.06" width="0.24" height="0.24" fill="#000078"/>
<rect x="6.46" y="7.06" width="0.24" height="0.24" fill="#00006c"/>
<rect x="6.66" y="7.06" width="0.24" height="0.24" fill="#000060"/>
<rect x="6.86" y="7.06" width="0.24" height="0.24" fill="#00004e"/>
<rect x="7.06" y="7.06" width="0.24" height="0.24" fill="#00003c"/>
<rect x="7.26" y="7.06" width="0.24" height="0.24" fill="#00002a"/>
<rect x="7.46" y="7.06" width="0.24" height="0.24" fill="#000024"/>
<rect x="7.66" y="7.06" width="0.24" height="0.24" fill="#00001e"/>
<rect x="7.86" y="7.06" width="0.24" height="0.24" fill="#000012"/>
<rect x="-8.1" y="7.26" width="0.24" height="0.24" fill="#000012"/>
<rect x="-7.9" y="7.26" width="0.24" height="0.24" fill="#000018"/>
<rect x="-7.7" y="7.26" width="0.24" height="0.24" fill="#000024"/>
<rect x="-7.5" y="7.26" width="0.24" height="0.24" fill="#00002a"/>
<rect x="-7.3" y="7.26" width="0.24" height="0.24" fill="#000036"/>
<rect x="-7.1" y="7.26" width="0.24" height="0.24" fill="#000048"/>
<rect x="-6.9" y="7.26" width="0.24" height="0.24" fill="#000054"/>
<rect x="-6.7" y="7.26" width="0.24" height="0.24" fill="#000066"/>
<rect x="-6.5" y="7.26" width="0.24" height="0.24" fill="#000072"/>
<rect x="-6.3" y="7.26" width="0.24" height="0.24" fill="#00007e"/>
<rect x="-6.1" y="7.26" width="0.24" height="0.24" fill="#00008a"/>
<rect x="-5.91" y="7.26" width="0.24" height="0.24" fill="#000096"/>
<rect x="-5.71" y="7.26" width="0.24" height="0.24" fill="#0000a2"/>
<rect x="-5.51" y="7.26" width="0.24" height="0.24" fill="#0000a8"/>
<rect x="-5.31" y="7.26" width="0.24" height="0.24" fill="#0000b4"/>
<rect x="-5.11" y="7.26" width="0.24" height="0.24" fill="#0000c0"/>
<rect x="-4.91" y="7.26" width="0.24" height="0.24" fill="#0000c6"/>
<rect x="-4.71" y="7.26" width="1.64" height="0.24" fill="#0000d2"/>
<rect x="-3.11" y="7.26" width="6.22" height="0.24" fill="#0000cc"/>
<rect x="3.07" y="7.26" width="1.64" height="0.24" fill="#0000d2"/>
<rect x="4.67" y="7.26" width="0.24" height="0.24" fill="#0000c6"/>
<rect x="4.87" y="7.26" width="0.24" height="0.24" fill="#0000c0"/>
<rect x="5.07" y="7.26" width="0.24" height="0.24" fill="#0000b4"/>
<rect x="5.27" y="7.26" width="0.24" height="0.24" fill="#0000a8"/>
<rect x="5.47" y="7.26" width="0.24" height="0.24" fill="#0000a2"/>
<rect x="5.67" y="7.26" width="0.24" height="0.24" fill="#000096"/>
<rect x="5.87" y="7.26" width="0.24" height="0.24" fill="#00008a"/>
<rect x="6.06" y="7.26" width="0.24" height="0.24" fill="#00007e"/>
<rect x="6.26" y="7.26" width="0.24" height="0.24" fill="#000072"/>
<rect x="6.46" y="7.26" width="0.24" height="0.24" fill="#000066"/>
<rect x="6.66" y="7.26" width="0.24" height="0.24" fill="#000054"/>
<rect x="6.86" y="7.26" width="0.24" height="0.24" fill="#000048"/>
<rect x="7.06" y="7.26" width="0.24" height="0.24" fill="#000036"/>
<rect x="7.26" y="7.26" width="0.24" height="0.24" fill="#00002a"/>
<rect x="7.46" y="7.26" width="0.24" height="0.24" fill="#000024"/>
<rect x="7.66" y="7.26" width="0.24" height="0.24" fill="#000018"/>
<rect x="7.86" y="7.26" width="0.24" height="0.24" fill="#000012"/>
<rect x="-8.1" y="7.46" width="0.24" height="0.24" fill="#000012"/>
<rect x="-7.9" y="7.46" width="0.24" height="0.24" fill="#000018"/>
<rect x="-7.7" y="7.46" width="0.24" height="0.24" fill="#000024"/>
<rect x="-7.5" y="7.46" width="0.24" height="0.24" fill="#00002a"/>
<rect x="-7.3" y="7.46" width="0.24" height="0.24" fill="#000036"/>
<rect x="-7.1" y="7.46" width="0.24" height="0.24" fill="#000042"/>
<rect x="-6.9" y="7.46" width="0.24" height="0.24" fill="#000054"/>
<rect x="-6.7" y="7.46" width="0.24" height="0.24" fill="#000060"/>
<rect x="-6.5" y="7.46" width="0.24" height="0.24" fill="#00006c"/>
<rect x="-6.3" y="7.46" width="0.24" height="0.24" fill="#000078"/>
<rect x="-6.1" y="7.46" width="0.24" height="0.24" fill="#000084"/>
<rect x="-5.91" y="7.46" width="0.24" height="0.24" fill="#000090"/>
<rect x="-5.71" y="7.46" width="0.24" height="0.24" fill="#000096"/>
<rect x="-5.51" y="7.46" width="0.24" height="0.24" fill="#0000a2"/>
<rect x="-5.31" y="7.46" width="0.24" height="0.24" fill="#0000ae"/>
<rect x="-5.11" y="7.46" width="0.24" height="0.24" fill="#0000b4"/>
<rect x="-4.91" y="7.46" width="0.24" height="0.24" fill="#0000c0"/>
<rect x="-4.71" y="7.46" width="0.24" height="0.24" fill="#0000c6"/>
<rect x="-4.51" y="7.46" width="9.02" height="0.24" fill="#0000cc"/>
<rect x="4.47" y="7.46" width="0.24" height="0.24" fill="#0000c6"/>
<rect x="4.67" y="7.46" width="0.24" height="0.24" fill="#0000c0"/>
<rect x="4.87" y="7.46" width="0.24" height="0.24" fill="#0000b4"/>
<rect x="5.07" y="7.46" width="0.24" height="0.24" fill="#0000ae"/>
<rect x="5.27" y="7.46" width="0.24" height="0.24" fill="#0000a2"/>
<rect x="5.47" y="7.46" width="0.24" height="0.24" fill="#000096"/>
<rect x="5.67" y="7.46" width="0.24" height="0.24" fill="#000090"/>
<rect x="5.87" y="7.46" width="0.24" height="0.24" fill="#000084"/>
<rect x="6.06" y="7.46" width="0.24" height="0.24" fill="#000078"/>
<rect x="6.26" y="7.46" width="0.24" height="0.24" fill="#00006c"/>
<rect x="6.46" y="7.46" width="0.24" height="0.24" fill="#000060"/>
<rect x="6.66" y="7.46" width="0.24" height="0.24" fill="#000054"/>
<rect x="6.86" y="7.46" width="0.24" height="0.24" fill="#000042"/>
<rect x="7.06" y="7.46" width="0.24" height="0.24" fill="#000036"/>
<rect x="7.26" y="7.46" width="0.24" height="0.24" fill="#00002a"/>
<rect x="7.46" y="7.46" width="0.24" height="0.24" fill="#000024"/>
<rect x="7.66" y="7.46" width="0.24" height="0.24" fill="#000018"/>
<rect x="7.86" y="7.46" width="0.24" height="0.24" fill="#000012"/>
<rect x="-8.1" y="7.66" width="0.24" height="0.24" fill="#00000c"/>
<rect x="-7.9" y="7.66" width="0.24" height="0.24" fill="#000018"/>
<rect x="-7.7" y="7.66" width="0.24" height="0.24" fill="#00001e"/>
<rect x="-7.5" y="7.66" width="0.24" height="0.24" fill="#00002a"/>
<rect x="-7.3" y="7.66" width="0.24" height="0.24" fill="#000030"/>
<rect x="-7.1" y="7.66" width="0.24" height="0.24" fill="#00003c"/>
<rect x="-6.9" y="7.66" width="0.24" height="0.24" fill="#00004e"/>
<rect x="-6.7" y="7.66" width="0.24" height="0.24" fill="#00005a"/>
<rect x="-6.5" y="7.66" width="0.24" height="0.24" fill="#000066"/>
<rect x="-6.3" y="7.66" width="0.24" height="0.24" fill="#000072"/>
<rect x="-6.1" y="7.66" width="0.24" height="0.24" fill="#00007e"/>
<rect x="-5.91" y="7.66" width="0.24" height="0.24" fill="#000084"/>
<rect x="-5.71" y="7.66" width="0.24" height="0.24" fill="#000090"/>
<rect x="-5.51" y="7.66" width="0.24" height="0.24" fill="#00009c"/>
<rect x="-5.31" y="7.66" width="0.24" height="0.24" fill="#0000a2"/>
<rect x="-5.11" y="7.66" width="0.24" height="0.24" fill="#0000ae"/>
<rect x="-4.91" y="7.66" width="0.24" height="0.24" fill="#0000b4"/>
<rect x="-4.71" y="7.66" width="0.24" height="0.24" fill="#0000ba"/>
<rect x="-4.51" y="7.66" width="9.02" height="0.24" fill="#0000c6"/>
<rect x="4.47" y="7.66" width="0.24" height="0.24" fill="#0000ba"/>
<rect x="4.67" y="7.66" width="0.24" height="0.24" fill="#0000b4"/>
<rect x="4.87" y="7.66" width="0.24" height="0.24" fill="#0000ae"/>
<rect x="5.07" y="7.66" width="0.24" height="0.24" fill="#0000a2"/>
<rect x="5.27" y="7.66" width="0.24" height="0.24" fill="#00009c"/>
<rect x="5.47" y="7.66" width="0.24" height="0.24" fill="#000090"/>
<rect x="5.67" y="7.66" width="0.24" height="0.24" fill="#000084"/>
<rect x="5.87" y="7.66" width="0.24" height="0.24" fill="#00007e"/>
<rect x="6.06" y="7.66" width="0.24" height="0.24" fill="#000072"/>
<rect x="6.26" y="7.66" width="0.24" height="0.24" fill="#000066"/>
<rect x="6.46" y="7.66" width="0.24" height="0.24" fill="#00005a"/>
<rect x="6.66" y="7.66" width="0.24" height="0.24" fill="#00004e"/>
<rect x="6.86" y="7.66" width="0.24" height="0.24" fill="#00003c"/>
<rect x="7.06" y="7.66" width="0.24" height="0.24" fill="#000030"/>
<rect x="7.26" y="7.66" width="0.24" height="0.24" fill="#00002a"/>
<rect x="7.46" y="7.66" width="0.24" height="0.24" fill="#00001e"/>
<rect x="7.66" y="7.66" width="0.24" height="0.24" fill="#000018"/>
<rect x="7.86" y="7.66" width="0.24" height="0.24" fill="#00000c"/>
<rect x="-8.1" y="7.86" width="0.24" height="0.24" fill="#00000c"/>
<rect x="-7.9" y="7.86" width="0.24" height="0.24" fill="#000018"/>
<rect x="-7.7" y="7.86" width="0.24" height="0.24" fill="#00001e"/>
<rect x="-7.5" y="7.86" width="0.24" height="0.24" fill="#000024"/>
<rect x="-7.3" y="7.86" width="0.24" height="0.24" fill="#000030"/>
<rect x="-7.1" y="7.86" width="0.24" height="0.24" fill="#00003c"/>
<rect x="-6.9" y="7.86" width="0.24" height="0.24" fill="#000048"/>
<rect x="-6.7" y="7.86" width="0.24" height="0.24" fill="#000054"/>
<rect x="-6.5" y="7.86" width="0.24" height="0.24" fill="#000060"/>
<rect x="-6.3" y="7.86" width="0.24" height="0.24" fill="#00006c"/>
<rect x="-6.1" y="7.86" width="0.24" height="0.24" fill="#000078"/>
<rect x="-5.91" y="7.86" width="0.24" height="0.24" fill="#00007e"/>
<rect x="-5.71" y="7.86" width="0.24" height="0.24" fill="#00008a"/>
<rect x="-5.51" y="7.86" width="0.24" height="0.24" fill="#000090"/>
<rect x="-5.31" y="7.86" width="0.24" height="0.24" fill="#00009c"/>
<rect x="-5.11" y="7.86" width="0.24" height="0.24" fill="#0000a2"/>
<rect x="-4.91" y="7.86" width="0.24" height="0.24" fill="#0000ae"/>
<rect x="-4.71" y="7.86" width="0.24" height="0.24" fill="#0000b4"/>
<rect x="-4.51" y="7.86" width="0.24" height="0.24" fill="#0000ba"/>
<rect x="-4.31" y="7.86" width="1.04" height="0.24" fill="#0000c6"/>
<rect x="-3.31" y="7.86" width="6.62" height="0.24" fill="#0000c0"/>
<rect x="3.27" y="7.86" width="1.04" height="0.24" fill="#0000c6"/>
<rect x="4.27" y="7.86" width="0.24" height="0.24" fill="#0000ba"/>
<rect x="4.47" y="7.86" width="0.24" height="0.24" fill="#0000b4"/>
<rect x="4.67" y="7.86" width="0.24" height="0.24" fill="#0000ae"/>
<rect x="4.87" y="7.86" width="0.24" height="0.24" fill="#0000a2"/>
<rect x="5.07" y="7.86" width="0.24" height="0.24" fill="#00009c"/>
<rect x="5.27" y="7.86" width="0.24" height="0.24" fill="#000090"/>
<rect x="5.47" y="7.86" width="0.24" height="0.24" fill="#00008a"/>
<rect x="5.67" y="7.86" width="0.24" height="0.24" fill="#00007e"/>
<rect x="5.87" y="7.86" width="0.24" height="0.24" fill="#000078"/>
<rect x="6.06" y="7.86" width="0.24" height="0.24" fill="#00006c"/>
<rect x="6.26" y="7.86" width="0.24" height="0.24" fill="#000060"/>
<rect x="6.46" y="7.86" width="0.24" height="0.24" fill="#000054"/>
<rect x="6.66" y="7.86" width="0.24" height="0.24" fill="#000048"/>
<rect x="6.86" y="7.86" width="0.24" height="0.24" fill="#00003c"/>
<rect x="7.06" y="7.86" width="0.24" height="0.24" fill="#000030"/>
<rect x="7.26" y="7.86" width="0.24" height="0.24" fill="#000024"/>
<rect x="7.46" y="7.86" width="0.24" height="0.24" fill="#00001e"/>
<rect x="7.66" y="7.86" width="0.24" height="0.24" fill="#000018"/>
<rect x="7.86" y="7.86" width="0.24" height="0.24" fill="#00000c"/>
<rect x="-8.1" y="8.05" width="0.24" height="0.24" fill="#00000c"/>
<rect x="-7.9" y="8.05" width="0.24" height="0.24" fill="#000018"/>
<rect x="-7.7" y="8.05" width="0.24" height="0.24" fill="#00001e"/>
<rect x="-7.5" y="8.05" width="0.24" height="0.24" fill="#000024"/>
<rect x="-7.3" y="8.05" width="0.24" height="0.24" fill="#00002a"/>
<rect x="-7.1" y="8.05" width="0.24" height="0.24" fill="#000036"/>
<rect x="-6.9" y="8.05" width="0.24" height="0.24" fill="#000042"/>
<rect x="-6.7" y="8.05" width="0.24" height="0.24" fill="#00004e"/>
<rect x="-6.5" y="8.05" width="0.24" height="0.24" fill="#00005a"/>
<rect x="-6.3" y="8.05" width="0.24" height="0.24" fill="#000066"/>
<rect x="-6.1" y="8.05" width="0.24" height="0.24" fill="#000072"/>
<rect x="-5.91" y="8.05" width="0.24" height="0.24" fill="#000078"/>
<rect x="-5.71" y="8.05" width="0.24" height="0.24" fill="#000084"/>
<rect x="-5.51" y="8.05" width="0.24" height="0.24" fill="#00008a"/>
<rect x="-5.31" y="8.05" width="0.24" height="0.24" fill="#000096"/>
<rect x="-5.11" y="8.05" width="0.24" height="0.24" fill="#00009c"/>
<rect x="-4.91" y="8.05" width="0.24" height="0.24" fill="#0000a2"/>
<rect x="-4.71" y="8.05" width="0.24" height="0.24" fill="#0000ae"/>
<rect x="-4.51" y="8.05" width="0.24" height="0.24" fill="#0000b4"/>
<rect x="-4.31" y="8.05" width="0.24" height="0.24" fill="#0000ba"/>
<rect x="-4.11" y="8.05" width="8.22" height="0.24" fill="#0000c0"/>
<rect x="4.07" y="8.05" width="0.24" height="0.24" fill="#0000ba"/>
<rect x="4.27" y="8.05" width="0.24" height="0.24" fill="#0000b4"/>
<rect x="4.47" y="8.05" width="0.24" height="0.24" fill="#0000ae"/>
<rect x="4.67" y="8.05" width="0.24" height="0.24" fill="#0000a2"/>
<rect x="4.87" y="8.05" width="0.24" height="0.24" fill="#00009c"/>
<rect x="5.07" y="8.05" width="0.24" height="0.24" fill="#000096"/>
<rect x="5.27" y="8.05" width="0.24" height="0.24" fill="#00008a"/>
<rect x="5.47" y="8.05" width="0.24" height="0.24" fill="#000084"/>
<rect x="5.67" y="8.05" width="0.24" height="0.24" fill="#000078"/>
<rect x="5.87" y="8.05" width="0.24" height="0.24" fill="#000072"/>
<rect x="6.06" y="8.05" width="0.24" height="0.24" fill="#000066"/>
<rect x="6.26" y="8.05" width="0.24" height="0.24" fill="#00005a"/>
<rect x="6.46" y="8.05" width="0.24" height="0.24" fill="#00004e"/>
<rect x="6.66" y="8.05" width="0.24" height="0.24" fill="#000042"/>
<rect x="6.86" y="8.05" width="0.24" height="0.24" fill="#000036"/>
<rect x="7.06" y="8.05" width="0.24" height="0.24" fill="#00002a"/>
<rect x="7.26" y="8.05" width="0.24" height="0.24" fill="#000024"/>
<rect x="7.46" y="8.05" width="0.24" height="0.24" fill="#00001e"/>
<rect x="7.66" y="8.05" width="0.24" height="0.24" fill="#000018"/>
<rect x="7.86" y="8.05" width="0.24" height="0.24" fill="#00000c"/>
<rect x="-8.1" y="8.25" width="0.24" height="0.24" fill="#00000c"/>
<rect x="-7.9" y="8.25" width="0.24" height="0.24" fill="#000018"/>
<rect x="-7.7" y="8.25" width="0.24" height="0.24" fill="#00001e"/>
<rect x="-7.5" y="8.25" width="0.24" height="0.24" fill="#000024"/>
<rect x="-7.3" y="8.25" width="0.24" height="0.24" fill="#00002a"/>
<rect x="-7.1" y="8.25" width="0.24" height="0.24" fill="#000030"/>
<rect x="-6.9" y="8.25" width="0.24" height="0.24" fill="#00003c"/>
<rect x="-6.7" y="8.25" width="0.24" height="0.24" fill="#000048"/>
<rect x="-6.5" y="8.25" width="0.24" height="0.24" fill="#000054"/>
<rect x="-6.3" y="8.25" width="0.24" height="0.24" fill="#000060"/>
<rect x="-6.1" y="8.25" width="0.24" height="0.24" fill="#00006c"/>
<rect x="-5.91" y="8.25" width="0.24" height="0.24" fill="#000072"/>
<rect x="-5.71" y="8.25" width="0.24" height="0.24" fill="#00007e"/>
<rect x="-5.51" y="8.25" width="0.24" height="0.24" fill="#000084"/>
<rect x="-5.31" y="8.25" width="0.24" height="0.24" fill="#00008a"/>
<rect x="-5.11" y="8.25" width="0.24" height="0.24" fill="#000096"/>
<rect x="-4.91" y="8.25" width="0.24" height="0.24" fill="#00009c"/>
<rect x="-4.71" y="8.25" width="0.24" height="0.24" fill="#0000a2"/>
<rect x="-4.51" y="8.25" width="0.24" height="0.24" fill="#0000ae"/>
<rect x="-4.31" y="8.25" width="0.24" height="0.24" fill="#0000b4"/>
<rect x="-4.11" y="8.25" width="8.22" height="0.24" fill="#0000ba"/>
<rect x="4.07" y="8.25" width="0.24" height="0.24" fill="#0000b4"/>
<rect x="4.27" y="8.25" width="0.24" height="0.24" fill="#0000ae"/>
<rect x="4.47" y="8.25" width="0.24" height="0.24" fill="#0000a2"/>
<rect x="4.67" y="8.25" width="0.24" height="0.24" fill="#00009c"/>
<rect x="4.87" y="8.25" width="0.24" height="0.24" fill="#000096"/>
<rect x="5.07" y="8.25" width="0.24" height="0.24" fill="#00008a"/>
<rect x="5.27" y="8.25" width="0.24" height="0.24" fill="#000084"/>
<rect x="5.47" y="8.25" width="0.24" height="0.24" fill="#00007e"/>
<rect x="5.67" y="8.25" width="0.24" height="0.24" fill="#000072"/>
<rect x="5.87" y="8.25" width="0.24" height="0.24" fill="#00006c"/>
<rect x="6.06" y="8.25" width="0.24" height="0.24" fill="#000060"/>
<rect x="6.26" y="8.25" width="0.24" height="0.24" fill="#000054"/>
<rect x="6.46" y="8.25" width="0.24" height="0.24" fill="#000048"/>
<rect x="6.66" y="8.25" width="0.24" height="0.24" fill="#00003c"/>
<rect x="6.86" y="8.25" width="0.24" height="0.24" fill="#000030"/>
<rect x="7.06" y="8.25" width="0.24" height="0.24" fill="#00002a"/>
<rect x="7.26" y="8.25" width="0.24" height="0.24" fill="#000024"/>
<rect x="7.46" y="8.25" width="0.24" height="0.24" fill="#00001e"/>
<rect x="7.66" y="8.25" width="0.24" height="0.24" fill="#000018"/>
<rect x="7.86" y="8.25" width="0.24" height="0.24" fill="#00000c"/>
<rect x="-8.1" y="8.45" width="0.24" height="0.24" fill="#00000c"/>
<rect x="-7.9" y="8.45" width="0.24" height="0.24" fill="#000018"/>
<rect x="-7.7" y="8.45" width="0.24" height="0.24" fill="#00001e"/>
<rect x="-7.5" y="8.45" width="0.24" height="0.24" fill="#000024"/>
<rect x="-7.3" y="8.45" width="0.24" height="0.24" fill="#00002a"/>
<rect x="-7.1" y="8.45" width="0.24" height="0.24" fill="#000030"/>
<rect x="-6.9" y="8.45" width="0.24" height="0.24" fill="#00003c"/>
<rect x="-6.7" y="8.45" width="0.24" height="0.24" fill="#000042"/>
<rect x="-6.5" y="8.45" width="0.24" height="0.24" fill="#00004e"/>
<rect x="-6.3" y="8.45" width="0.24" height="0.24" fill="#00005a"/>
<rect x="-6.1" y="8.45" width="0.24" height="0.24" fill="#000066"/>
<rect x="-5.91" y="8.45" width="0.24" height="0.24" fill="#00006c"/>
<rect x="-5.71" y="8.45" width="0.24" height="0.24" fill="#000078"/>
<rect x="-5.51" y="8.45" width="0.24" height="0.24" fill="#00007e"/>
<rect x="-5.31" y="8.45" width="0.24" height="0.24" fill="#000084"/>
<rect x="-5.11" y="8.45" width="0.24" height="0.24" fill="#000090"/>
<rect x="-4.91" y="8.45" width="0.24" height="0.24" fill="#000096"/>
<rect x="-4.71" y="8.45" width="0.24" height="0.24" fill="#00009c"/>
<rect x="-4.51" y="8.45" width="0.24" height="0.24" fill="#0000a2"/>
<rect x="-4.31" y="8.45" width="0.24" height="0.24" fill="#0000ae"/>
<rect x="-4.11" y="8.45" width="0.24" height="0.24" fill="#0000b4"/>
<rect x="-3.91" y="8.45" width="0.64" height="0.24" fill="#0000ba"/>
<rect x="-3.31" y="8.45" width="6.62" height="0.24" fill="#0000b4"/>
<rect x="3.27" y="8.45" width="0.64" height="0.24" fill="#0000ba"/>
<rect x="3.87" y="8.45" width="0.24" height="0.24" fill="#0000b4"/>
<rect x="4.07" y="8.45" width="0.24" height="0.24" fill="#0000ae"/>
<rect x="4.27" y="8.45" width="0.24" height="0.24" fill="#0000a2"/>
<rect x="4.47" y="8.45" width="0.24" height="0.24" fill="#00009c"/>
<rect x="4.67" y="8.45" width="0.24" height="0.24" fill="#000096"/>
<rect x="4.87" y="8.45" width="0.24" height="0.24" fill="#000090"/>
<rect x="5.07" y="8.45" width="0.24" height="0.24" fill="#000084"/>
<rect x="5.27" y="8.45" width="0.24" height="0.24" fill="#00007e"/>
<rect x="5.47" y="8.45" width="0.24" height="0.24" fill="#000078"/>
<rect x="5.67" y="8.45" width="0.24" height="0.24" fill="#00006c"/>
<rect x="5.87" y="8.45" width="0.24" height="0.24" fill="#000066"/>
<rect x="6.06" y="8.45" width="0.24" height="0.24" fill="#00005a"/>
<rect x="6.26" y="8.45" width="0.24" height="0.24" fill="#00004e"/>
<rect x="6.46" y="8.45" width="0.24" height="0.24" fill="#000042"/>
<rect x="6.66" y="8.45" width="0.24" height="0.24" fill="#00003c"/>
<rect x="6.86" y="8.45" width="0.24" height="0.24" fill="#000030"/>
<rect x="7.06" y="8.45" width="0.24" height="0.24" fill="#00002a"/>
<rect x="7.26" y="8.45" width="0.24" height="0.24" fill="#000024"/>
<rect x="7.46" y="8.45" width="0.24" height="0.24" fill="#00001e"/>
<rect x="7.66" y="8.45" width="0.24" height="0.24" fill="#000018"/>
<rect x="7.86" y="8.45" width="0.24" height="0.24" fill="#00000c"/>
<rect x="-8.1" y="8.65" width="0.24" height="0.24" fill="#00000c"/>
<rect x="-7.9" y="8.65" width="0.24" height="0.24" fill="#000018"/>
<rect x="-7.7" y="8.65" width="0.24" height="0.24" fill="#00001e"/>
<rect x="-7.5" y="8.65" width="0.24" height="0.24" fill="#000024"/>
<rect x="-7.3" y="8.65" width="0.44" height="0.24" fill="#00002a"/>
<rect x="-6.9" y="8.65" width="0.24" height="0.24" fill="#000036"/>
<rect x="-6.7" y="8.65" width="0.24" height="0.24" fill="#000042"/>
<rect x="-6.5" y="8.65" width="0.24" height="0.24" fill="#000048"/>
<rect x="-6.3" y="8.65" width="0.24" height="0.24" fill="#000054"/>
<rect x="-6.1" y="8.65" width="0.24" height="0.24" fill="#000060"/>
<rect x="-5.91" y="8.65" width="0.24" height="0.24" fill="#000066"/>
<rect x="-5.71" y="8.65" width="0.24" height="0.24" fill="#000072"/>
<rect x="-5.51" y="8.65" width="0.24" height="0.24" fill="#000078"/>
<rect x="-5.31" y="8.65" width="0.24" height="0.24" fill="#00007e"/>
<rect x="-5.11" y="8.65" width="0.24" height="0.24" fill="#00008a"/>
<rect x="-4.91" y="8.65" width="0.24" height="0.24" fill="#000090"/>
<rect x="-4.71" y="8.65" width="0.24" height="0.24" fill="#000096"/>
<rect x="-4.51" y="8.65" width="0.24" height="0.24" fill="#00009c"/>
<rect x="-4.31" y="8.65" width="0.24" height="0.24" fill="#0000a2"/>
<rect x="-4.11" y="8.65" width="0.24" height="0.24" fill="#0000a8"/>
<rect x="-3.91" y="8.65" width="0.24" height="0.24" fill="#0000ae"/>
<rect x="-3.71" y="8.65" width="7.42" height="0.24" fill="#0000b4"/>
<rect x="3.67" y="8.65" width="0.24" height="0.24" fill="#0000ae"/>
<rect x="3.87" y="8.65" width="0.24" height="0.24" fill="#0000a8"/>
<rect x="4.07" y="8.65" width="0.24" height="0.24" fill="#0000a2"/>
<rect x="4.27" y="8.65" width="0.24" height="0.24" fill="#00009c"/>
<rect x="4.47" y="8.65" width="0.24" height="0.24" fill="#000096"/>
<rect x="4.67" y="8.65" width="0.24" height="0.24" fill="#000090"/>
<rect x="4.87" y="8.65" width="0.24" height="0.24" fill="#00008a"/>
<rect x="5.07" y="8.65" width="0.24" height="0.24" fill="#00007e"/>
<rect x="5.27" y="8.65" width="0.24" height="0.24" fill="#000078"/>
<rect x="5.47" y="8.65" width="0.24" height="0.24" fill="#000072"/>
<rect x="5.67" y="8.65" width="0.24" height="0.24" fill="#000066"/>
<rect x="5.87" y="8.65" width="0.24" height="0.24" fill="#000060"/>
<rect x="6.06" y="8.65" width="0.24" height="0.24" fill="#000054"/>
<rect x="6.26" y="8.65" width="0.24" height="0.24" fill="#000048"/>
<rect x="6.46" y="8.65" width="0.24" height="0.24" fill="#000042"/>
<rect x="6.66" y="8.65" width="0.24" height="0.24" fill="#000036"/>
<rect x="6.86" y="8.65" width="0.44" height="0.24" fill="#00002a"/>
<rect x="7.26" y="8.65" width="0.24" height="0.24" fill="#000024"/>
<rect x="7.46" y="8.65" width="0.24" height="0.24" fill="#00001e"/>
<rect x="7.66" y="8.65" width="0.24" height="0.24" fill="#000018"/>
<rect x="7.86" y="8.65" width="0.24" height="0.24" fill="#00000c"/>
<rect x="-8.1" y="8.85" width="0.24" height="0.24" fill="#00000c"/>
<rect x="-7.9" y="8.85" width="0.24" height="0.24" fill="#000012"/>
<rect x="-7.7" y="8.85" width="0.44" height="0.24" fill="#00001e"/>
<rect x="-7.3" y="8.85" width="0.24" height="0.24" fill="#000024"/>
<rect x="-7.1" y="8.85" width="0.24" height="0.24" fill="#00002a"/>
<rect x="-6.9" y="8.85" width="0.24" height="0.24" fill="#000030"/>
<rect x="-6.7" y="8.85" width="0.24" height="0.24" fill="#00003c"/>
<rect x="-6.5" y="8.85" width="0.24" height="0.24" fill="#000048"/>
<rect x="-6.3" y="8.85" width="0.24" height="0.24" fill="#00004e"/>
<rect x="-6.1" y="8.85" width="0.24" height="0.24" fill="#00005a"/>
<rect x="-5.91" y="8.85" width="0.24" height="0.24" fill="#000060"/>
<rect x="-5.71" y="8.85" width="0.24" height="0.24" fill="#00006c"/>
<rect x="-5.51" y="8.85" width="0.24" height="0.24" fill="#000072"/>
<rect x="-5.31" y="8.85" width="0.24" height="0.24" fill="#000078"/>
<rect x="-5.11" y="8.85" width="0.24" height="0.24" fill="#000084"/>
<rect x="-4.91" y="8.85" width="0.24" height="0.24" fill="#00008a"/>
<rect x="-4.71" y="8.85" width="0.24" height="0.24" fill="#000090"/>
<rect x="-4.51" y="8.85" width="0.24" height="0.24" fill="#000096"/>
<rect x="-4.31" y="8.85" width="0.24" height="0.24" fill="#00009c"/>
<rect x="-4.11" y="8.85" width="0.24" height="0.24" fill="#0000a2"/>
<rect x="-3.91" y="8.85" width="0.24" height="0.24" fill="#0000a8"/>
<rect x="-3.71" y="8.85" width="7.42" height="0.24" fill="#0000ae"/>
<rect x="3.67" y="8.85" width="0.24" height="0.24" fill="#0000a8"/>
<rect x="3.87" y="8.85" width="0.24" height="0.24" fill="#0000a2"/>
<rect x="4.07" y="8.85" width="0.24" height="0.24" fill="#00009c"/>
<rect x="4.27" y="8.85" width="0.24" height="0.24" fill="#000096"/>
<rect x="4.47" y="8.85" width="0.24" height="0.24" fill="#000090"/>
<rect x="4.67" y="8.85" width="0.24" height="0.24" fill="#00008a"/>
<rect x="4.87" y="8.85" width="0.24" height="0.24" fill="#000084"/>
<rect x="5.07" y="8.85" width="0.24" height="0.24" fill="#000078"/>
<rect x="5.27" y="8.85" width="0.24" height="0.24" fill="#000072"/>
<rect x="5.47" y="8.85" width="0.24" height="0.24" fill="#00006c"/>
<rect x="5.67" y="8.85" width="0.24" height="0.24" fill="#000060"/>
<rect x="5.87" y="8.85" width="0.24" height="0.24" fill="#00005a"/>
<rect x="6.06" y="8.85" width="0.24" height="0.24" fill="#00004e"/>
<rect x="6.26" y="8.85" width="0.24" height="0.24" fill="#000048"/>
<rect x="6.46" y="8.85" width="0.24" height="0.24" fill="#00003c"/>
<rect x="6.66" y="8.85" width="0.24" height="0.24" fill="#000030"/>
<rect x="6.86" y="8.85" width="0.24" height="0.24" fill="#00002a"/>
<rect x="7.06" y="8.85" width="0.24" height="0.24" fill="#000024"/>
<rect x="7.26" y="8.85" width="0.44" height="0.24" fill="#00001e"/>
<rect x="7.66" y="8.85" width="0.24" height="0.24" fill="#000012"/>
<rect x="7.86" y="8.85" width="0.24" height="0.24" fill="#00000c"/>
</g>
<clipPath id="lowclip"><polygon points="242.48,562.38 504.92,334.62 504.92,477.33 242.48,705.09"/></clipPath>
<g clip-path="url(#lowclip)" shape-rendering="crispEdges">
<line x1="-1400.3" y1="688.34" x2="-101.1" y2="-439.18" stroke="#f0f0e0" stroke-width="2"/>
<line x1="-1400.3" y1="688.34" x2="848.5" y2="1336.18" stroke="#f0f0e0" stroke-width="2"/>
<line x1="-1372.19" y1="696.44" x2="-72.99" y2="-431.08" stroke="#f0f0e0" stroke-width="1"/>
<line x1="-1384.06" y1="674.25" x2="864.74" y2="1322.09" stroke="#f0f0e0" stroke-width="1"/>
<line x1="-1344.08" y1="704.54" x2="-44.88" y2="-422.98" stroke="#f0f0e0" stroke-width="1"/>
<line x1="-1367.82" y1="660.15" x2="880.98" y2="1307.99" stroke="#f0f0e0" stroke-width="1"/>
<line x1="-1315.97" y1="712.63" x2="-16.77" y2="-414.89" stroke="#f0f0e0" stroke-width="1"/>
<line x1="-1351.58" y1="646.06" x2="897.22" y2="1293.9" stroke="#f0f0e0" stroke-width="1"/>
<line x1="-1287.86" y1="720.73" x2="11.34" y2="-406.79" stroke="#f0f0e0" stroke-width="1"/>
<line x1="-1335.34" y1="631.96" x2="913.46" y2="1279.8" stroke="#f0f0e0" stroke-width="1"/>
<line x1="-1259.75" y1="728.83" x2="39.45" y2="-398.69" stroke="#f0f0e0" stroke-width="1"/>
<line x1="-1319.1" y1="617.87" x2="929.7" y2="1265.71" stroke="#f0f0e0" stroke-width="1"/>
<line x1="-1231.64" y1="736.93" x2="67.56" y2="-390.59" stroke="#f0f0e0" stroke-width="1"/>
<line x1="-1302.86" y1="603.78" x2="945.94" y2="1251.62" stroke="#f0f0e0" stroke-width="1"/>
<line x1="-1203.53" y1="745.03" x2="95.67" y2="-382.49" stroke="#f0f0e0" stroke-width="1"/>
<line x1="-1286.62" y1="589.68" x2="962.18" y2="1237.52" stroke="#f0f0e0" stroke-width="1"/>
<line x1="-1175.42" y1="753.12" x2="123.78" y2="-374.4" stroke="#f0f0e0" stroke-width="1"/>
<line x1="-1270.38" y1="575.59" x2="978.42" y2="1223.43" stroke="#f0f0e0" stroke-width="1"/>
<line x1="-1147.31" y1="761.22" x2="151.89" y2="-366.3" stroke="#f0f0e0" stroke-width="1"/>
<line x1="-1254.14" y1="561.49" x2="994.66" y2="1209.33" stroke="#f0f0e0" stroke-width="1"/>
<line x1="-1119.2" y1="769.32" x2="180" y2="-358.2" stroke="#f0f0e0" stroke-width="1"/>
<line x1="-1237.9" y1="547.4" x2="1010.9" y2="1195.24" stroke="#f0f0e0" stroke-width="2"/>
<line x1="-1091.09" y1="777.42" x2="208.11" y2="-350.1" stroke="#f0f0e0" stroke-width="1"/>
<line x1="-1221.66" y1="533.31" x2="1027.14" y2="1181.15" stroke="#f0f0e0" stroke-width="1"/>
<line x1="-1062.98" y1="785.52" x2="236.22" y2="-342" stroke="#f0f0e0" stroke-width="1"/>
<line x1="-1205.42" y1="519.21" x2="1043.38" y2="1167.05" stroke="#f0f0e0" stroke-width="1"/>
<line x1="-1034.87" y1="793.61" x2="264.33" y2="-333.91" stroke="#f0f0e0" stroke-width="1"/>
<line x1="-1189.18" y1="505.12" x2="1059.62" y2="1152.96" stroke="#f0f0e0" stroke-width="1"/>
<line x1="-1006.76" y1="801.71" x2="292.44" y2="-325.81" stroke="#f0f0e0" stroke-width="1"/>
<line x1="-1172.94" y1="491.02" x2="1075.86" y2="1138.86" stroke="#f0f0e0" stroke-width="1"/>
<line x1="-978.65" y1="809.81" x2="320.55" y2="-317.71" stroke="#f0f0e0" stroke-width="1"/>
<line x1="-1156.7" y1="476.93" x2="1092.1" y2="1124.77" stroke="#f0f0e0" stroke-width="1"/>
<line x1="-950.54" y1="817.91" x2="348.66" y2="-309.61" stroke="#f0f0e0" stroke-width="1"/>
<line x1="-1140.46" y1="462.84" x2="1108.34" y2="1110.68" stroke="#f0f0e0" stroke-width="1"/>
<line x1="-922.43" y1="826.01" x2="376.77" y2="-301.51" stroke="#f0f0e0" stroke-width="1"/>
<line x1="-1124.22" y1="448.74" x2="1124.58" y2="1096.58" stroke="#f0f0e0" stroke-width="1"/>
<line x1="-894.32" y1="834.1" x2="404.88" y2="-293.42" stroke="#f0f0e0" stroke-width="1"/>
<line x1="-1107.98" y1="434.65" x2="1140.82" y2="1082.49" stroke="#f0f0e0" stroke-width="1"/>
<line x1="-866.21" y1="842.2" x2="432.99" y2="-285.32" stroke="#f0f0e0" stroke-width="1"/>
<line x1="-1091.74" y1="420.55" x2="1157.06" y2="1068.39" stroke="#f0f0e0" stroke-width="1"/>
<line x1="-838.1" y1="850.3" x2="461.1" y2="-277.22" stroke="#f0f0e0" stroke-width="2"/>
<line x1="-1075.5" y1="406.46" x2="1173.3" y2="1054.3" stroke="#f0f0e0" stroke-width="2"/>
<line x1="-809.99" y1="858.4" x2="489.21" y2="-269.12" stroke="#f0f0e0" stroke-width="1"/>
<line x1="-1059.26" y1="392.37" x2="1189.54" y2="1040.21" stroke="#f0f0e0" stroke-width="1"/>
<line x1="-781.88" y1="866.5" x2="517.32" y2="-261.02" stroke="#f0f0e0" stroke-width="1"/>
<line x1="-1043.02" y1="378.27" x2="1205.78" y2="1026.11" stroke="#f0f0e0" stroke-width="1"/>
<line x1="-753.77" y1="874.59" x2="545.43" y2="-252.93" stroke="#f0f0e0" stroke-width="1"/>
<line x1="-1026.78" y1="364.18" x2="1222.02" y2="1012.02" stroke="#f0f0e0" stroke-width="1"/>
<line x1="-725.66" y1="882.69" x2="573.54" y2="-244.83" stroke="#f0f0e0" stroke-width="1"/>
<line x1="-1010.54" y1="350.08" x2="1238.26" y2="997.92" stroke="#f0f0e0" stroke-width="1"/>
<line x1="-697.55" y1="890.79" x2="601.65" y2="-236.73" stroke="#f0f0e0" stroke-width="1"/>
<line x1="-994.3" y1="335.99" x2="1254.5" y2="983.83" stroke="#f0f0e0" stroke-width="1"/>
<line x1="-669.44" y1="898.89" x2="629.76" y2="-228.63" stroke="#f0f0e0" stroke-width="1"/>
<line x1="-978.06" y1="321.9" x2="1270.74" y2="969.74" stroke="#f0f0e0" stroke-width="1"/>
<line x1="-641.33" y1="906.99" x2="657.87" y2="-220.53" stroke="#f0f0e0" stroke-width="1"/>
<line x1="-961.82" y1="307.8" x2="1286.98" y2="955.64" stroke="#f0f0e0" stroke-width="1"/>
<line x1="-613.22" y1="915.08" x2="685.98" y2="-212.44" stroke="#f0f0e0" stroke-width="1"/>
<line x1="-945.58" y1="293.71" x2="1303.22" y2="941.55" stroke="#f0f0e0" stroke-width="1"/>
<line x1="-585.11" y1="923.18" x2="714.09" y2="-204.34" stroke="#f0f0e0" stroke-width="1"/>
<line x1="-929.34" y1="279.61" x2="1319.46" y2="927.45" stroke="#f0f0e0" stroke-width="1"/>
<line x1="-557" y1="931.28" x2="742.2" y2="-196.24" stroke="#f0f0e0" stroke-width="1"/>
<line x1="-913.1" y1="265.52" x2="1335.7" y2="913.36" stroke="#f0f0e0" stroke-width="2"/>
<line x1="-528.89" y1="939.38" x2="770.31" y2="-188.14" stroke="#f0f0e0" stroke-width="1"/>
<line x1="-896.86" y1="251.43" x2="1351.94" y2="899.27" stroke="#f0f0e0" stroke-width="1"/>
<line x1="-500.78" y1="947.48" x2="798.42" y2="-180.04" stroke="#f0f0e0" stroke-width="1"/>
<line x1="-880.62" y1="237.33" x2="1368.18" y2="885.17" stroke="#f0f0e0" stroke-width="1"/>
<line x1="-472.67" y1="955.57" x2="826.53" y2="-171.95" stroke="#f0f0e0" stroke-width="1"/>
<line x1="-864.38" y1="223.24" x2="1384.42" y2="871.08" stroke="#f0f0e0" stroke-width="1"/>
<line x1="-444.56" y1="963.67" x2="854.64" y2="-163.85" stroke="#f0f0e0" stroke-width="1"/>
<line x1="-848.14" y1="209.14" x2="1400.66" y2="856.98" stroke="#f0f0e0" stroke-width="1"/>
<line x1="-416.45" y1="971.77" x2="882.75" y2="-155.75" stroke="#f0f0e0" stroke-width="1"/>
<line x1="-831.9" y1="195.05" x2="1416.9" y2="842.89" stroke="#f0f0e0" stroke-width="1"/>
<line x1="-388.34" y1="979.87" x2="910.86" y2="-147.65" stroke="#f0f0e0" stroke-width="1"/>
<line x1="-815.66" y1="180.96" x2="1433.14" y2="828.8" stroke="#f0f0e0" stroke-width="1"/>
<line x1="-360.23" y1="987.97" x2="938.97" y2="-139.55" stroke="#f0f0e0" stroke-width="1"/>
<line x1="-799.42" y1="166.86" x2="1449.38" y2="814.7" stroke="#f0f0e0" stroke-width="1"/>
<line x1="-332.12" y1="996.06" x2="967.08" y2="-131.46" stroke="#f0f0e0" stroke-width="1"/>
<line x1="-783.18" y1="152.77" x2="1465.62" y2="800.61" stroke="#f0f0e0" stroke-width="1"/>
<line x1="-304.01" y1="1004.16" x2="995.19" y2="-123.36" stroke="#f0f0e0" stroke-width="1"/>
<line x1="-766.94" y1="138.67" x2="1481.86" y2="786.51" stroke="#f0f0e0" stroke-width="1"/>
<line x1="-275.9" y1="1012.26" x2="1023.3" y2="-115.26" stroke="#f0f0e0" stroke-width="2"/>
<line x1="-750.7" y1="124.58" x2="1498.1" y2="772.42" stroke="#f0f0e0" stroke-width="2"/>
<line x1="-247.79" y1="1020.36" x2="1051.41" y2="-107.16" stroke="#f0f0e0" stroke-width="1"/>
<line x1="-734.46" y1="110.49" x2="1514.34" y2="758.33" stroke="#f0f0e0" stroke-width="1"/>
<line x1="-219.68" y1="1028.46" x2="1079.52" y2="-99.06" stroke="#f0f0e0" stroke-width="1"/>
<line x1="-718.22" y1="96.39" x2="1530.58" y2="744.23" stroke="#f0f0e0" stroke-width="1"/>
<line x1="-191.57" y1="1036.55" x2="1107.63" y2="-90.97" stroke="#f0f0e0" stroke-width="1"/>
<line x1="-701.98" y1="82.3" x2="1546.82" y2="730.14" stroke="#f0f0e0" stroke-width="1"/>
<line x1="-163.46" y1="1044.65" x2="1135.74" y2="-82.87" stroke="#f0f0e0" stroke-width="1"/>
<line x1="-685.74" y1="68.2" x2="1563.06" y2="716.04" stroke="#f0f0e0" stroke-width="1"/>
<line x1="-135.35" y1="1052.75" x2="1163.85" y2="-74.77" stroke="#f0f0e0" stroke-width="1"/>
<line x1="-669.5" y1="54.11" x2="1579.3" y2="701.95" stroke="#f0f0e0" stroke-width="1"/>
<line x1="-107.24" y1="1060.85" x2="1191.96" y2="-66.67" stroke="#f0f0e0" stroke-width="1"/>
<line x1="-653.26" y1="40.02" x2="1595.54" y2="687.86" stroke="#f0f0e0" stroke-width="1"/>
<line x1="-79.13" y1="1068.95" x2="1220.07" y2="-58.57" stroke="#f0f0e0" stroke-width="1"/>
<line x1="-637.02" y1="25.92" x2="1611.78" y2="673.76" stroke="#f0f0e0" stroke-width="1"/>
<line x1="-51.02" y1="1077.04" x2="1248.18" y2="-50.48" stroke="#f0f0e0" stroke-width="1"/>
<line x1="-620.78" y1="11.83" x2="1628.02" y2="659.67" stroke="#f0f0e0" stroke-width="1"/>
<line x1="-22.91" y1="1085.14" x2="1276.29" y2="-42.38" stroke="#f0f0e0" stroke-width="1"/>
<line x1="-604.54" y1="-2.27" x2="1644.26" y2="645.57" stroke="#f0f0e0" stroke-width="1"/>
<line x1="5.2" y1="1093.24" x2="1304.4" y2="-34.28" stroke="#f0f0e0" stroke-width="1"/>
<line x1="-588.3" y1="-16.36" x2="1660.5" y2="631.48" stroke="#f0f0e0" stroke-width="2"/>
<line x1="33.31" y1="1101.34" x2="1332.51" y2="-26.18" stroke="#f0f0e0" stroke-width="1"/>
<line x1="-572.06" y1="-30.45" x2="1676.74" y2="617.39" stroke="#f0f0e0" stroke-width="1"/>
<line x1="61.42" y1="1109.44" x2="1360.62" y2="-18.08" stroke="#f0f0e0" stroke-width="1"/>
<line x1="-555.82" y1="-44.55" x2="1692.98" y2="603.29" stroke="#f0f0e0" stroke-width="1"/>
<line x1="89.53" y1="1117.53" x2="1388.73" y2="-9.99" stroke="#f0f0e0" stroke-width="1"/>
<line x1="-539.58" y1="-58.64" x2="1709.22" y2="589.2" stroke="#f0f0e0" stroke-width="1"/>
<line x1="117.64" y1="1125.63" x2="1416.84" y2="-1.89" stroke="#f0f0e0" stroke-width="1"/>
<line x1="-523.34" y1="-72.74" x2="1725.46" y2="575.1" stroke="#f0f0e0" stroke-width="1"/>
<line x1="145.75" y1="1133.73" x2="1444.95" y2="6.21" stroke="#f0f0e0" stroke-width="1"/>
<line x1="-507.1" y1="-86.83" x2="1741.7" y2="561.01" stroke="#f0f0e0" stroke-width="1"/>
<line x1="173.86" y1="1141.83" x2="1473.06" y2="14.31" stroke="#f0f0e0" stroke-width="1"/>
<line x1="-490.86" y1="-100.92" x2="1757.94" y2="546.92" stroke="#f0f0e0" stroke-width="1"/>
<line x1="201.97" y1="1149.93" x2="1501.17" y2="22.41" stroke="#f0f0e0" stroke-width="1"/>
<line x1="-474.62" y1="-115.02" x2="1774.18" y2="532.82" stroke="#f0f0e0" stroke-width="1"/>
<line x1="230.08" y1="1158.02" x2="1529.28" y2="30.5" stroke="#f0f0e0" stroke-width="1"/>
<line x1="-458.38" y1="-129.11" x2="1790.42" y2="518.73" stroke="#f0f0e0" stroke-width="1"/>
<line x1="258.19" y1="1166.12" x2="1557.39" y2="38.6" stroke="#f0f0e0" stroke-width="1"/>
<line x1="-442.14" y1="-143.21" x2="1806.66" y2="504.63" stroke="#f0f0e0" stroke-width="1"/>
<line x1="286.3" y1="1174.22" x2="1585.5" y2="46.7" stroke="#f0f0e0" stroke-width="2"/>
<line x1="-425.9" y1="-157.3" x2="1822.9" y2="490.54" stroke="#f0f0e0" stroke-width="2"/>
<line x1="314.41" y1="1182.32" x2="1613.61" y2="54.8" stroke="#f0f0e0" stroke-width="1"/>
<line x1="-409.66" y1="-171.39" x2="1839.14" y2="476.45" stroke="#f0f0e0" stroke-width="1"/>
<line x1="342.52" y1="1190.42" x2="1641.72" y2="62.9" stroke="#f0f0e0" stroke-width="1"/>
<line x1="-393.42" y1="-185.49" x2="1855.38" y2="462.35" stroke="#f0f0e0" stroke-width="1"/>
<line x1="370.63" y1="1198.51" x2="1669.83" y2="70.99" stroke="#f0f0e0" stroke-width="1"/>
<line x1="-377.18" y1="-199.58" x2="1871.62" y2="448.26" stroke="#f0f0e0" stroke-width="1"/>
<line x1="398.74" y1="1206.61" x2="1697.94" y2="79.09" stroke="#f0f0e0" stroke-width="1"/>
<line x1="-360.94" y1="-213.68" x2="1887.86" y2="434.16" stroke="#f0f0e0" stroke-width="1"/>
<line x1="426.85" y1="1214.71" x2="1726.05" y2="87.19" stroke="#f0f0e0" stroke-width="1"/>
<line x1="-344.7" y1="-227.77" x2="1904.1" y2="420.07" stroke="#f0f0e0" stroke-width="1"/>
<line x1="454.96" y1="1222.81" x2="1754.16" y2="95.29" stroke="#f0f0e0" stroke-width="1"/>
<line x1="-328.46" y1="-241.86" x2="1920.34" y2="405.98" stroke="#f0f0e0" stroke-width="1"/>
<line x1="483.07" y1="1230.91" x2="1782.27" y2="103.39" stroke="#f0f0e0" stroke-width="1"/>
<line x1="-312.22" y1="-255.96" x2="1936.58" y2="391.88" stroke="#f0f0e0" stroke-width="1"/>
<line x1="511.18" y1="1239" x2="1810.38" y2="111.48" stroke="#f0f0e0" stroke-width="1"/>
<line x1="-295.98" y1="-270.05" x2="1952.82" y2="377.79" stroke="#f0f0e0" stroke-width="1"/>
<line x1="539.29" y1="1247.1" x2="1838.49" y2="119.58" stroke="#f0f0e0" stroke-width="1"/>
<line x1="-279.74" y1="-284.15" x2="1969.06" y2="363.69" stroke="#f0f0e0" stroke-width="1"/>
<line x1="567.4" y1="1255.2" x2="1866.6" y2="127.68" stroke="#f0f0e0" stroke-width="1"/>
<line x1="-263.5" y1="-298.24" x2="1985.3" y2="349.6" stroke="#f0f0e0" stroke-width="2"/>
<line x1="595.51" y1="1263.3" x2="1894.71" y2="135.78" stroke="#f0f0e0" stroke-width="1"/>
<line x1="-247.26" y1="-312.33" x2="2001.54" y2="335.51" stroke="#f0f0e0" stroke-width="1"/>
<line x1="623.62" y1="1271.4" x2="1922.82" y2="143.88" stroke="#f0f0e0" stroke-width="1"/>
<line x1="-231.02" y1="-326.43" x2="2017.78" y2="321.41" stroke="#f0f0e0" stroke-width="1"/>
<line x1="651.73" y1="1279.49" x2="1950.93" y2="151.97" stroke="#f0f0e0" stroke-width="1"/>
<line x1="-214.78" y1="-340.52" x2="2034.02" y2="307.32" stroke="#f0f0e0" stroke-width="1"/>
<line x1="679.84" y1="1287.59" x2="1979.04" y2="160.07" stroke="#f0f0e0" stroke-width="1"/>
<line x1="-198.54" y1="-354.62" x2="2050.26" y2="293.22" stroke="#f0f0e0" stroke-width="1"/>
<line x1="707.95" y1="1295.69" x2="2007.15" y2="168.17" stroke="#f0f0e0" stroke-width="1"/>
<line x1="-182.3" y1="-368.71" x2="2066.5" y2="279.13" stroke="#f0f0e0" stroke-width="1"/>
<line x1="736.06" y1="1303.79" x2="2035.26" y2="176.27" stroke="#f0f0e0" stroke-width="1"/>
<line x1="-166.06" y1="-382.8" x2="2082.74" y2="265.04" stroke="#f0f0e0" stroke-width="1"/>
<line x1="764.17" y1="1311.89" x2="2063.37" y2="184.37" stroke="#f0f0e0" stroke-width="1"/>
<line x1="-149.82" y1="-396.9" x2="2098.98" y2="250.94" stroke="#f0f0e0" stroke-width="1"/>
<line x1="792.28" y1="1319.98" x2="2091.48" y2="192.46" stroke="#f0f0e0" stroke-width="1"/>
<line x1="-133.58" y1="-410.99" x2="2115.22" y2="236.85" stroke="#f0f0e0" stroke-width="1"/>
<line x1="820.39" y1="1328.08" x2="2119.59" y2="200.56" stroke="#f0f0e0" stroke-width="1"/>
<line x1="-117.34" y1="-425.09" x2="2131.46" y2="222.75" stroke="#f0f0e0" stroke-width="1"/>
<line x1="848.5" y1="1336.18" x2="2147.7" y2="208.66" stroke="#f0f0e0" stroke-width="2"/>
<line x1="-101.1" y1="-439.18" x2="2147.7" y2="208.66" stroke="#f0f0e0" stroke-width="2"/>
</g>
<polygon points="243.78,701.99 503.62,476.49 503.62,82.42 243.78,307.92" fill="none" stroke="#a040d0" stroke-width="1.2" transform="translate(0.8,0)"/>
<line x1="243.78" y1="307.92" x2="468.66" y2="372.7" stroke="#4450ff" stroke-width="2"/>
<line x1="468.66" y1="508.66" x2="468.66" y2="372.7" stroke="#4450ff" stroke-width="2"/>
<line x1="468.66" y1="372.7" x2="504.88" y2="341.27" stroke="#4450ff" stroke-width="2"/>
<line x1="243.78" y1="504.96" x2="468.66" y2="569.74" stroke="#9933cc" stroke-width="2"/>
<line x1="373.7" y1="392.2" x2="598.58" y2="456.99" stroke="#9040c0" stroke-width="1"/>
<line x1="243.78" y1="504.96" x2="503.62" y2="279.45" stroke="#9050d0" stroke-width="1" stroke-dasharray="4 4"/>
<line x1="373.7" y1="448.5" x2="1076.45" y2="650.95" stroke="#ff0000" stroke-width="2"/>
<line x1="454.9" y1="378.03" x2="1023.3" y2="-115.26" stroke="#00ee00" stroke-width="1.6"/>
<line x1="292.5" y1="518.97" x2="454.9" y2="378.03" stroke="#000048" stroke-width="3.6"/>
<line x1="292.5" y1="406.38" x2="454.9" y2="265.44" stroke="#000048" stroke-width="3.6"/>
<line x1="374.5" y1="449.3" x2="455.7" y2="378.83" stroke="#00dd00" stroke-width="1.2" stroke-dasharray="2 5"/>
</svg><svg width="907" height="784" style="position:absolute;left:0;top:0">
<defs><linearGradient id="cb" x1="0" y1="0" x2="0" y2="1"><stop offset="0" stop-color="#ffffff"/><stop offset="0.1" stop-color="#fff000"/><stop offset="0.2" stop-color="#ffb030"/><stop offset="0.29" stop-color="#ff8870"/><stop offset="0.38" stop-color="#ff60a0"/><stop offset="0.48" stop-color="#c020d0"/><stop offset="0.57" stop-color="#9010f0"/><stop offset="0.69" stop-color="#2000ff"/><stop offset="0.77" stop-color="#0000d0"/><stop offset="0.85" stop-color="#000080"/><stop offset="0.92" stop-color="#000030"/><stop offset="1" stop-color="#000008"/></linearGradient></defs>
<rect x="754.5" y="17.5" width="140" height="340" fill="#f4f4f4" stroke="#000" stroke-width="1"/>
<line x1="754" y1="42.5" x2="895" y2="42.5" stroke="#000" stroke-width="1"/>
<line x1="754" y1="68.5" x2="895" y2="68.5" stroke="#000" stroke-width="1"/>
<line x1="754" y1="264.5" x2="895" y2="264.5" stroke="#000" stroke-width="1"/>
<rect x="769" y="79" width="21" height="170" fill="url(#cb)"/>
<text x="769" y="34" font-family="Liberation Sans, sans-serif" font-size="15" fill="#000">EMagTotal</text>
<text x="769" y="60" font-family="Liberation Sans, sans-serif" font-size="15" fill="#000">Type: Linear</text>
<text x="817.3" y="86" font-family="Liberation Sans, sans-serif" font-size="15" fill="#000" text-anchor="middle">987</text>
<text x="817.3" y="102.9" font-family="Liberation Sans, sans-serif" font-size="15" fill="#000" text-anchor="middle">889</text>
<text x="817.3" y="119.8" font-family="Liberation Sans, sans-serif" font-size="15" fill="#000" text-anchor="middle">790</text>
<text x="817.3" y="136.7" font-family="Liberation Sans, sans-serif" font-size="15" fill="#000" text-anchor="middle">691</text>
<text x="817.3" y="153.6" font-family="Liberation Sans, sans-serif" font-size="15" fill="#000" text-anchor="middle">592</text>
<text x="817.3" y="170.5" font-family="Liberation Sans, sans-serif" font-size="15" fill="#000" text-anchor="middle">493</text>
<text x="817.3" y="187.4" font-family="Liberation Sans, sans-serif" font-size="15" fill="#000" text-anchor="middle">395</text>
<text x="817.3" y="204.3" font-family="Liberation Sans, sans-serif" font-size="15" fill="#000" text-anchor="middle">296</text>
<text x="817.3" y="221.2" font-family="Liberation Sans, sans-serif" font-size="15" fill="#000" text-anchor="middle">197</text>
<text x="817.3" y="238.1" font-family="Liberation Sans, sans-serif" font-size="15" fill="#000" text-anchor="middle">98</text>
<text x="817.3" y="255" font-family="Liberation Sans, sans-serif" font-size="15" fill="#000" text-anchor="middle">0</text>
<text x="769" y="281" font-family="Liberation Sans, sans-serif" font-size="15" fill="#000">Max: 988</text>
<text x="769" y="297.95" font-family="Liberation Sans, sans-serif" font-size="15" fill="#000">Min: 0</text>
<text x="769" y="314.9" font-family="Liberation Sans, sans-serif" font-size="15" fill="#000">Units: V/m</text>
<text x="769" y="331.85" font-family="Liberation Sans, sans-serif" font-size="15" fill="#000">Mean: 234</text>
<text x="769" y="348.8" font-family="Liberation Sans, sans-serif" font-size="15" fill="#000">STD: 150</text>
</svg></body></html>
